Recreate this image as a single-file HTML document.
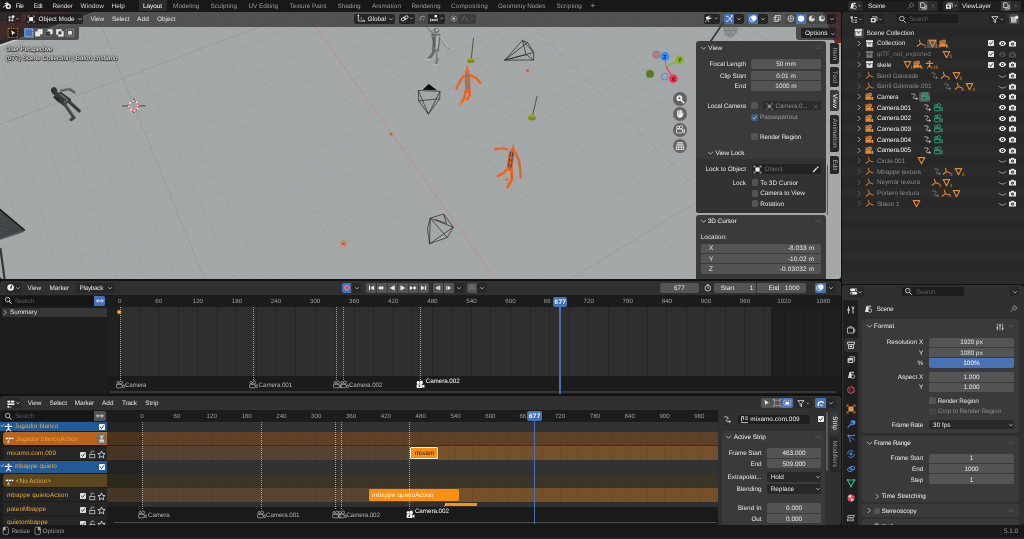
<!DOCTYPE html>
<html lang="en"><head><meta charset="utf-8"><title>Blender</title><style>
html,body{margin:0;padding:0;background:#121212;}
body{width:1024px;height:539px;position:relative;overflow:hidden;font-family:"Liberation Sans", sans-serif;}
div,span.t,svg{position:absolute;box-sizing:border-box;}
span.t{white-space:nowrap;text-rendering:geometricPrecision;}
body{transform:translateZ(0);will-change:transform;}
</style></head><body>
<div style="left:0px;top:0px;width:1024px;height:12px;background:#181818;"></div>
<div style="left:0;top:12px;width:841px;height:267px;border-radius:3px;overflow:hidden;background:#a4a8a8"><svg style="left:0;top:0" width="841" height="267" viewBox="0 12 841 267"><line x1="-52.2" y1="12" x2="0.2" y2="279" stroke="#8c9191" stroke-width="0.6" opacity="0.28"/><line x1="-31.0" y1="12" x2="29.4" y2="279" stroke="#8c9191" stroke-width="0.6" opacity="0.28"/><line x1="-9.9" y1="12" x2="58.6" y2="279" stroke="#8c9191" stroke-width="0.6" opacity="0.28"/><line x1="11.2" y1="12" x2="87.8" y2="279" stroke="#8c9191" stroke-width="0.6" opacity="0.28"/><line x1="32.4" y1="12" x2="117.0" y2="279" stroke="#8c9191" stroke-width="0.6" opacity="0.28"/><line x1="53.5" y1="12" x2="146.2" y2="279" stroke="#8c9191" stroke-width="0.6" opacity="0.28"/><line x1="74.7" y1="12" x2="175.3" y2="279" stroke="#8c9191" stroke-width="0.6" opacity="0.28"/><line x1="95.8" y1="12" x2="204.5" y2="279" stroke="#7c8282" stroke-width="0.7" opacity="0.42"/><line x1="117.0" y1="12" x2="233.7" y2="279" stroke="#8c9191" stroke-width="0.6" opacity="0.28"/><line x1="138.1" y1="12" x2="262.9" y2="279" stroke="#8c9191" stroke-width="0.6" opacity="0.28"/><line x1="159.2" y1="12" x2="292.1" y2="279" stroke="#8c9191" stroke-width="0.6" opacity="0.28"/><line x1="180.4" y1="12" x2="321.3" y2="279" stroke="#8c9191" stroke-width="0.6" opacity="0.28"/><line x1="201.5" y1="12" x2="350.4" y2="279" stroke="#8c9191" stroke-width="0.6" opacity="0.28"/><line x1="222.7" y1="12" x2="379.6" y2="279" stroke="#8c9191" stroke-width="0.6" opacity="0.28"/><line x1="243.8" y1="12" x2="408.8" y2="279" stroke="#8c9191" stroke-width="0.6" opacity="0.28"/><line x1="265.0" y1="12" x2="438.0" y2="279" stroke="#8c9191" stroke-width="0.6" opacity="0.28"/><line x1="286.1" y1="12" x2="467.2" y2="279" stroke="#8c9191" stroke-width="0.6" opacity="0.28"/><line x1="328.4" y1="12" x2="525.6" y2="279" stroke="#8c9191" stroke-width="0.6" opacity="0.28"/><line x1="349.5" y1="12" x2="554.7" y2="279" stroke="#8c9191" stroke-width="0.6" opacity="0.28"/><line x1="370.7" y1="12" x2="583.9" y2="279" stroke="#8c9191" stroke-width="0.6" opacity="0.28"/><line x1="391.8" y1="12" x2="613.1" y2="279" stroke="#8c9191" stroke-width="0.6" opacity="0.28"/><line x1="413.0" y1="12" x2="642.3" y2="279" stroke="#8c9191" stroke-width="0.6" opacity="0.28"/><line x1="434.1" y1="12" x2="671.5" y2="279" stroke="#8c9191" stroke-width="0.6" opacity="0.28"/><line x1="455.3" y1="12" x2="700.7" y2="279" stroke="#8c9191" stroke-width="0.6" opacity="0.28"/><line x1="476.4" y1="12" x2="729.9" y2="279" stroke="#8c9191" stroke-width="0.6" opacity="0.28"/><line x1="497.5" y1="12" x2="759.0" y2="279" stroke="#8c9191" stroke-width="0.6" opacity="0.28"/><line x1="518.7" y1="12" x2="788.2" y2="279" stroke="#7c8282" stroke-width="0.7" opacity="0.42"/><line x1="539.8" y1="12" x2="817.4" y2="279" stroke="#8c9191" stroke-width="0.6" opacity="0.28"/><line x1="561.0" y1="12" x2="846.6" y2="279" stroke="#8c9191" stroke-width="0.6" opacity="0.28"/><line x1="582.1" y1="12" x2="875.8" y2="279" stroke="#8c9191" stroke-width="0.6" opacity="0.28"/><line x1="603.3" y1="12" x2="905.0" y2="279" stroke="#8c9191" stroke-width="0.6" opacity="0.28"/><line x1="624.4" y1="12" x2="934.2" y2="279" stroke="#8c9191" stroke-width="0.6" opacity="0.28"/><line x1="645.5" y1="12" x2="963.3" y2="279" stroke="#8c9191" stroke-width="0.6" opacity="0.28"/><line x1="666.7" y1="12" x2="992.5" y2="279" stroke="#8c9191" stroke-width="0.6" opacity="0.28"/><line x1="687.8" y1="12" x2="1021.7" y2="279" stroke="#8c9191" stroke-width="0.6" opacity="0.28"/><line x1="709.0" y1="12" x2="1050.9" y2="279" stroke="#8c9191" stroke-width="0.6" opacity="0.28"/><line x1="730.1" y1="12" x2="1080.1" y2="279" stroke="#7c8282" stroke-width="0.7" opacity="0.42"/><line x1="751.3" y1="12" x2="1109.3" y2="279" stroke="#8c9191" stroke-width="0.6" opacity="0.28"/><line x1="772.4" y1="12" x2="1138.5" y2="279" stroke="#8c9191" stroke-width="0.6" opacity="0.28"/><line x1="793.6" y1="12" x2="1167.6" y2="279" stroke="#8c9191" stroke-width="0.6" opacity="0.28"/><line x1="814.7" y1="12" x2="1196.8" y2="279" stroke="#8c9191" stroke-width="0.6" opacity="0.28"/><line x1="835.8" y1="12" x2="1226.0" y2="279" stroke="#8c9191" stroke-width="0.6" opacity="0.28"/><line x1="156.5" y1="12" x2="-605.5" y2="279" stroke="#8c9191" stroke-width="0.6" opacity="0.28"/><line x1="192.0" y1="12" x2="-556.5" y2="279" stroke="#8c9191" stroke-width="0.6" opacity="0.28"/><line x1="227.5" y1="12" x2="-507.5" y2="279" stroke="#8c9191" stroke-width="0.6" opacity="0.28"/><line x1="263.0" y1="12" x2="-458.5" y2="279" stroke="#8c9191" stroke-width="0.6" opacity="0.28"/><line x1="298.5" y1="12" x2="-409.5" y2="279" stroke="#7c8282" stroke-width="0.7" opacity="0.42"/><line x1="334.0" y1="12" x2="-360.5" y2="279" stroke="#8c9191" stroke-width="0.6" opacity="0.28"/><line x1="369.5" y1="12" x2="-311.5" y2="279" stroke="#8c9191" stroke-width="0.6" opacity="0.28"/><line x1="405.0" y1="12" x2="-262.5" y2="279" stroke="#8c9191" stroke-width="0.6" opacity="0.28"/><line x1="440.5" y1="12" x2="-213.5" y2="279" stroke="#8c9191" stroke-width="0.6" opacity="0.28"/><line x1="476.0" y1="12" x2="-164.5" y2="279" stroke="#8c9191" stroke-width="0.6" opacity="0.28"/><line x1="511.5" y1="12" x2="-115.5" y2="279" stroke="#8c9191" stroke-width="0.6" opacity="0.28"/><line x1="547.0" y1="12" x2="-66.5" y2="279" stroke="#8c9191" stroke-width="0.6" opacity="0.28"/><line x1="582.5" y1="12" x2="-17.5" y2="279" stroke="#8c9191" stroke-width="0.6" opacity="0.28"/><line x1="618.0" y1="12" x2="31.5" y2="279" stroke="#8c9191" stroke-width="0.6" opacity="0.28"/><line x1="689.0" y1="12" x2="129.5" y2="279" stroke="#8c9191" stroke-width="0.6" opacity="0.28"/><line x1="724.4" y1="12" x2="178.4" y2="279" stroke="#8c9191" stroke-width="0.6" opacity="0.28"/><line x1="759.9" y1="12" x2="227.4" y2="279" stroke="#8c9191" stroke-width="0.6" opacity="0.28"/><line x1="795.4" y1="12" x2="276.4" y2="279" stroke="#8c9191" stroke-width="0.6" opacity="0.28"/><line x1="830.9" y1="12" x2="325.4" y2="279" stroke="#8c9191" stroke-width="0.6" opacity="0.28"/><line x1="866.4" y1="12" x2="374.4" y2="279" stroke="#8c9191" stroke-width="0.6" opacity="0.28"/><line x1="901.9" y1="12" x2="423.4" y2="279" stroke="#8c9191" stroke-width="0.6" opacity="0.28"/><line x1="937.4" y1="12" x2="472.4" y2="279" stroke="#8c9191" stroke-width="0.6" opacity="0.28"/><line x1="972.9" y1="12" x2="521.4" y2="279" stroke="#8c9191" stroke-width="0.6" opacity="0.28"/><line x1="1008.4" y1="12" x2="570.4" y2="279" stroke="#7c8282" stroke-width="0.7" opacity="0.42"/><line x1="1043.9" y1="12" x2="619.4" y2="279" stroke="#8c9191" stroke-width="0.6" opacity="0.28"/><line x1="1079.4" y1="12" x2="668.4" y2="279" stroke="#8c9191" stroke-width="0.6" opacity="0.28"/><line x1="1114.9" y1="12" x2="717.4" y2="279" stroke="#8c9191" stroke-width="0.6" opacity="0.28"/><line x1="1150.4" y1="12" x2="766.4" y2="279" stroke="#8c9191" stroke-width="0.6" opacity="0.28"/><line x1="1185.9" y1="12" x2="815.4" y2="279" stroke="#8c9191" stroke-width="0.6" opacity="0.28"/><line x1="1221.4" y1="12" x2="864.4" y2="279" stroke="#8c9191" stroke-width="0.6" opacity="0.28"/><line x1="1256.9" y1="12" x2="913.4" y2="279" stroke="#8c9191" stroke-width="0.6" opacity="0.28"/><line x1="1292.4" y1="12" x2="962.4" y2="279" stroke="#8c9191" stroke-width="0.6" opacity="0.28"/><line x1="1327.9" y1="12" x2="1011.4" y2="279" stroke="#8c9191" stroke-width="0.6" opacity="0.28"/><line x1="1363.3" y1="12" x2="1060.3" y2="279" stroke="#7c8282" stroke-width="0.7" opacity="0.42"/><line x1="1398.8" y1="12" x2="1109.3" y2="279" stroke="#8c9191" stroke-width="0.6" opacity="0.28"/><line x1="1434.3" y1="12" x2="1158.3" y2="279" stroke="#8c9191" stroke-width="0.6" opacity="0.28"/><line x1="1469.8" y1="12" x2="1207.3" y2="279" stroke="#8c9191" stroke-width="0.6" opacity="0.28"/><line x1="1505.3" y1="12" x2="1256.3" y2="279" stroke="#8c9191" stroke-width="0.6" opacity="0.28"/><line x1="1540.8" y1="12" x2="1305.3" y2="279" stroke="#8c9191" stroke-width="0.6" opacity="0.28"/><line x1="1576.3" y1="12" x2="1354.3" y2="279" stroke="#8c9191" stroke-width="0.6" opacity="0.28"/><line x1="1611.8" y1="12" x2="1403.3" y2="279" stroke="#8c9191" stroke-width="0.6" opacity="0.28"/><line x1="1647.3" y1="12" x2="1452.3" y2="279" stroke="#8c9191" stroke-width="0.6" opacity="0.28"/><line x1="1682.8" y1="12" x2="1501.3" y2="279" stroke="#8c9191" stroke-width="0.6" opacity="0.28"/><line x1="1718.3" y1="12" x2="1550.3" y2="279" stroke="#7c8282" stroke-width="0.7" opacity="0.42"/><line x1="1753.8" y1="12" x2="1599.3" y2="279" stroke="#8c9191" stroke-width="0.6" opacity="0.28"/><line x1="1789.3" y1="12" x2="1648.3" y2="279" stroke="#8c9191" stroke-width="0.6" opacity="0.28"/><line x1="1824.8" y1="12" x2="1697.3" y2="279" stroke="#8c9191" stroke-width="0.6" opacity="0.28"/><line x1="1860.3" y1="12" x2="1746.3" y2="279" stroke="#8c9191" stroke-width="0.6" opacity="0.28"/><line x1="1895.8" y1="12" x2="1795.3" y2="279" stroke="#8c9191" stroke-width="0.6" opacity="0.28"/><line x1="1931.3" y1="12" x2="1844.3" y2="279" stroke="#8c9191" stroke-width="0.6" opacity="0.28"/><line x1="1966.8" y1="12" x2="1893.3" y2="279" stroke="#8c9191" stroke-width="0.6" opacity="0.28"/><line x1="2002.2" y1="12" x2="1942.2" y2="279" stroke="#8c9191" stroke-width="0.6" opacity="0.28"/><line x1="2037.7" y1="12" x2="1991.2" y2="279" stroke="#8c9191" stroke-width="0.6" opacity="0.28"/><line x1="2073.2" y1="12" x2="2040.2" y2="279" stroke="#7c8282" stroke-width="0.7" opacity="0.42"/><line x1="2108.7" y1="12" x2="2089.2" y2="279" stroke="#8c9191" stroke-width="0.6" opacity="0.28"/><line x1="2144.2" y1="12" x2="2138.2" y2="279" stroke="#8c9191" stroke-width="0.6" opacity="0.28"/><line x1="2179.7" y1="12" x2="2187.2" y2="279" stroke="#8c9191" stroke-width="0.6" opacity="0.28"/><line x1="2215.2" y1="12" x2="2236.2" y2="279" stroke="#8c9191" stroke-width="0.6" opacity="0.28"/><line x1="2250.7" y1="12" x2="2285.2" y2="279" stroke="#8c9191" stroke-width="0.6" opacity="0.28"/><line x1="2286.2" y1="12" x2="2334.2" y2="279" stroke="#8c9191" stroke-width="0.6" opacity="0.28"/><line x1="2321.7" y1="12" x2="2383.2" y2="279" stroke="#8c9191" stroke-width="0.6" opacity="0.28"/><line x1="2357.2" y1="12" x2="2432.2" y2="279" stroke="#8c9191" stroke-width="0.6" opacity="0.28"/><line x1="2392.7" y1="12" x2="2481.2" y2="279" stroke="#8c9191" stroke-width="0.6" opacity="0.28"/><line x1="2428.2" y1="12" x2="2530.2" y2="279" stroke="#7c8282" stroke-width="0.7" opacity="0.42"/><line x1="2463.7" y1="12" x2="2579.2" y2="279" stroke="#8c9191" stroke-width="0.6" opacity="0.28"/><line x1="304.8" y1="12" x2="495.6" y2="279" stroke="#c8807b" stroke-width="0.8" opacity="0.7"/><line x1="653.5" y1="12" x2="80.5" y2="279" stroke="#a6ac78" stroke-width="0.8" opacity="0.3"/><polygon points="0,12 98,12 0,46.5" fill="#c4c8c8"/><polygon points="0,12 94,12 0,44.5" fill="#2c2626"/><polygon points="0,12 70,12 0,38" fill="#701c1c"/><polygon points="0,12 30,12 0,24" fill="#2a1a1a"/><line x1="4" y1="12" x2="-8" y2="42.0" stroke="#1e1414" stroke-width="1.3" opacity="0.85"/><line x1="13" y1="12" x2="1" y2="38.6" stroke="#1e1414" stroke-width="1.3" opacity="0.85"/><line x1="22" y1="12" x2="10" y2="35.2" stroke="#1e1414" stroke-width="1.3" opacity="0.85"/><line x1="31" y1="12" x2="19" y2="31.8" stroke="#1e1414" stroke-width="1.3" opacity="0.85"/><line x1="40" y1="12" x2="28" y2="28.4" stroke="#1e1414" stroke-width="1.3" opacity="0.85"/><line x1="49" y1="12" x2="37" y2="25.0" stroke="#1e1414" stroke-width="1.3" opacity="0.85"/><line x1="58" y1="12" x2="46" y2="21.6" stroke="#1e1414" stroke-width="1.3" opacity="0.85"/><line x1="67" y1="12" x2="55" y2="18.2" stroke="#1e1414" stroke-width="1.3" opacity="0.85"/><line x1="76" y1="12" x2="64" y2="14.8" stroke="#1e1414" stroke-width="1.3" opacity="0.85"/><line x1="0" y1="18" x2="70" y2="12.0" stroke="#c03030" stroke-width="0.9" opacity="0.55"/><line x1="0" y1="23" x2="57" y2="12.5" stroke="#c03030" stroke-width="0.9" opacity="0.55"/><line x1="0" y1="28" x2="44" y2="13.0" stroke="#c03030" stroke-width="0.9" opacity="0.55"/><line x1="0" y1="33" x2="31" y2="13.5" stroke="#c03030" stroke-width="0.9" opacity="0.55"/><line x1="0" y1="38" x2="18" y2="14.0" stroke="#c03030" stroke-width="0.9" opacity="0.55"/><polygon points="0,209 24.5,230 23,232.5 0,240" fill="#464a4c"/><line x1="0" y1="213.0" x2="20.0" y2="229.5" stroke="#2e3234" stroke-width="0.6" opacity="0.8"/><line x1="0" y1="217.4" x2="18.8" y2="230.1" stroke="#2e3234" stroke-width="0.6" opacity="0.8"/><line x1="0" y1="221.8" x2="17.6" y2="230.7" stroke="#2e3234" stroke-width="0.6" opacity="0.8"/><line x1="0" y1="226.2" x2="16.4" y2="231.3" stroke="#2e3234" stroke-width="0.6" opacity="0.8"/><line x1="0" y1="230.6" x2="15.2" y2="231.9" stroke="#2e3234" stroke-width="0.6" opacity="0.8"/><line x1="0" y1="235.0" x2="14.0" y2="232.5" stroke="#2e3234" stroke-width="0.6" opacity="0.8"/><line x1="-1" y1="208.6" x2="24.4" y2="230" stroke="#161616" stroke-width="1.5" stroke-linecap="round"/><line x1="0" y1="239.6" x2="23.5" y2="232" stroke="#8c9090" stroke-width="0.6"/><line x1="0.3" y1="248" x2="4.6" y2="279" stroke="#353838" stroke-width="2.2"/><line x1="723.6" y1="22" x2="710.4" y2="41.8" stroke="#3c3f3f" stroke-width="1.9"/><polygon points="722.5,26.5 738.5,26.5 737.5,33 730.5,38.5 724.5,35" fill="#8f9393"/><path d="M724 27L730.5 38M728 27L733 36.5M733 27L736 33.5M723 31L737.8 30M724 34.5L735 35" stroke="#6c7070" stroke-width="0.5" fill="none"/><polygon points="823,12 841,12 841,43 835,43" fill="#6e2626"/><path d="M826 14L841 20M829 12L841 30M834 26L841 28M836 34L841 40M830 18L838 36" stroke="#b8a090" stroke-width="0.6" fill="none" opacity="0.7"/><g stroke-linecap="round" stroke-linejoin="round"><path d="M61 90.4 L69.4 88.9 L74.6 92.5" stroke="#5c5f5f" stroke-width="2.5" fill="none"/><path d="M62 89.6 L69.2 88.2" stroke="#8a8d8d" stroke-width="0.8" fill="none"/><path d="M54.8 94 L61.2 92.6 L71 99.8 L63.8 105.2 L57 100.6 Z" fill="#3a3c3c" stroke="#2c2e2e" stroke-width="1"/><path d="M60.5 94.5 L67.5 99.8 L64.5 102.5" stroke="#6a6d6d" stroke-width="1.6" fill="none"/><ellipse cx="54.2" cy="90.8" rx="3.1" ry="3.8" fill="#333535" transform="rotate(-20 54.2 90.8)"/><path d="M54.6 97.2 L58.4 99.8" stroke="#262828" stroke-width="2.4" fill="none"/><path d="M69.5 102 L79.2 110.8" stroke="#363838" stroke-width="3.3" fill="none"/><path d="M71 101.8 L79 108.8" stroke="#707373" stroke-width="0.8" fill="none"/><path d="M65.2 105 L74 117.6 L71 119.6" stroke="#444646" stroke-width="3.2" fill="none"/><path d="M66.6 105 L74.6 116.4" stroke="#7c7f7f" stroke-width="0.8" fill="none"/></g><g fill="none"><path d="M122 105.9H129.5M138 105.9H145.5M133.7 98.5V102.5M133.7 109.5V113" stroke="#2b2b2b" stroke-width="0.8"/><circle cx="133.7" cy="105.9" r="4.9" stroke="#f4f4f4" stroke-width="1.4"/><circle cx="133.7" cy="105.9" r="4.9" stroke="#e2383c" stroke-width="1.4" stroke-dasharray="1.9 1.95"/></g><g stroke-linecap="round" stroke-linejoin="round"><path d="M426.2 25.2 L430 30 L433.4 34.4" stroke="#808383" stroke-width="2" fill="none"/><path d="M426.6 25 L430.4 29.6" stroke="#c8caca" stroke-width="0.8" fill="none"/><path d="M432 34.6 L440 34.6 L439.4 42 L438.4 51 L432.6 51 L433 42 Z" fill="#747777" stroke="#4c4f4f" stroke-width="0.6"/><path d="M436.4 35.6 L439 35.8 L438.4 42 L437.6 49 L435.6 49 Z" fill="#b4b6b6" stroke="none"/><path d="M433.6 38 L434.4 47" stroke="#4a4d4d" stroke-width="1" fill="none"/><circle cx="436.3" cy="30.8" r="2.4" fill="#7a7d7d" stroke="#555858" stroke-width="0.5"/><circle cx="437" cy="30.2" r="1.1" fill="#c0c2c2"/><path d="M440 35.8 L443.8 43 L448.8 48.8" stroke="#8c8f8f" stroke-width="2" fill="none"/><path d="M440.8 36.4 L444.4 42.6 L448 47.2" stroke="#d8dada" stroke-width="0.8" fill="none"/><path d="M434 51 L431.6 55.5 L428.6 58.8" stroke="#686b6b" stroke-width="2.9" fill="none"/><path d="M437.2 51 L437.6 58 L436 64.6" stroke="#7c7f7f" stroke-width="2.9" fill="none"/><path d="M438.2 52 L438.4 57.6" stroke="#c4c6c6" stroke-width="0.9" fill="none"/><path d="M427.2 59.6 L430 59.2 M434.2 65 L437 64.7" stroke="#b8bbbb" stroke-width="1.6" fill="none"/></g><line x1="473.5" y1="38" x2="471.4" y2="58" stroke="#4a4d30" stroke-width="0.9"/><ellipse cx="470.8" cy="60.4" rx="3.9" ry="2.7" fill="#9aa52e"/><ellipse cx="470.8" cy="61.4" rx="3.5" ry="1.6" fill="#7c8a22"/><line x1="537.1" y1="96" x2="532.7" y2="115" stroke="#4a4d30" stroke-width="0.9"/><ellipse cx="532" cy="117.4" rx="4.1" ry="3" fill="#9aa52e"/><ellipse cx="532" cy="118.5" rx="3.7" ry="1.8" fill="#7c8a22"/><g stroke="#262626" stroke-width="0.7" fill="none" stroke-linejoin="round"><path d="M504.7 60.2 L522.4 40.4 L533.7 52.5 L533.7 60 Z"/><path d="M522.4 40.4 L527.5 42.5 L533.7 52.5 M504.7 60.2 L527.5 42.5 M504.7 60.2 L533.7 52.5 M504.7 60.2 L526 54.5 L533.7 60 M526 54.5 L522.4 40.4"/></g><circle cx="527.6" cy="70.4" r="1.5" fill="#d0622a"/><circle cx="391" cy="134" r="1.5" fill="#d0622a"/><circle cx="343.5" cy="243.7" r="1.4" fill="#b5532a"/><circle cx="343.5" cy="243.7" r="3" fill="none" stroke="#f0653a" stroke-width="0.8"/><g stroke-linecap="round" stroke-linejoin="round" fill="none"><path d="M467.3 66.2 L467.3 69.5" stroke="#f0641e" stroke-width="1.5"/><circle cx="467.3" cy="71.6" r="2.1" fill="#f0641e"/><circle cx="467.3" cy="71.8" r="1" fill="#9a8e88"/><path d="M467.3 75 L467.8 90" stroke="#f0641e" stroke-width="5.6"/><path d="M467.3 75.5 L467.8 89.5" stroke="#74777a" stroke-width="3.6"/><path d="M467.4 74.5 L467.8 90.5 M465.5 78.5 L469.6 78.2 M465.6 83 L469.8 82.8" stroke="#f0641e" stroke-width="1"/><path d="M464 75.6 L460.2 80.5 L456.4 88.4" stroke="#f0641e" stroke-width="2.4"/><path d="M471 75.4 L476.8 78.6 L480.2 83" stroke="#f0641e" stroke-width="2.4"/><path d="M463.4 77 L460.4 81" stroke="#9a8070" stroke-width="0.8"/><path d="M466 90 L464.6 97 L461.4 103.4" stroke="#f0641e" stroke-width="2.7"/><path d="M469.4 90 L469.8 95 L467 99.6" stroke="#f0641e" stroke-width="2.6"/><path d="M465.8 91.5 L464.8 96.5 M469.3 91 L469.5 94.6" stroke="#8a7a70" stroke-width="0.9"/><path d="M459.6 104 L462.4 103.4" stroke="#f47a3c" stroke-width="1.6"/></g><polygon points="422.6,89.8 428.9,84 437,90.2" fill="#0c0c0c"/><g stroke="#262626" stroke-width="0.7" fill="none" stroke-linejoin="round"><path d="M418.3 90.5 L440 91.4 L439.7 98.8 L418.7 100.8 Z"/><path d="M418.3 90.5 L428.4 114.2 L440 91.4 M418.7 100.8 L428.4 114.2 L439.7 98.8"/></g><g stroke-linecap="round" stroke-linejoin="round" fill="none"><circle cx="496" cy="149" r="1.8" fill="#f0641e"/><path d="M497 149 L502 148.4 L507 149.4" stroke="#f0641e" stroke-width="2.2"/><path d="M513.3 145.2 L513.1 148" stroke="#f0641e" stroke-width="1.5"/><circle cx="513" cy="150" r="2.2" fill="#f0641e"/><circle cx="513" cy="150.2" r="1" fill="#8a7e78"/><path d="M511.6 153 L509.6 168" stroke="#f0641e" stroke-width="6"/><path d="M511.6 153.5 L509.7 167.5" stroke="#4e5154" stroke-width="4"/><path d="M511.8 152.5 L509.6 168.5 M509.2 157.5 L513.4 158 M508.6 162.5 L512.6 163" stroke="#f0641e" stroke-width="1"/><path d="M515.6 152.6 L519.4 162 L520.9 177.6" stroke="#f0641e" stroke-width="2.5"/><path d="M517 156 L519.6 164 L520.6 172" stroke="#8a7468" stroke-width="0.8"/><path d="M508 168.4 L503.2 173.4 L498 176" stroke="#f0641e" stroke-width="2.6"/><path d="M511.6 169 L511.8 180 L507.6 187" stroke="#f0641e" stroke-width="2.8"/><path d="M511.6 170 L511.8 179" stroke="#8a7468" stroke-width="0.9"/><circle cx="506.7" cy="179.6" r="1.3" fill="#e8631f"/></g><g stroke="#262626" stroke-width="0.7" fill="none" stroke-linejoin="round"><path d="M430.2 218.2 L443.5 214 L453.3 227.2 L447.2 237.5 L429.5 243.8 Z"/><path d="M430.2 218.2 L447.2 237.5 M429.5 243.8 L453.3 227.2 M430.2 218.2 L453.3 227.2 M435.5 219.5 L446.5 223.5 L443.5 214 M427.5 229 L430.2 218.2 M427.5 229 L429.5 243.8"/></g></svg></div>
<div style="left:842px;top:12px;width:182px;height:272px;background:#282828;border-radius:3px;"></div>
<div style="left:0px;top:281px;width:841px;height:112.6px;background:#1d1d1d;border-radius:3px;"></div>
<div style="left:0px;top:396px;width:841px;height:129px;background:#1d1d1d;border-radius:3px;"></div>
<div style="left:842px;top:285px;width:182px;height:240px;background:#303030;border-radius:3px;"></div>
<div style="left:0px;top:525px;width:1024px;height:12px;background:#181818;"></div>
<div style="left:0px;top:536.5px;width:1024px;height:3px;background:#1b2433;"></div>
<svg style="left:2px;top:1px;" width="10" height="9" viewBox="0 0 10 9"><path d="M1.2 6.2 L5.6 2.6 L3.2 2.6 M4.6 1.3 L8.2 4.2" stroke="#e6e6e6" stroke-width="1" fill="none" stroke-linecap="round"/><circle cx="6.3" cy="5.4" r="2.6" fill="#e6e6e6"/><circle cx="6.5" cy="5.4" r="1.1" fill="#181818"/></svg>
<span class="t" style="top:1.60px;line-height:10px;font-size:6.4px;color:#dcdcdc;letter-spacing:-0.6px;left:15.5px;">File</span>
<span class="t" style="top:1.60px;line-height:10px;font-size:6.4px;color:#dcdcdc;letter-spacing:-0.6px;left:33.5px;">Edit</span>
<span class="t" style="top:1.60px;line-height:10px;font-size:6.4px;color:#dcdcdc;letter-spacing:-0.161px;left:52.5px;">Render</span>
<span class="t" style="top:1.60px;line-height:10px;font-size:6.4px;color:#dcdcdc;letter-spacing:0.128px;left:80.5px;">Window</span>
<span class="t" style="top:1.60px;line-height:10px;font-size:6.4px;color:#dcdcdc;letter-spacing:0.086px;left:111.5px;">Help</span>
<div style="left:138.5px;top:0px;width:28.8px;height:10.6px;background:#2d2d2d;border-radius:0 0 2.5px 2.5px;"></div>
<span class="t" style="top:1.60px;line-height:10px;font-size:6.4px;color:#ffffff;letter-spacing:-0.034px;left:143px;">Layout</span>
<span class="t" style="top:1.60px;line-height:10px;font-size:6.4px;color:#9a9a9a;letter-spacing:0.07px;left:173px;">Modeling</span>
<span class="t" style="top:1.60px;line-height:10px;font-size:6.4px;color:#9a9a9a;letter-spacing:0.023px;left:210.5px;">Sculpting</span>
<span class="t" style="top:1.60px;line-height:10px;font-size:6.4px;color:#9a9a9a;letter-spacing:-0.07px;left:248.5px;">UV Editing</span>
<span class="t" style="top:1.60px;line-height:10px;font-size:6.4px;color:#9a9a9a;letter-spacing:-0.024px;left:289.5px;">Texture Paint</span>
<span class="t" style="top:1.60px;line-height:10px;font-size:6.4px;color:#9a9a9a;letter-spacing:-0.067px;left:337.5px;">Shading</span>
<span class="t" style="top:1.60px;line-height:10px;font-size:6.4px;color:#9a9a9a;letter-spacing:0.064px;left:372px;">Animation</span>
<span class="t" style="top:1.60px;line-height:10px;font-size:6.4px;color:#9a9a9a;letter-spacing:-0.056px;left:411.5px;">Rendering</span>
<span class="t" style="top:1.60px;line-height:10px;font-size:6.4px;color:#9a9a9a;letter-spacing:0.134px;left:451px;">Compositing</span>
<span class="t" style="top:1.60px;line-height:10px;font-size:6.4px;color:#9a9a9a;letter-spacing:-0.058px;left:498px;">Geometry Nodes</span>
<span class="t" style="top:1.60px;line-height:10px;font-size:6.4px;color:#9a9a9a;letter-spacing:0.069px;left:556.5px;">Scripting</span>
<span class="t" style="top:1.30px;line-height:10px;font-size:8px;color:#9a9a9a;left:590.5px;">+</span>
<div style="left:0px;top:12px;width:841px;height:15px;background:rgba(48,48,48,0.72);border-radius:3px 3px 0 0;"></div>
<div style="left:0px;top:27px;width:79px;height:12.6px;background:rgba(48,48,48,0.74);border-radius:0 0 3px 0;"></div>
<div style="left:5.9px;top:14px;width:15.6px;height:9.4px;background:rgba(30,30,30,0.55);border-radius:2px;"></div>
<div style="left:7.5px;top:27.6px;width:11.8px;height:11px;background:rgba(24,12,12,0.6);border-radius:1.5px;"></div>
<svg style="left:6px;top:14px;" width="14" height="10" viewBox="0 0 14 10"><path d="M2.2 3.2H7.8M2.2 6.2H7.8M3.6 1.8V7.6M6.4 1.8V7.6" stroke="#d8d8d8" stroke-width="0.8" fill="none"/><circle cx="7.2" cy="2.6" r="1.3" fill="#f0f0f0"/><path d="M10.3 4.2L11.5 5.4L12.7 4.2" stroke="#d0d0d0" stroke-width="0.7" fill="none"/></svg>
<div style="left:25.8px;top:14px;width:57px;height:9.6px;background:rgba(30,30,30,0.85);border-radius:2px;"></div>
<svg style="left:27.2px;top:14.7px;" width="8.2" height="8.2" viewBox="0 0 9 9"><rect x="2.3" y="2.3" width="4.4" height="4.4" fill="#f0f0f0"/><path d="M1 2.6V1H2.6M6.4 1H8V2.6M8 6.4V8H6.4M2.6 8H1V6.4" stroke="#e0e0e0" stroke-width="0.7" fill="none"/></svg>
<span class="t" style="top:14.70px;line-height:10px;font-size:6.4px;color:#eeeeee;letter-spacing:-0.021px;left:38.5px;">Object Mode</span>
<svg style="left:76.5px;top:16px;" width="6" height="6" viewBox="0 0 6 6"><path d="M1.3 2.2L3 3.9L4.7 2.2" stroke="#d8d8d8" stroke-width="0.7" fill="none"/></svg>
<span class="t" style="top:14.70px;line-height:10px;font-size:6.4px;color:#e4e4e4;letter-spacing:-0.062px;left:90.5px;">View</span>
<span class="t" style="top:14.70px;line-height:10px;font-size:6.4px;color:#e4e4e4;letter-spacing:-0.044px;left:112px;">Select</span>
<span class="t" style="top:14.70px;line-height:10px;font-size:6.4px;color:#e4e4e4;letter-spacing:0.208px;left:137px;">Add</span>
<span class="t" style="top:14.70px;line-height:10px;font-size:6.4px;color:#e4e4e4;left:157px;">Object</span>
<div style="left:354px;top:14px;width:40.7px;height:9.6px;background:rgba(30,30,30,0.85);border-radius:2px;"></div>
<svg style="left:355.5px;top:14.3px;" width="10" height="9" viewBox="0 0 10 9"><path d="M2.3 1.2V7H8.4" stroke="#e8e8e8" stroke-width="0.8" fill="none"/><path d="M4.3 4.9L6 3.3M6.6 5.6L7.6 4.8" stroke="#e8e8e8" stroke-width="0.7"/><circle cx="2.3" cy="1.4" r="0.8" fill="#e8e8e8"/><circle cx="8.4" cy="7" r="0.8" fill="#e8e8e8"/></svg>
<span class="t" style="top:14.70px;line-height:10px;font-size:6.4px;color:#eeeeee;left:367.5px;">Global</span>
<svg style="left:387.5px;top:16px;" width="6" height="6" viewBox="0 0 6 6"><path d="M1.3 2.2L3 3.9L4.7 2.2" stroke="#d8d8d8" stroke-width="0.7" fill="none"/></svg>
<div style="left:398.5px;top:14px;width:16.3px;height:9.6px;background:rgba(30,30,30,0.85);border-radius:2px;"></div>
<svg style="left:399.5px;top:14.3px;" width="15" height="9" viewBox="0 0 15 9"><ellipse cx="3.4" cy="5" rx="2.3" ry="1.5" transform="rotate(-35 3.4 5)" stroke="#e8e8e8" stroke-width="0.8" fill="none"/><ellipse cx="6" cy="3.6" rx="2.3" ry="1.5" transform="rotate(-35 6 3.6)" stroke="#e8e8e8" stroke-width="0.8" fill="none"/><path d="M10.3 3.7L11.5 4.9L12.7 3.7" stroke="#d8d8d8" stroke-width="0.7" fill="none"/></svg>
<div style="left:418px;top:14px;width:9.6px;height:9.6px;background:rgba(70,70,70,0.85);border-radius:2px 0 0 2px;"></div>
<svg style="left:418px;top:14.3px;" width="10" height="9" viewBox="0 0 10 9"><path d="M2.5 6.5A2.6 2.6 0 1 1 7 3.5" stroke="#8c8c8c" stroke-width="1.3" fill="none"/><path d="M5 4.6A0.9 0.9 0 1 0 6.3 5.7" stroke="#8c8c8c" stroke-width="0.9" fill="none"/></svg>
<div style="left:428px;top:14px;width:17px;height:9.6px;background:rgba(30,30,30,0.85);border-radius:0 2px 2px 0;"></div>
<svg style="left:428.5px;top:14.3px;" width="17" height="9" viewBox="0 0 17 9"><path d="M1.4 6H8.2M1.4 4.6V7.4M3.7 4.9V7.1M5.9 4.9V7.1M8.2 4.6V7.4" stroke="#ececec" stroke-width="0.8" fill="none"/><rect x="5.6" y="1" width="2.4" height="2.4" fill="#ffffff"/><path d="M11.5 3.7L12.7 4.9L13.9 3.7" stroke="#d8d8d8" stroke-width="0.7" fill="none"/></svg>
<div style="left:449px;top:14px;width:9.6px;height:9.6px;background:rgba(70,70,70,0.85);border-radius:2px 0 0 2px;"></div>
<svg style="left:449px;top:14.3px;" width="10" height="9" viewBox="0 0 10 9"><circle cx="4.8" cy="4.6" r="2.7" stroke="#9a9a9a" stroke-width="0.7" fill="none"/><circle cx="4.8" cy="4.6" r="1.2" fill="#d8d8d8"/></svg>
<div style="left:459px;top:14px;width:16.5px;height:9.6px;background:rgba(58,58,58,0.85);border-radius:0 2px 2px 0;"></div>
<svg style="left:459.5px;top:14.3px;" width="16" height="9" viewBox="0 0 16 9"><path d="M1 7C3 7 3.3 2 4.6 2C5.9 2 6.2 7 8.2 7" stroke="#7a7a7a" stroke-width="0.7" fill="none"/><path d="M11 3.7L12.2 4.9L13.4 3.7" stroke="#6e6e6e" stroke-width="0.7" fill="none"/></svg>
<div style="left:703.5px;top:14px;width:16.5px;height:9.6px;background:rgba(30,30,30,0.85);border-radius:2px;"></div>
<svg style="left:704px;top:14.3px;" width="16" height="9" viewBox="0 0 16 9"><path d="M1.6 3.2L6.4 1.6L7.6 4.4L2.8 6Z" fill="#ececec"/><circle cx="6.1" cy="3.1" r="1" fill="#2a2a2a"/><path d="M2 6.4L1.6 8M4 6L4.5 8" stroke="#ececec" stroke-width="0.7"/><path d="M11 3.7L12.2 4.9L13.4 3.7" stroke="#d8d8d8" stroke-width="0.7" fill="none"/></svg>
<div style="left:723.5px;top:14px;width:10px;height:9.6px;background:#4772b3;border-radius:2px 0 0 2px;"></div>
<svg style="left:723.5px;top:14.3px;" width="10" height="9" viewBox="0 0 10 9"><path d="M2 7.5C4 7 6.5 5 8 1.6M2 2C4 2.4 6.5 4.4 8 7.6" stroke="#f2f2f2" stroke-width="0.9" fill="none"/><path d="M6.4 1.2L8.4 1.2L8.4 3.2Z" fill="#f2f2f2"/></svg>
<div style="left:734px;top:14px;width:9.5px;height:9.6px;background:rgba(30,30,30,0.85);border-radius:0 2px 2px 0;"></div>
<svg style="left:735.5px;top:16px;" width="6" height="6" viewBox="0 0 6 6"><path d="M1.3 2.2L3 3.9L4.7 2.2" stroke="#d8d8d8" stroke-width="0.7" fill="none"/></svg>
<div style="left:747.5px;top:14px;width:10px;height:9.6px;background:#4772b3;border-radius:2px 0 0 2px;"></div>
<svg style="left:747.5px;top:14.3px;" width="10" height="9" viewBox="0 0 10 9"><circle cx="4.2" cy="5" r="2.7" fill="none" stroke="#f2f2f2" stroke-width="0.8"/><circle cx="5.9" cy="3.9" r="2.7" fill="#f2f2f2"/></svg>
<div style="left:758px;top:14px;width:10px;height:9.6px;background:rgba(30,30,30,0.85);border-radius:0 2px 2px 0;"></div>
<svg style="left:760px;top:16px;" width="6" height="6" viewBox="0 0 6 6"><path d="M1.3 2.2L3 3.9L4.7 2.2" stroke="#d8d8d8" stroke-width="0.7" fill="none"/></svg>
<div style="left:771.5px;top:14px;width:9.7px;height:9.6px;background:rgba(70,70,70,0.85);border-radius:2px;"></div>
<svg style="left:771.5px;top:14.3px;" width="10" height="9" viewBox="0 0 10 9"><rect x="2" y="3" width="4.6" height="4.6" stroke="#e4e4e4" stroke-width="0.7" fill="none"/><rect x="3.6" y="1.4" width="4.6" height="4.6" stroke="#e4e4e4" stroke-width="0.7" fill="none"/></svg>
<div style="left:785px;top:14px;width:10.5px;height:9.6px;background:rgba(70,70,70,0.85);border-radius:2px 0 0 2px;"></div>
<svg style="left:785.5px;top:14.3px;" width="10" height="9" viewBox="0 0 10 9"><circle cx="4.8" cy="4.6" r="3" stroke="#e4e4e4" stroke-width="0.7" fill="none"/><path d="M1.8 4.6H7.8M4.8 1.6V7.6" stroke="#e4e4e4" stroke-width="0.6"/></svg>
<div style="left:796px;top:14px;width:10px;height:9.6px;background:#4772b3;"></div>
<svg style="left:796px;top:14.3px;" width="10" height="9" viewBox="0 0 10 9"><circle cx="5" cy="4.6" r="3.2" fill="#f4f4f4"/></svg>
<div style="left:806.5px;top:14px;width:9.6px;height:9.6px;background:rgba(70,70,70,0.85);"></div>
<svg style="left:806.5px;top:14.3px;" width="10" height="9" viewBox="0 0 10 9"><circle cx="4.8" cy="4.6" r="3" fill="#d8d8d8"/><path d="M4.8 4.6V1.6A3 3 0 0 1 7.8 4.6Z" fill="#555"/></svg>
<div style="left:816.6px;top:14px;width:9.6px;height:9.6px;background:rgba(70,70,70,0.85);"></div>
<svg style="left:816.6px;top:14.3px;" width="10" height="9" viewBox="0 0 10 9"><circle cx="4.8" cy="4.6" r="3" fill="#d8d8d8"/><circle cx="5.8" cy="3.7" r="1.7" fill="#6a6a6a"/></svg>
<div style="left:826.7px;top:14px;width:9.6px;height:9.6px;background:rgba(30,30,30,0.85);border-radius:0 2px 2px 0;"></div>
<svg style="left:828.5px;top:16px;" width="6" height="6" viewBox="0 0 6 6"><path d="M1.3 2.2L3 3.9L4.7 2.2" stroke="#d8d8d8" stroke-width="0.7" fill="none"/></svg>
<div style="left:796px;top:27px;width:45px;height:13.3px;background:rgba(48,48,48,0.78);border-radius:0 0 0 3px;"></div>
<div style="left:801px;top:28px;width:35.3px;height:10.4px;background:rgba(30,30,30,0.9);border-radius:2px;"></div>
<span class="t" style="top:29.20px;line-height:10px;font-size:6.4px;color:#eeeeee;letter-spacing:0.067px;left:805px;">Options</span>
<svg style="left:829.5px;top:30.5px;" width="6" height="6" viewBox="0 0 6 6"><path d="M1.3 2.2L3 3.9L4.7 2.2" stroke="#d8d8d8" stroke-width="0.7" fill="none"/></svg>
<svg style="left:7px;top:27px;" width="13" height="12" viewBox="0 0 13 12"><rect x="1.2" y="1.4" width="9.6" height="9.2" fill="none" stroke="#e8a02a" stroke-width="0.8" stroke-dasharray="1.4 1"/><path d="M4.2 3.2L8.6 6.2L6.4 6.6L5.3 8.6Z" fill="#f4f4f4"/></svg>
<div style="left:24px;top:28.3px;width:9.6px;height:9.4px;background:#4772b3;border-radius:1px;"></div>
<svg style="left:24px;top:28.3px;" width="10" height="10" viewBox="0 0 10 10"><rect x="1" y="1" width="7.6" height="7.4" fill="none" stroke="#e8eefc" stroke-width="0.7" stroke-dasharray="1.2 0.9"/></svg>
<svg style="left:34.3px;top:28.3px;" width="10" height="10" viewBox="0 0 10 10"><rect x="0" y="0" width="10" height="9.4" fill="#545454"/><rect x="1.2" y="3.4" width="5" height="5" fill="#e8e8e8"/><rect x="3.6" y="1.2" width="5" height="5" fill="#e8e8e8"/></svg>
<svg style="left:44.4px;top:28.3px;" width="10" height="10" viewBox="0 0 10 10"><rect x="0" y="0" width="10" height="9.4" fill="#545454"/><rect x="3.6" y="1.2" width="5" height="5" fill="#e8e8e8"/><rect x="1.2" y="3.4" width="5" height="5" fill="#3a3a3a" stroke="#d0d0d0" stroke-width="0.5" stroke-dasharray="1 0.8"/></svg>
<svg style="left:54.5px;top:28.3px;" width="10" height="10" viewBox="0 0 10 10"><rect x="0" y="0" width="10" height="9.4" fill="#545454"/><rect x="1.2" y="1.2" width="5.4" height="5.4" fill="#e8e8e8"/><rect x="3.2" y="3.2" width="5.4" height="5.4" fill="#e8e8e8"/><rect x="3.4" y="3.4" width="3" height="3" fill="#3a3a3a"/></svg>
<svg style="left:64.6px;top:28.3px;" width="10" height="10" viewBox="0 0 10 10"><rect x="0" y="0" width="10" height="9.4" rx="1" fill="#545454"/><rect x="1.2" y="1.2" width="7.4" height="7" fill="none" stroke="#d0d0d0" stroke-width="0.6" stroke-dasharray="1 0.8"/><rect x="3.2" y="3" width="3.6" height="3.6" fill="#e8e8e8"/></svg>
<span class="t" style="top:44.50px;line-height:10px;font-size:6.4px;color:#ffffff;letter-spacing:-0.136px;left:6px;text-shadow:0 0 1.5px #000,0 0 1.5px #000,0.4px 0.6px 1px #000;">User Perspective</span>
<span class="t" style="top:54.00px;line-height:10px;font-size:6.4px;color:#ffffff;letter-spacing:-0.007px;left:6px;text-shadow:0 0 1.5px #000,0 0 1.5px #000,0.4px 0.6px 1px #000;">(677) Scene Collection | Balon cristiano</span>
<svg style="left:640px;top:44px;" width="50" height="46" viewBox="0 0 50 46"><g transform="translate(-640,-44)"><line x1="666" y1="66.6" x2="664.8" y2="57" stroke="#3a8ff0" stroke-width="1.1"/><line x1="666" y1="66.6" x2="679.8" y2="60" stroke="#7fb526" stroke-width="1.1"/><line x1="666" y1="66.6" x2="673.3" y2="78.6" stroke="#f03a52" stroke-width="1.1"/><circle cx="656.4" cy="54.6" r="3.6" fill="#a08486" stroke="#e0425a" stroke-width="0.7"/><circle cx="650" cy="73.9" r="3.9" fill="#5d7328" stroke="#6f9428" stroke-width="0.6"/><circle cx="664.8" cy="76.6" r="3.5" fill="#9aa6b8" fill-opacity="0.6" stroke="#3c78d8" stroke-width="0.7"/><circle cx="664.8" cy="56.5" r="4.4" fill="#2e8cf4"/><circle cx="679.8" cy="59.9" r="4.2" fill="#80b422"/><circle cx="673.3" cy="78.7" r="4.3" fill="#f2334f"/><text x="664.8" y="58.6" font-size="5.6" font-weight="700" text-anchor="middle" fill="#10233c" font-family="Liberation Sans, sans-serif">Z</text><text x="679.8" y="62" font-size="5.6" font-weight="700" text-anchor="middle" fill="#263a08" font-family="Liberation Sans, sans-serif">Y</text><text x="673.3" y="80.8" font-size="5.6" font-weight="700" text-anchor="middle" fill="#3f0a12" font-family="Liberation Sans, sans-serif">X</text></g></svg>
<div style="left:673px;top:91.7px;width:14px;height:14px;background:rgba(78,78,78,0.76);border-radius:7px;"></div>
<div style="left:673px;top:107.4px;width:14px;height:14px;background:rgba(78,78,78,0.76);border-radius:7px;"></div>
<div style="left:673px;top:123.4px;width:14px;height:14px;background:rgba(78,78,78,0.76);border-radius:7px;"></div>
<div style="left:673px;top:139.2px;width:14px;height:14px;background:rgba(78,78,78,0.76);border-radius:7px;"></div>
<svg style="left:673px;top:91.7px;" width="14" height="14" viewBox="0 0 14 14"><circle cx="6.4" cy="6.2" r="2.9" fill="#f0f0f0"/><path d="M8.4 8.4L10.8 10.8" stroke="#f0f0f0" stroke-width="1.5" stroke-linecap="round"/><path d="M5 6.2H7.8M6.4 4.8V7.6" stroke="#555" stroke-width="0.7"/></svg>
<svg style="left:673px;top:107.4px;" width="14" height="14" viewBox="0 0 14 14"><path d="M4.6 7.6V4.4M6 7V3.4M7.4 7V3.2M8.8 7.2V3.8" stroke="#f0f0f0" stroke-width="1.1" stroke-linecap="round"/><path d="M4.2 7.4C4.2 9.4 5.4 10.8 7 10.8C8.6 10.8 9.6 9.8 10.2 7.4L10.6 6C10 5.6 9.5 6 9.2 7L4.2 7.4Z" fill="#f0f0f0"/></svg>
<svg style="left:673px;top:123.4px;" width="14" height="14" viewBox="0 0 14 14"><rect x="3.4" y="6" width="6" height="4" rx="0.8" fill="none" stroke="#f0f0f0" stroke-width="0.8"/><circle cx="5" cy="4.4" r="1.4" fill="none" stroke="#f0f0f0" stroke-width="0.8"/><circle cx="8" cy="4.2" r="1.7" fill="none" stroke="#f0f0f0" stroke-width="0.8"/><path d="M9.4 7.6L11.4 6.4V9.8L9.4 8.6" fill="none" stroke="#f0f0f0" stroke-width="0.8"/></svg>
<svg style="left:673px;top:139.2px;" width="14" height="14" viewBox="0 0 14 14"><path d="M4.6 3.6H9.4L11 10.4H3Z" fill="none" stroke="#f0f0f0" stroke-width="0.8"/><path d="M4.1 5.8H9.9M3.5 8H10.5M6.2 3.6L5.6 10.4M7.8 3.6L8.4 10.4" stroke="#f0f0f0" stroke-width="0.7"/></svg>
<div style="left:696.3px;top:41.3px;width:129.5px;height:171.5px;background:#3a3a3a;border-radius:3px;"></div>
<svg style="left:699.5px;top:45.2px;" width="7" height="6" viewBox="0 0 7 6"><path d="M1 1.8L3.5 4.3L6 1.8" stroke="#d0d0d0" stroke-width="0.8" fill="none"/></svg>
<span class="t" style="top:44.00px;line-height:10px;font-size:6.4px;color:#f0f0f0;letter-spacing:0.062px;left:708.2px;">View</span>
<svg style="left:815px;top:46.2px;" width="7" height="4" viewBox="0 0 7 4"><rect x="0.4" y="0.6" width="0.9" height="0.9" fill="#5a5a5a"/><rect x="0.4" y="2.1" width="0.9" height="0.9" fill="#5a5a5a"/><rect x="2.0" y="0.6" width="0.9" height="0.9" fill="#5a5a5a"/><rect x="2.0" y="2.1" width="0.9" height="0.9" fill="#5a5a5a"/><rect x="3.6" y="0.6" width="0.9" height="0.9" fill="#5a5a5a"/><rect x="3.6" y="2.1" width="0.9" height="0.9" fill="#5a5a5a"/><rect x="5.200000000000001" y="0.6" width="0.9" height="0.9" fill="#5a5a5a"/><rect x="5.200000000000001" y="2.1" width="0.9" height="0.9" fill="#5a5a5a"/></svg>
<span class="t" style="top:60.00px;line-height:10px;font-size:6.4px;color:#e6e6e6;letter-spacing:-0.038px;right:278.04px;">Focal Length</span>
<div style="left:751.3px;top:59.4px;width:69.4px;height:9.3px;background:#545454;border-radius:2px;"></div>
<span class="t" style="top:60.15px;line-height:10px;font-size:6.4px;color:#e6e6e6;left:686.00px;width:200px;text-align:center;">50 mm</span>
<span class="t" style="top:71.80px;line-height:10px;font-size:6.4px;color:#e6e6e6;letter-spacing:-0.028px;right:278.03px;">Clip Start</span>
<div style="left:751.3px;top:71.4px;width:69.4px;height:8.9px;background:#545454;border-radius:2px 2px 0 0;"></div>
<span class="t" style="top:71.95px;line-height:10px;font-size:6.4px;color:#e6e6e6;left:686.00px;width:200px;text-align:center;">0.01 m</span>
<span class="t" style="top:82.10px;line-height:10px;font-size:6.4px;color:#e6e6e6;letter-spacing:0.042px;right:277.96px;">End</span>
<div style="left:751.3px;top:81.3px;width:69.4px;height:9.4px;background:#545454;border-radius:0 0 2px 2px;"></div>
<span class="t" style="top:82.10px;line-height:10px;font-size:6.4px;color:#e6e6e6;left:686.00px;width:200px;text-align:center;">1000 m</span>
<span class="t" style="top:101.70px;line-height:10px;font-size:6.4px;color:#e6e6e6;letter-spacing:-0.108px;right:278.11px;">Local Camera</span>
<div style="left:751.4px;top:102px;width:7px;height:7px;background:#545454;border-radius:1.5px;"></div>
<div style="left:762.9px;top:101px;width:57.8px;height:9.4px;background:#2c2c2c;border-radius:2px;"></div>
<svg style="left:764.5px;top:101.5px;" width="9" height="9" viewBox="0 0 9 9"><rect x="2.6" y="2.6" width="3.6" height="3.6" fill="#8a8a8a"/><path d="M1.2 2.8V1.2H2.8M6 1.2H7.6V2.8M7.6 6V7.6H6M2.8 7.6H1.2V6" stroke="#8a8a8a" stroke-width="0.6" fill="none"/></svg>
<span class="t" style="top:101.70px;line-height:10px;font-size:6.4px;color:#8c8c8c;letter-spacing:-0.126px;left:775.4px;">Camera.0...</span>
<svg style="left:812px;top:102.5px;" width="7" height="7" viewBox="0 0 7 7"><path d="M1.6 1.6L5.4 5.4M5.4 1.6L1.6 5.4" stroke="#707070" stroke-width="0.7"/></svg>
<div style="left:751.4px;top:113.9px;width:7px;height:7px;background:#41597e;border-radius:1.5px;"></div>
<svg style="left:751.4px;top:113.9px;" width="7" height="7" viewBox="0 0 7 7"><path d="M1.5 3.5L3.0 5.2L5.7 1.6" stroke="#b8c0cc" stroke-width="0.9" fill="none"/></svg>
<span class="t" style="top:113.30px;line-height:10px;font-size:6.4px;color:#9a9a9a;letter-spacing:-0.014px;left:760px;">Passepartout</span>
<div style="left:751.4px;top:133.1px;width:7px;height:7px;background:#545454;border-radius:1.5px;"></div>
<span class="t" style="top:132.60px;line-height:10px;font-size:6.4px;color:#e6e6e6;letter-spacing:-0.154px;left:760px;">Render Region</span>
<svg style="left:706.9px;top:150.3px;" width="7" height="6" viewBox="0 0 7 6"><path d="M1 1.8L3.5 4.3L6 1.8" stroke="#d0d0d0" stroke-width="0.8" fill="none"/></svg>
<span class="t" style="top:149.10px;line-height:10px;font-size:6.4px;color:#f0f0f0;left:715.4px;">View Lock</span>
<div style="left:696.3px;top:159.4px;width:129.5px;height:53.4px;background:#323232;border-radius:0 0 3px 3px;"></div>
<span class="t" style="top:165.00px;line-height:10px;font-size:6.4px;color:#e6e6e6;letter-spacing:-0.026px;right:278.03px;">Lock to Object</span>
<div style="left:751.5px;top:164.2px;width:69.2px;height:9.7px;background:#222222;border-radius:2px;"></div>
<svg style="left:752.5px;top:164.6px;" width="9" height="9" viewBox="0 0 9 9"><rect x="2.4" y="2.4" width="4.2" height="4.2" fill="#f0f0f0"/><path d="M1 2.6V1H2.6M6.4 1H8V2.6M8 6.4V8H6.4M2.6 8H1V6.4" stroke="#e0e0e0" stroke-width="0.7" fill="none"/></svg>
<span class="t" style="top:165.00px;line-height:10px;font-size:6.4px;color:#6c6c6c;letter-spacing:-0.081px;left:764.6px;">Object</span>
<svg style="left:810.5px;top:164.6px;" width="9" height="9" viewBox="0 0 9 9"><path d="M1.6 7.4L2 6L5.2 2.8L6.2 3.8L3 7Z" fill="#e0e0e0"/><path d="M5.6 2.4L6.8 1.2L7.8 2.2L6.6 3.4Z" fill="#e0e0e0"/></svg>
<span class="t" style="top:178.50px;line-height:10px;font-size:6.4px;color:#e6e6e6;right:278.00px;">Lock</span>
<div style="left:751.5px;top:179.2px;width:6.8px;height:6.8px;background:#545454;border-radius:1.5px;"></div>
<span class="t" style="top:178.50px;line-height:10px;font-size:6.4px;color:#e6e6e6;letter-spacing:0.029px;left:760.2px;">To 3D Cursor</span>
<div style="left:751.5px;top:189.8px;width:6.8px;height:6.8px;background:#545454;border-radius:1.5px;"></div>
<span class="t" style="top:189.00px;line-height:10px;font-size:6.4px;color:#e6e6e6;letter-spacing:-0.061px;left:760.2px;">Camera to View</span>
<div style="left:751.5px;top:200.4px;width:6.8px;height:6.8px;background:#545454;border-radius:1.5px;"></div>
<span class="t" style="top:199.70px;line-height:10px;font-size:6.4px;color:#e6e6e6;letter-spacing:0.023px;left:760.2px;">Rotation</span>
<div style="left:826.6px;top:165px;width:1.2px;height:50px;background:#5a5a5a;border-radius:1px;"></div>
<div style="left:696.3px;top:214.8px;width:129.5px;height:64.2px;background:#3a3a3a;border-radius:3px 3px 0 0;"></div>
<svg style="left:699.5px;top:218.4px;" width="7" height="6" viewBox="0 0 7 6"><path d="M1 1.8L3.5 4.3L6 1.8" stroke="#d0d0d0" stroke-width="0.8" fill="none"/></svg>
<span class="t" style="top:217.20px;line-height:10px;font-size:6.4px;color:#f0f0f0;letter-spacing:-0.014px;left:707.7px;">3D Cursor</span>
<svg style="left:815px;top:219.4px;" width="7" height="4" viewBox="0 0 7 4"><rect x="0.4" y="0.6" width="0.9" height="0.9" fill="#5a5a5a"/><rect x="0.4" y="2.1" width="0.9" height="0.9" fill="#5a5a5a"/><rect x="2.0" y="0.6" width="0.9" height="0.9" fill="#5a5a5a"/><rect x="2.0" y="2.1" width="0.9" height="0.9" fill="#5a5a5a"/><rect x="3.6" y="0.6" width="0.9" height="0.9" fill="#5a5a5a"/><rect x="3.6" y="2.1" width="0.9" height="0.9" fill="#5a5a5a"/><rect x="5.200000000000001" y="0.6" width="0.9" height="0.9" fill="#5a5a5a"/><rect x="5.200000000000001" y="2.1" width="0.9" height="0.9" fill="#5a5a5a"/></svg>
<span class="t" style="top:233.30px;line-height:10px;font-size:6.4px;color:#e6e6e6;letter-spacing:0.007px;left:700.8px;">Location:</span>
<div style="left:700.8px;top:243.5px;width:119.8px;height:9.5px;background:#545454;border-radius:2px 2px 0 0;"></div>
<span class="t" style="top:244.30px;line-height:10px;font-size:6.4px;color:#e6e6e6;left:709px;">X</span>
<span class="t" style="top:244.30px;line-height:10px;font-size:6.4px;color:#e6e6e6;letter-spacing:0.158px;right:209.84px;">-8.033 m</span>
<div style="left:700.8px;top:253.8px;width:119.8px;height:9.5px;background:#545454;border-radius:0;"></div>
<span class="t" style="top:254.60px;line-height:10px;font-size:6.4px;color:#e6e6e6;left:709px;">Y</span>
<span class="t" style="top:254.60px;line-height:10px;font-size:6.4px;color:#e6e6e6;letter-spacing:0.158px;right:209.84px;">-10.02 m</span>
<div style="left:700.8px;top:264.2px;width:119.8px;height:9.5px;background:#545454;border-radius:0 0 2px 2px;"></div>
<span class="t" style="top:265.00px;line-height:10px;font-size:6.4px;color:#e6e6e6;left:709px;">Z</span>
<span class="t" style="top:265.00px;line-height:10px;font-size:6.4px;color:#e6e6e6;letter-spacing:0.217px;right:209.78px;">-0.03032 m</span>
<div style="left:829.5px;top:43.3px;width:9.6px;height:20.400000000000006px;background:rgba(28,28,28,0.92);border-radius:1px 2.5px 2.5px 1px;"></div>
<div style="left:834.3px;top:53.5px;width:0;height:0;transform:rotate(90deg)"><span class="t" style="top:-5.00px;line-height:10px;font-size:6.4px;color:#a8a8a8;letter-spacing:0.016px;left:-99.99px;width:200px;text-align:center;">Item</span></div>
<div style="left:829.5px;top:67.3px;width:9.6px;height:20.0px;background:rgba(28,28,28,0.92);border-radius:1px 2.5px 2.5px 1px;"></div>
<div style="left:834.3px;top:77.3px;width:0;height:0;transform:rotate(90deg)"><span class="t" style="top:-5.00px;line-height:10px;font-size:6.4px;color:#a8a8a8;letter-spacing:0.191px;left:-99.90px;width:200px;text-align:center;">Tool</span></div>
<div style="left:829.5px;top:90.2px;width:9.6px;height:21.200000000000003px;background:#3a3a3a;border-radius:1px 2.5px 2.5px 1px;"></div>
<div style="left:834.3px;top:100.80000000000001px;width:0;height:0;transform:rotate(90deg)"><span class="t" style="top:-5.00px;line-height:10px;font-size:6.4px;color:#ffffff;letter-spacing:0.062px;left:-99.97px;width:200px;text-align:center;">View</span></div>
<div style="left:829.5px;top:114.8px;width:9.6px;height:36.89999999999999px;background:rgba(28,28,28,0.92);border-radius:1px 2.5px 2.5px 1px;"></div>
<div style="left:834.3px;top:133.25px;width:0;height:0;transform:rotate(90deg)"><span class="t" style="top:-5.00px;line-height:10px;font-size:6.4px;color:#a8a8a8;letter-spacing:0.064px;left:-99.97px;width:200px;text-align:center;">Animation</span></div>
<div style="left:829.5px;top:155.6px;width:9.6px;height:18.0px;background:rgba(28,28,28,0.92);border-radius:1px 2.5px 2.5px 1px;"></div>
<div style="left:834.3px;top:164.6px;width:0;height:0;transform:rotate(90deg)"><span class="t" style="top:-5.00px;line-height:10px;font-size:6.4px;color:#a8a8a8;letter-spacing:-0.129px;left:-100.06px;width:200px;text-align:center;">Edit</span></div>
<div style="left:847.8px;top:1px;width:15.5px;height:9.6px;background:#2a2a2a;border-radius:2px 0 0 2px;"></div>
<svg style="left:848px;top:1px;" width="16" height="10" viewBox="0 0 16 10"><path d="M2.2 7.6L3.6 2.2L5.4 1.6L6 7.6Z" fill="#e8e8e8"/><circle cx="6.6" cy="6.4" r="1.7" fill="#2a2a2a" stroke="#e8e8e8" stroke-width="0.7"/><circle cx="6.8" cy="2.4" r="0.9" fill="#e8e8e8"/><path d="M10.4 4L11.6 5.2L12.8 4" stroke="#d8d8d8" stroke-width="0.7" fill="none"/></svg>
<div style="left:863.7px;top:1px;width:53.8px;height:9.6px;background:#1f1f1f;"></div>
<span class="t" style="top:1.60px;line-height:10px;font-size:6.4px;color:#e4e4e4;letter-spacing:-0.125px;left:868px;">Scene</span>
<svg style="left:906px;top:1px;" width="10" height="10" viewBox="0 0 10 10"><path d="M5.4 1.6L8 4.2L6.6 4.6L5.6 6.4L3.2 4L5 3Z M3.8 5.6L1.8 7.8" stroke="#8a8a8a" stroke-width="0.7" fill="none"/></svg>
<div style="left:918px;top:1px;width:9.6px;height:9.6px;background:#3f3f3f;"></div>
<svg style="left:918px;top:1px;" width="10" height="10" viewBox="0 0 10 10"><path d="M2.6 1.8H5.6L7 3.2V6.6H2.6Z" fill="none" stroke="#e8e8e8" stroke-width="0.8"/><path d="M4 8H8.2V4" fill="none" stroke="#e8e8e8" stroke-width="0.8"/></svg>
<div style="left:928px;top:1px;width:9.6px;height:9.6px;background:#2c2c2c;border-radius:0 2px 2px 0;"></div>
<svg style="left:928px;top:1px;" width="10" height="10" viewBox="0 0 10 10"><path d="M3.2 3.2L6.6 6.6M6.6 3.2L3.2 6.6" stroke="#5a5a5a" stroke-width="0.8"/></svg>
<div style="left:943.4px;top:1px;width:15.2px;height:9.6px;background:#2a2a2a;border-radius:2px 0 0 2px;"></div>
<svg style="left:943.6px;top:1px;" width="16" height="10" viewBox="0 0 16 10"><rect x="2" y="3.4" width="5" height="4.4" fill="#e8e8e8"/><path d="M3.2 2.2H8.2V6.6" stroke="#e8e8e8" stroke-width="0.8" fill="none"/><circle cx="4.4" cy="5.6" r="1.1" fill="#2a2a2a"/><path d="M10.4 4L11.6 5.2L12.8 4" stroke="#d8d8d8" stroke-width="0.7" fill="none"/></svg>
<div style="left:959px;top:1px;width:41.7px;height:9.6px;background:#1f1f1f;"></div>
<span class="t" style="top:1.60px;line-height:10px;font-size:6.4px;color:#e4e4e4;letter-spacing:-0.104px;left:962.1px;">ViewLayer</span>
<div style="left:1001.2px;top:1px;width:9.6px;height:9.6px;background:#3f3f3f;"></div>
<svg style="left:1001.2px;top:1px;" width="10" height="10" viewBox="0 0 10 10"><path d="M2.6 1.8H5.6L7 3.2V6.6H2.6Z" fill="none" stroke="#e8e8e8" stroke-width="0.8"/><path d="M4 8H8.2V4" fill="none" stroke="#e8e8e8" stroke-width="0.8"/></svg>
<div style="left:1011.2px;top:1px;width:9.4px;height:9.6px;background:#2c2c2c;border-radius:0 2px 2px 0;"></div>
<svg style="left:1011px;top:1px;" width="10" height="10" viewBox="0 0 10 10"><path d="M3.2 3.2L6.6 6.6M6.6 3.2L3.2 6.6" stroke="#5a5a5a" stroke-width="0.8"/></svg>
<div style="left:842px;top:12px;width:182px;height:14.3px;background:#2b2b2b;border-radius:3px 3px 0 0;"></div>
<div style="left:848.6px;top:14.2px;width:15px;height:9.6px;background:#242424;border-radius:2px;"></div>
<svg style="left:848.8px;top:14.5px;" width="15" height="9" viewBox="0 0 15 9"><rect x="1.6" y="1.4" width="2.2" height="2.2" fill="#e8e8e8"/><path d="M2.7 3.6V7.2H5M2.7 5H5" stroke="#e8e8e8" stroke-width="0.6" fill="none"/><path d="M5.4 2.5H8.2M5.6 5H8.2M5.6 7.2H8.2" stroke="#e8e8e8" stroke-width="0.9"/><path d="M10.2 3.7L11.4 4.9L12.6 3.7" stroke="#d8d8d8" stroke-width="0.7" fill="none"/></svg>
<div style="left:869px;top:14.2px;width:15px;height:9.6px;background:#242424;border-radius:2px;"></div>
<svg style="left:869.2px;top:14.5px;" width="15" height="9" viewBox="0 0 15 9"><rect x="1.8" y="3" width="5" height="4.4" fill="#d8d8d8"/><path d="M3 1.8H8V6" stroke="#d8d8d8" stroke-width="0.8" fill="none"/><circle cx="4.2" cy="5.2" r="1.1" fill="#1f1f1f"/><path d="M10.2 3.7L11.4 4.9L12.6 3.7" stroke="#d8d8d8" stroke-width="0.7" fill="none"/></svg>
<div style="left:895.9px;top:14.3px;width:62.3px;height:9.2px;background:#1d1d1d;border-radius:2px;"></div>
<svg style="left:897.5px;top:14.6px;" width="9" height="9" viewBox="0 0 9 9"><circle cx="3.8" cy="3.6" r="2.3" stroke="#e0e0e0" stroke-width="0.8" fill="none"/><path d="M5.4 5.4L7.8 7.8" stroke="#e0e0e0" stroke-width="0.9"/></svg>
<span class="t" style="top:14.90px;line-height:10px;font-size:6.4px;color:#5e5e5e;letter-spacing:-0.125px;left:908.9px;">Search</span>
<div style="left:989.4px;top:14.2px;width:15.6px;height:9.6px;background:#242424;border-radius:2px;"></div>
<svg style="left:989.6px;top:14.5px;" width="16" height="9" viewBox="0 0 16 9"><path d="M1.8 1.6H8L5.6 4.6V7.6L4.2 6.8V4.6Z" stroke="#e8e8e8" stroke-width="0.8" fill="none"/><path d="M10.6 3.7L11.8 4.9L13 3.7" stroke="#d8d8d8" stroke-width="0.7" fill="none"/></svg>
<div style="left:1008.9px;top:14.2px;width:10.4px;height:9.6px;background:#4a4a4a;border-radius:2px;"></div>
<svg style="left:1009px;top:14.5px;" width="10" height="9" viewBox="0 0 10 9"><rect x="2" y="3" width="5.4" height="4.6" fill="#bdbdbd"/><rect x="1.6" y="1.8" width="6.2" height="1.4" fill="#bdbdbd"/><circle cx="7.6" cy="2.4" r="1.7" fill="#e8e8e8"/></svg>
<div style="left:842px;top:38.14px;width:182px;height:10.68px;background:#2b2b2b;"></div>
<div style="left:842px;top:59.5px;width:182px;height:10.68px;background:#2b2b2b;"></div>
<div style="left:842px;top:80.85999999999999px;width:182px;height:10.68px;background:#2b2b2b;"></div>
<div style="left:842px;top:102.21999999999998px;width:182px;height:10.68px;background:#2b2b2b;"></div>
<div style="left:842px;top:123.58000000000001px;width:182px;height:10.68px;background:#2b2b2b;"></div>
<div style="left:842px;top:144.93999999999997px;width:182px;height:10.68px;background:#2b2b2b;"></div>
<div style="left:842px;top:166.29999999999998px;width:182px;height:10.68px;background:#2b2b2b;"></div>
<div style="left:842px;top:187.66px;width:182px;height:10.68px;background:#2b2b2b;"></div>
<div style="left:842px;top:209.02px;width:182px;height:10.68px;background:#2b2b2b;"></div>
<div style="left:842px;top:230.37999999999997px;width:182px;height:10.68px;background:#2b2b2b;"></div>
<div style="left:842px;top:251.73999999999998px;width:182px;height:10.68px;background:#2b2b2b;"></div>
<div style="left:842px;top:273.1px;width:182px;height:10.68px;background:#2b2b2b;"></div>
<div style="left:853.6px;top:27.999999999999996px;width:10px;height:9.6px;background:#4a4a4a;border-radius:2px;"></div>
<svg style="left:854.1px;top:28.299999999999997px;" width="9" height="9" viewBox="0 0 9 9"><rect x="1" y="1.2" width="7" height="2" fill="#e6e6e6"/><path d="M1.5 3.6H7.5V7.8H1.5Z" fill="#e6e6e6"/><rect x="3.3" y="4.4" width="2.4" height="0.9" fill="#282828"/></svg>
<span class="t" style="top:28.80px;line-height:10px;font-size:6.4px;color:#e6e6e6;letter-spacing:-0.029px;left:866.5px;">Scene Collection</span>
<svg style="left:855.7px;top:39.98px;" width="6" height="7" viewBox="0 0 6 7"><path d="M1.8 1L4.3 3.5L1.8 6" stroke="#c0c0c0" stroke-width="0.8" fill="none"/></svg>
<svg style="left:864.5px;top:38.98px;" width="9" height="9" viewBox="0 0 9 9"><rect x="1" y="1.2" width="7" height="2" fill="#e6e6e6"/><path d="M1.5 3.6H7.5V7.8H1.5Z" fill="#e6e6e6"/><rect x="3.3" y="4.4" width="2.4" height="0.9" fill="#282828"/></svg>
<span class="t" style="top:39.48px;line-height:10px;font-size:6.4px;color:#e6e6e6;letter-spacing:0.044px;left:876.9px;">Collection</span>
<svg style="left:916.1px;top:38.98px;" width="9" height="9" viewBox="0 0 9 9"><path d="M3.4 1.2L4.4 4.6L1.2 7.2M4.4 4.6L8 6" stroke="#e08a3c" stroke-width="1.1" fill="none" stroke-linecap="round" stroke-linejoin="round"/></svg>
<span class="t" style="top:41.78px;line-height:10px;font-size:4.6px;color:#e08a3c;left:923.8000000000001px;">13</span>
<div style="left:927.0999999999999px;top:38.68px;width:10.4px;height:9.6px;background:#545454;border-radius:2px;"></div>
<svg style="left:927.8px;top:38.98px;" width="9" height="9" viewBox="0 0 9 9"><path d="M1.2 1.6H7.8L4.5 7.8Z" stroke="#e08a3c" stroke-width="1.1" fill="none" stroke-linejoin="round"/></svg>
<span class="t" style="top:41.78px;line-height:10px;font-size:4.6px;color:#e08a3c;left:935.5px;">11</span>
<svg style="left:937.8px;top:38.98px;" width="10" height="9" viewBox="0 0 10 9"><circle cx="2.8" cy="2.7" r="1.5" fill="#e08a3c"/><circle cx="6" cy="2.4" r="1.9" fill="#e08a3c"/><circle cx="2.8" cy="2.7" r="0.55" fill="#282828"/><circle cx="6" cy="2.4" r="0.7" fill="#282828"/><rect x="1.4" y="4.2" width="5.8" height="3.6" rx="0.6" fill="#e08a3c"/><path d="M7.2 5.4L9.2 4.4V7.8L7.2 6.8Z" fill="#e08a3c"/><rect x="7.6" y="7" width="1.6" height="1" fill="#e08a3c"/></svg>
<span class="t" style="top:41.78px;line-height:10px;font-size:4.6px;color:#e08a3c;left:946.0px;">6</span>
<svg style="left:987.2px;top:39.48px;" width="8" height="8" viewBox="0 0 8 8"><rect x="1" y="1" width="6" height="6" rx="0.8" fill="#e6e6e6"/><path d="M2.2 4L3.6 5.4L6 2.4" stroke="#282828" stroke-width="0.9" fill="none"/></svg>
<svg style="left:997.9px;top:38.98px;" width="9" height="9" viewBox="0 0 9 9"><path d="M0.8 4.5C2 2.6 3.3 2 4.5 2C5.7 2 7 2.6 8.2 4.5C7 6.4 5.7 7 4.5 7C3.3 7 2 6.4 0.8 4.5Z" fill="#e6e6e6"/><circle cx="4.5" cy="4.5" r="1.5" fill="#282828"/><circle cx="4.5" cy="4.5" r="0.7" fill="#e6e6e6"/></svg>
<svg style="left:1008.3px;top:38.98px;" width="9" height="9" viewBox="0 0 9 9"><path d="M1 2.8H2.8L3.4 1.8H5.6L6.2 2.8H8V7.4H1Z" fill="#e6e6e6"/><circle cx="4.5" cy="5" r="1.5" fill="#282828"/><circle cx="4.5" cy="5" r="0.6" fill="#e6e6e6"/></svg>
<svg style="left:855.7px;top:50.66px;" width="6" height="7" viewBox="0 0 6 7"><path d="M1.8 1L4.3 3.5L1.8 6" stroke="#6e6e6e" stroke-width="0.8" fill="none"/></svg>
<svg style="left:864.5px;top:49.66px;" width="9" height="9" viewBox="0 0 9 9"><rect x="1" y="1.2" width="7" height="2" fill="#7a7a7a"/><path d="M1.5 3.6H7.5V7.8H1.5Z" fill="#7a7a7a"/><rect x="3.3" y="4.4" width="2.4" height="0.9" fill="#282828"/></svg>
<span class="t" style="top:50.16px;line-height:10px;font-size:6.4px;color:#7a7a7a;letter-spacing:0.02px;left:876.9px;">glTF_not_exported</span>
<svg style="left:941.5px;top:49.66px;" width="9" height="9" viewBox="0 0 9 9"><path d="M1.2 1.6H7.8L4.5 7.8Z" stroke="#e08a3c" stroke-width="1.1" fill="none" stroke-linejoin="round"/></svg>
<span class="t" style="top:52.46px;line-height:10px;font-size:4.6px;color:#e08a3c;left:949.2px;">3</span>
<svg style="left:987.2px;top:50.16px;" width="8" height="8" viewBox="0 0 8 8"><rect x="1" y="1" width="6" height="6" rx="0.8" fill="#e6e6e6"/><path d="M2.2 4L3.6 5.4L6 2.4" stroke="#282828" stroke-width="0.9" fill="none"/></svg>
<svg style="left:997.9px;top:49.66px;" width="9" height="9" viewBox="0 0 9 9"><path d="M0.8 4.5C2 2.6 3.3 2 4.5 2C5.7 2 7 2.6 8.2 4.5C7 6.4 5.7 7 4.5 7C3.3 7 2 6.4 0.8 4.5Z" fill="#4e4e4e"/><circle cx="4.5" cy="4.5" r="1.5" fill="#282828"/><circle cx="4.5" cy="4.5" r="0.7" fill="#4e4e4e"/></svg>
<svg style="left:1008.3px;top:49.66px;" width="9" height="9" viewBox="0 0 9 9"><path d="M1 2.8H2.8L3.4 1.8H5.6L6.2 2.8H8V7.4H1Z" fill="#4e4e4e"/><circle cx="4.5" cy="5" r="1.5" fill="#282828"/><circle cx="4.5" cy="5" r="0.6" fill="#4e4e4e"/></svg>
<svg style="left:855.7px;top:61.34px;" width="6" height="7" viewBox="0 0 6 7"><path d="M1.8 1L4.3 3.5L1.8 6" stroke="#c0c0c0" stroke-width="0.8" fill="none"/></svg>
<svg style="left:864.5px;top:60.34px;" width="9" height="9" viewBox="0 0 9 9"><rect x="1" y="1.2" width="7" height="2" fill="#e6e6e6"/><path d="M1.5 3.6H7.5V7.8H1.5Z" fill="#e6e6e6"/><rect x="3.3" y="4.4" width="2.4" height="0.9" fill="#282828"/></svg>
<span class="t" style="top:60.84px;line-height:10px;font-size:6.4px;color:#e6e6e6;letter-spacing:-0.084px;left:876.9px;">skele</span>
<svg style="left:902.5px;top:60.34px;" width="9" height="9" viewBox="0 0 9 9"><path d="M1.2 1.6H7.8L4.5 7.8Z" stroke="#e08a3c" stroke-width="1.1" fill="none" stroke-linejoin="round"/></svg>
<span class="t" style="top:63.14px;line-height:10px;font-size:4.6px;color:#e08a3c;left:910.2px;">19</span>
<svg style="left:912.2px;top:60.34px;" width="10" height="9" viewBox="0 0 10 9"><circle cx="2.8" cy="2.7" r="1.5" fill="#e08a3c"/><circle cx="6" cy="2.4" r="1.9" fill="#e08a3c"/><circle cx="2.8" cy="2.7" r="0.55" fill="#282828"/><circle cx="6" cy="2.4" r="0.7" fill="#282828"/><rect x="1.4" y="4.2" width="5.8" height="3.6" rx="0.6" fill="#e08a3c"/><path d="M7.2 5.4L9.2 4.4V7.8L7.2 6.8Z" fill="#e08a3c"/><rect x="7.6" y="7" width="1.6" height="1" fill="#e08a3c"/></svg>
<span class="t" style="top:63.14px;line-height:10px;font-size:4.6px;color:#e08a3c;left:920.4000000000001px;">6</span>
<svg style="left:925.2px;top:60.34px;" width="9" height="9" viewBox="0 0 9 9"><circle cx="4.5" cy="1.6" r="1.1" fill="#e08a3c"/><path d="M1.2 3.4H7.8M4.5 3.2V5.4L2.4 8M4.5 5.4L6.6 8" stroke="#e08a3c" stroke-width="1.1" fill="none" stroke-linecap="round"/></svg>
<span class="t" style="top:63.14px;line-height:10px;font-size:4.6px;color:#e08a3c;left:932.9000000000001px;">15</span>
<svg style="left:987.2px;top:60.84px;" width="8" height="8" viewBox="0 0 8 8"><rect x="1" y="1" width="6" height="6" rx="0.8" fill="#e6e6e6"/><path d="M2.2 4L3.6 5.4L6 2.4" stroke="#282828" stroke-width="0.9" fill="none"/></svg>
<svg style="left:997.9px;top:60.34px;" width="9" height="9" viewBox="0 0 9 9"><path d="M0.8 4.5C2 2.6 3.3 2 4.5 2C5.7 2 7 2.6 8.2 4.5C7 6.4 5.7 7 4.5 7C3.3 7 2 6.4 0.8 4.5Z" fill="#e6e6e6"/><circle cx="4.5" cy="4.5" r="1.5" fill="#282828"/><circle cx="4.5" cy="4.5" r="0.7" fill="#e6e6e6"/></svg>
<svg style="left:1008.3px;top:60.34px;" width="9" height="9" viewBox="0 0 9 9"><path d="M1 2.8H2.8L3.4 1.8H5.6L6.2 2.8H8V7.4H1Z" fill="#e6e6e6"/><circle cx="4.5" cy="5" r="1.5" fill="#282828"/><circle cx="4.5" cy="5" r="0.6" fill="#e6e6e6"/></svg>
<svg style="left:855.7px;top:72.02px;" width="6" height="7" viewBox="0 0 6 7"><path d="M1.8 1L4.3 3.5L1.8 6" stroke="#6e6e6e" stroke-width="0.8" fill="none"/></svg>
<svg style="left:864.5px;top:71.02px;" width="9" height="9" viewBox="0 0 9 9"><path d="M3.4 1.2L4.4 4.6L1.2 7.2M4.4 4.6L8 6" stroke="#b9773a" stroke-width="1.1" fill="none" stroke-linecap="round" stroke-linejoin="round"/></svg>
<span class="t" style="top:71.52px;line-height:10px;font-size:6.4px;color:#8a8a8a;letter-spacing:-0.123px;left:876.9px;">Barril Gatorade</span>
<svg style="left:929.5px;top:71.02px;" width="9" height="9" viewBox="0 0 9 9"><path d="M1.2 2H4.2C5.6 2 5.6 4 4.2 4.4C3 4.8 3 6.6 4.4 6.6H7.4M6 5.2L7.6 6.6L6 8" stroke="#7e7e7e" stroke-width="0.8" fill="none"/></svg>
<svg style="left:940.0px;top:71.02px;" width="9" height="9" viewBox="0 0 9 9"><path d="M3.4 1.2L4.4 4.6L1.2 7.2M4.4 4.6L8 6" stroke="#e08a3c" stroke-width="1.1" fill="none" stroke-linecap="round" stroke-linejoin="round"/></svg>
<span class="t" style="top:73.82px;line-height:10px;font-size:4.6px;color:#e08a3c;left:947.7px;">6</span>
<svg style="left:951.9px;top:71.02px;" width="9" height="9" viewBox="0 0 9 9"><path d="M1.2 1.6H7.8L4.5 7.8Z" stroke="#e08a3c" stroke-width="1.1" fill="none" stroke-linejoin="round"/></svg>
<span class="t" style="top:73.82px;line-height:10px;font-size:4.6px;color:#e08a3c;left:959.6px;">5</span>
<svg style="left:997.9px;top:71.02px;" width="9" height="9" viewBox="0 0 9 9"><path d="M1 4.2C2.6 6.6 6.4 6.6 8 4.2" stroke="#bdbdbd" stroke-width="0.8" fill="none"/></svg>
<svg style="left:1008.3px;top:71.02px;" width="9" height="9" viewBox="0 0 9 9"><path d="M1 2.8H2.8L3.4 1.8H5.6L6.2 2.8H8V7.4H1Z" fill="#e6e6e6"/><circle cx="4.5" cy="5" r="1.5" fill="#282828"/><circle cx="4.5" cy="5" r="0.6" fill="#e6e6e6"/></svg>
<svg style="left:855.7px;top:82.69999999999999px;" width="6" height="7" viewBox="0 0 6 7"><path d="M1.8 1L4.3 3.5L1.8 6" stroke="#6e6e6e" stroke-width="0.8" fill="none"/></svg>
<svg style="left:864.5px;top:81.69999999999999px;" width="9" height="9" viewBox="0 0 9 9"><path d="M3.4 1.2L4.4 4.6L1.2 7.2M4.4 4.6L8 6" stroke="#b9773a" stroke-width="1.1" fill="none" stroke-linecap="round" stroke-linejoin="round"/></svg>
<span class="t" style="top:82.20px;line-height:10px;font-size:6.4px;color:#8a8a8a;letter-spacing:-0.067px;left:876.9px;">Barril Gatorade.001</span>
<svg style="left:942.5px;top:81.69999999999999px;" width="9" height="9" viewBox="0 0 9 9"><path d="M1.2 2H4.2C5.6 2 5.6 4 4.2 4.4C3 4.8 3 6.6 4.4 6.6H7.4M6 5.2L7.6 6.6L6 8" stroke="#7e7e7e" stroke-width="0.8" fill="none"/></svg>
<svg style="left:953.7px;top:81.69999999999999px;" width="9" height="9" viewBox="0 0 9 9"><path d="M3.4 1.2L4.4 4.6L1.2 7.2M4.4 4.6L8 6" stroke="#e08a3c" stroke-width="1.1" fill="none" stroke-linecap="round" stroke-linejoin="round"/></svg>
<span class="t" style="top:84.50px;line-height:10px;font-size:4.6px;color:#e08a3c;left:961.4000000000001px;">6</span>
<svg style="left:964.7px;top:81.69999999999999px;" width="9" height="9" viewBox="0 0 9 9"><path d="M1.2 1.6H7.8L4.5 7.8Z" stroke="#e08a3c" stroke-width="1.1" fill="none" stroke-linejoin="round"/></svg>
<span class="t" style="top:84.50px;line-height:10px;font-size:4.6px;color:#e08a3c;left:972.4000000000001px;">4</span>
<svg style="left:997.9px;top:81.69999999999999px;" width="9" height="9" viewBox="0 0 9 9"><path d="M1 4.2C2.6 6.6 6.4 6.6 8 4.2" stroke="#bdbdbd" stroke-width="0.8" fill="none"/></svg>
<svg style="left:1008.3px;top:81.69999999999999px;" width="9" height="9" viewBox="0 0 9 9"><path d="M1 2.8H2.8L3.4 1.8H5.6L6.2 2.8H8V7.4H1Z" fill="#e6e6e6"/><circle cx="4.5" cy="5" r="1.5" fill="#282828"/><circle cx="4.5" cy="5" r="0.6" fill="#e6e6e6"/></svg>
<svg style="left:855.7px;top:93.38px;" width="6" height="7" viewBox="0 0 6 7"><path d="M1.8 1L4.3 3.5L1.8 6" stroke="#c0c0c0" stroke-width="0.8" fill="none"/></svg>
<svg style="left:864px;top:92.38px;" width="10" height="9" viewBox="0 0 10 9"><circle cx="2.8" cy="2.7" r="1.5" fill="#e08a3c"/><circle cx="6" cy="2.4" r="1.9" fill="#e08a3c"/><circle cx="2.8" cy="2.7" r="0.55" fill="#282828"/><circle cx="6" cy="2.4" r="0.7" fill="#282828"/><rect x="1.4" y="4.2" width="5.8" height="3.6" rx="0.6" fill="#e08a3c"/><path d="M7.2 5.4L9.2 4.4V7.8L7.2 6.8Z" fill="#e08a3c"/><rect x="7.6" y="7" width="1.6" height="1" fill="#e08a3c"/></svg>
<span class="t" style="top:92.88px;line-height:10px;font-size:6.4px;color:#e6e6e6;letter-spacing:-0.206px;left:876.9px;">Camera</span>
<svg style="left:910.1px;top:92.38px;" width="9" height="9" viewBox="0 0 9 9"><path d="M1.2 2H4.2C5.6 2 5.6 4 4.2 4.4C3 4.8 3 6.6 4.4 6.6H7.4M6 5.2L7.6 6.6L6 8" stroke="#c8c8c8" stroke-width="0.8" fill="none"/></svg>
<div style="left:919.4px;top:92.08px;width:10.4px;height:9.6px;background:#545454;border-radius:2px;"></div>
<svg style="left:919.6px;top:92.38px;" width="10" height="9" viewBox="0 0 10 9"><circle cx="2.9" cy="2.7" r="1.3" fill="none" stroke="#27b58c" stroke-width="0.8"/><circle cx="6" cy="2.4" r="1.7" fill="none" stroke="#27b58c" stroke-width="0.8"/><rect x="1.4" y="4.4" width="5.6" height="3.4" rx="0.7" fill="none" stroke="#27b58c" stroke-width="0.8"/><path d="M7.2 5.6L9.2 4.6V7.8L7.2 6.8" fill="none" stroke="#27b58c" stroke-width="0.8"/></svg>
<svg style="left:997.9px;top:92.38px;" width="9" height="9" viewBox="0 0 9 9"><path d="M0.8 4.5C2 2.6 3.3 2 4.5 2C5.7 2 7 2.6 8.2 4.5C7 6.4 5.7 7 4.5 7C3.3 7 2 6.4 0.8 4.5Z" fill="#e6e6e6"/><circle cx="4.5" cy="4.5" r="1.5" fill="#282828"/><circle cx="4.5" cy="4.5" r="0.7" fill="#e6e6e6"/></svg>
<svg style="left:1008.3px;top:92.38px;" width="9" height="9" viewBox="0 0 9 9"><path d="M1 2.8H2.8L3.4 1.8H5.6L6.2 2.8H8V7.4H1Z" fill="#e6e6e6"/><circle cx="4.5" cy="5" r="1.5" fill="#282828"/><circle cx="4.5" cy="5" r="0.6" fill="#e6e6e6"/></svg>
<svg style="left:855.7px;top:104.05999999999999px;" width="6" height="7" viewBox="0 0 6 7"><path d="M1.8 1L4.3 3.5L1.8 6" stroke="#c0c0c0" stroke-width="0.8" fill="none"/></svg>
<svg style="left:864px;top:103.05999999999999px;" width="10" height="9" viewBox="0 0 10 9"><circle cx="2.8" cy="2.7" r="1.5" fill="#e08a3c"/><circle cx="6" cy="2.4" r="1.9" fill="#e08a3c"/><circle cx="2.8" cy="2.7" r="0.55" fill="#282828"/><circle cx="6" cy="2.4" r="0.7" fill="#282828"/><rect x="1.4" y="4.2" width="5.8" height="3.6" rx="0.6" fill="#e08a3c"/><path d="M7.2 5.4L9.2 4.4V7.8L7.2 6.8Z" fill="#e08a3c"/><rect x="7.6" y="7" width="1.6" height="1" fill="#e08a3c"/></svg>
<span class="t" style="top:103.56px;line-height:10px;font-size:6.4px;color:#f4f4f4;letter-spacing:-0.117px;left:876.9px;">Camera.001</span>
<svg style="left:922.5px;top:103.05999999999999px;" width="9" height="9" viewBox="0 0 9 9"><path d="M1.2 2H4.2C5.6 2 5.6 4 4.2 4.4C3 4.8 3 6.6 4.4 6.6H7.4M6 5.2L7.6 6.6L6 8" stroke="#c8c8c8" stroke-width="0.8" fill="none"/></svg>
<svg style="left:932.6px;top:103.05999999999999px;" width="10" height="9" viewBox="0 0 10 9"><circle cx="2.9" cy="2.7" r="1.3" fill="none" stroke="#27b58c" stroke-width="0.8"/><circle cx="6" cy="2.4" r="1.7" fill="none" stroke="#27b58c" stroke-width="0.8"/><rect x="1.4" y="4.4" width="5.6" height="3.4" rx="0.7" fill="none" stroke="#27b58c" stroke-width="0.8"/><path d="M7.2 5.6L9.2 4.6V7.8L7.2 6.8" fill="none" stroke="#27b58c" stroke-width="0.8"/></svg>
<svg style="left:997.9px;top:103.05999999999999px;" width="9" height="9" viewBox="0 0 9 9"><path d="M0.8 4.5C2 2.6 3.3 2 4.5 2C5.7 2 7 2.6 8.2 4.5C7 6.4 5.7 7 4.5 7C3.3 7 2 6.4 0.8 4.5Z" fill="#e6e6e6"/><circle cx="4.5" cy="4.5" r="1.5" fill="#282828"/><circle cx="4.5" cy="4.5" r="0.7" fill="#e6e6e6"/></svg>
<svg style="left:1008.3px;top:103.05999999999999px;" width="9" height="9" viewBox="0 0 9 9"><path d="M1 2.8H2.8L3.4 1.8H5.6L6.2 2.8H8V7.4H1Z" fill="#e6e6e6"/><circle cx="4.5" cy="5" r="1.5" fill="#282828"/><circle cx="4.5" cy="5" r="0.6" fill="#e6e6e6"/></svg>
<svg style="left:855.7px;top:114.74px;" width="6" height="7" viewBox="0 0 6 7"><path d="M1.8 1L4.3 3.5L1.8 6" stroke="#c0c0c0" stroke-width="0.8" fill="none"/></svg>
<svg style="left:864px;top:113.74px;" width="10" height="9" viewBox="0 0 10 9"><circle cx="2.8" cy="2.7" r="1.5" fill="#e08a3c"/><circle cx="6" cy="2.4" r="1.9" fill="#e08a3c"/><circle cx="2.8" cy="2.7" r="0.55" fill="#282828"/><circle cx="6" cy="2.4" r="0.7" fill="#282828"/><rect x="1.4" y="4.2" width="5.8" height="3.6" rx="0.6" fill="#e08a3c"/><path d="M7.2 5.4L9.2 4.4V7.8L7.2 6.8Z" fill="#e08a3c"/><rect x="7.6" y="7" width="1.6" height="1" fill="#e08a3c"/></svg>
<span class="t" style="top:114.24px;line-height:10px;font-size:6.4px;color:#f4f4f4;letter-spacing:-0.117px;left:876.9px;">Camera.002</span>
<svg style="left:922.5px;top:113.74px;" width="9" height="9" viewBox="0 0 9 9"><path d="M1.2 2H4.2C5.6 2 5.6 4 4.2 4.4C3 4.8 3 6.6 4.4 6.6H7.4M6 5.2L7.6 6.6L6 8" stroke="#c8c8c8" stroke-width="0.8" fill="none"/></svg>
<svg style="left:932.6px;top:113.74px;" width="10" height="9" viewBox="0 0 10 9"><circle cx="2.9" cy="2.7" r="1.3" fill="none" stroke="#27b58c" stroke-width="0.8"/><circle cx="6" cy="2.4" r="1.7" fill="none" stroke="#27b58c" stroke-width="0.8"/><rect x="1.4" y="4.4" width="5.6" height="3.4" rx="0.7" fill="none" stroke="#27b58c" stroke-width="0.8"/><path d="M7.2 5.6L9.2 4.6V7.8L7.2 6.8" fill="none" stroke="#27b58c" stroke-width="0.8"/></svg>
<svg style="left:997.9px;top:113.74px;" width="9" height="9" viewBox="0 0 9 9"><path d="M0.8 4.5C2 2.6 3.3 2 4.5 2C5.7 2 7 2.6 8.2 4.5C7 6.4 5.7 7 4.5 7C3.3 7 2 6.4 0.8 4.5Z" fill="#e6e6e6"/><circle cx="4.5" cy="4.5" r="1.5" fill="#282828"/><circle cx="4.5" cy="4.5" r="0.7" fill="#e6e6e6"/></svg>
<svg style="left:1008.3px;top:113.74px;" width="9" height="9" viewBox="0 0 9 9"><path d="M1 2.8H2.8L3.4 1.8H5.6L6.2 2.8H8V7.4H1Z" fill="#e6e6e6"/><circle cx="4.5" cy="5" r="1.5" fill="#282828"/><circle cx="4.5" cy="5" r="0.6" fill="#e6e6e6"/></svg>
<svg style="left:855.7px;top:125.42000000000002px;" width="6" height="7" viewBox="0 0 6 7"><path d="M1.8 1L4.3 3.5L1.8 6" stroke="#c0c0c0" stroke-width="0.8" fill="none"/></svg>
<svg style="left:864px;top:124.42000000000002px;" width="10" height="9" viewBox="0 0 10 9"><circle cx="2.8" cy="2.7" r="1.5" fill="#e08a3c"/><circle cx="6" cy="2.4" r="1.9" fill="#e08a3c"/><circle cx="2.8" cy="2.7" r="0.55" fill="#282828"/><circle cx="6" cy="2.4" r="0.7" fill="#282828"/><rect x="1.4" y="4.2" width="5.8" height="3.6" rx="0.6" fill="#e08a3c"/><path d="M7.2 5.4L9.2 4.4V7.8L7.2 6.8Z" fill="#e08a3c"/><rect x="7.6" y="7" width="1.6" height="1" fill="#e08a3c"/></svg>
<span class="t" style="top:124.92px;line-height:10px;font-size:6.4px;color:#f4f4f4;letter-spacing:-0.117px;left:876.9px;">Camera.003</span>
<svg style="left:922.5px;top:124.42000000000002px;" width="9" height="9" viewBox="0 0 9 9"><path d="M1.2 2H4.2C5.6 2 5.6 4 4.2 4.4C3 4.8 3 6.6 4.4 6.6H7.4M6 5.2L7.6 6.6L6 8" stroke="#c8c8c8" stroke-width="0.8" fill="none"/></svg>
<svg style="left:932.6px;top:124.42000000000002px;" width="10" height="9" viewBox="0 0 10 9"><circle cx="2.9" cy="2.7" r="1.3" fill="none" stroke="#27b58c" stroke-width="0.8"/><circle cx="6" cy="2.4" r="1.7" fill="none" stroke="#27b58c" stroke-width="0.8"/><rect x="1.4" y="4.4" width="5.6" height="3.4" rx="0.7" fill="none" stroke="#27b58c" stroke-width="0.8"/><path d="M7.2 5.6L9.2 4.6V7.8L7.2 6.8" fill="none" stroke="#27b58c" stroke-width="0.8"/></svg>
<svg style="left:997.9px;top:124.42000000000002px;" width="9" height="9" viewBox="0 0 9 9"><path d="M0.8 4.5C2 2.6 3.3 2 4.5 2C5.7 2 7 2.6 8.2 4.5C7 6.4 5.7 7 4.5 7C3.3 7 2 6.4 0.8 4.5Z" fill="#e6e6e6"/><circle cx="4.5" cy="4.5" r="1.5" fill="#282828"/><circle cx="4.5" cy="4.5" r="0.7" fill="#e6e6e6"/></svg>
<svg style="left:1008.3px;top:124.42000000000002px;" width="9" height="9" viewBox="0 0 9 9"><path d="M1 2.8H2.8L3.4 1.8H5.6L6.2 2.8H8V7.4H1Z" fill="#e6e6e6"/><circle cx="4.5" cy="5" r="1.5" fill="#282828"/><circle cx="4.5" cy="5" r="0.6" fill="#e6e6e6"/></svg>
<svg style="left:855.7px;top:136.1px;" width="6" height="7" viewBox="0 0 6 7"><path d="M1.8 1L4.3 3.5L1.8 6" stroke="#c0c0c0" stroke-width="0.8" fill="none"/></svg>
<svg style="left:864px;top:135.1px;" width="10" height="9" viewBox="0 0 10 9"><circle cx="2.8" cy="2.7" r="1.5" fill="#e08a3c"/><circle cx="6" cy="2.4" r="1.9" fill="#e08a3c"/><circle cx="2.8" cy="2.7" r="0.55" fill="#282828"/><circle cx="6" cy="2.4" r="0.7" fill="#282828"/><rect x="1.4" y="4.2" width="5.8" height="3.6" rx="0.6" fill="#e08a3c"/><path d="M7.2 5.4L9.2 4.4V7.8L7.2 6.8Z" fill="#e08a3c"/><rect x="7.6" y="7" width="1.6" height="1" fill="#e08a3c"/></svg>
<span class="t" style="top:135.60px;line-height:10px;font-size:6.4px;color:#f4f4f4;letter-spacing:-0.117px;left:876.9px;">Camera.004</span>
<svg style="left:922.5px;top:135.1px;" width="9" height="9" viewBox="0 0 9 9"><path d="M1.2 2H4.2C5.6 2 5.6 4 4.2 4.4C3 4.8 3 6.6 4.4 6.6H7.4M6 5.2L7.6 6.6L6 8" stroke="#c8c8c8" stroke-width="0.8" fill="none"/></svg>
<svg style="left:932.6px;top:135.1px;" width="10" height="9" viewBox="0 0 10 9"><circle cx="2.9" cy="2.7" r="1.3" fill="none" stroke="#27b58c" stroke-width="0.8"/><circle cx="6" cy="2.4" r="1.7" fill="none" stroke="#27b58c" stroke-width="0.8"/><rect x="1.4" y="4.4" width="5.6" height="3.4" rx="0.7" fill="none" stroke="#27b58c" stroke-width="0.8"/><path d="M7.2 5.6L9.2 4.6V7.8L7.2 6.8" fill="none" stroke="#27b58c" stroke-width="0.8"/></svg>
<svg style="left:997.9px;top:135.1px;" width="9" height="9" viewBox="0 0 9 9"><path d="M0.8 4.5C2 2.6 3.3 2 4.5 2C5.7 2 7 2.6 8.2 4.5C7 6.4 5.7 7 4.5 7C3.3 7 2 6.4 0.8 4.5Z" fill="#e6e6e6"/><circle cx="4.5" cy="4.5" r="1.5" fill="#282828"/><circle cx="4.5" cy="4.5" r="0.7" fill="#e6e6e6"/></svg>
<svg style="left:1008.3px;top:135.1px;" width="9" height="9" viewBox="0 0 9 9"><path d="M1 2.8H2.8L3.4 1.8H5.6L6.2 2.8H8V7.4H1Z" fill="#e6e6e6"/><circle cx="4.5" cy="5" r="1.5" fill="#282828"/><circle cx="4.5" cy="5" r="0.6" fill="#e6e6e6"/></svg>
<svg style="left:855.7px;top:146.77999999999997px;" width="6" height="7" viewBox="0 0 6 7"><path d="M1.8 1L4.3 3.5L1.8 6" stroke="#c0c0c0" stroke-width="0.8" fill="none"/></svg>
<svg style="left:864px;top:145.77999999999997px;" width="10" height="9" viewBox="0 0 10 9"><circle cx="2.8" cy="2.7" r="1.5" fill="#e08a3c"/><circle cx="6" cy="2.4" r="1.9" fill="#e08a3c"/><circle cx="2.8" cy="2.7" r="0.55" fill="#282828"/><circle cx="6" cy="2.4" r="0.7" fill="#282828"/><rect x="1.4" y="4.2" width="5.8" height="3.6" rx="0.6" fill="#e08a3c"/><path d="M7.2 5.4L9.2 4.4V7.8L7.2 6.8Z" fill="#e08a3c"/><rect x="7.6" y="7" width="1.6" height="1" fill="#e08a3c"/></svg>
<span class="t" style="top:146.28px;line-height:10px;font-size:6.4px;color:#f4f4f4;letter-spacing:-0.117px;left:876.9px;">Camera.005</span>
<svg style="left:922.5px;top:145.77999999999997px;" width="9" height="9" viewBox="0 0 9 9"><path d="M1.2 2H4.2C5.6 2 5.6 4 4.2 4.4C3 4.8 3 6.6 4.4 6.6H7.4M6 5.2L7.6 6.6L6 8" stroke="#c8c8c8" stroke-width="0.8" fill="none"/></svg>
<svg style="left:932.6px;top:145.77999999999997px;" width="10" height="9" viewBox="0 0 10 9"><circle cx="2.9" cy="2.7" r="1.3" fill="none" stroke="#27b58c" stroke-width="0.8"/><circle cx="6" cy="2.4" r="1.7" fill="none" stroke="#27b58c" stroke-width="0.8"/><rect x="1.4" y="4.4" width="5.6" height="3.4" rx="0.7" fill="none" stroke="#27b58c" stroke-width="0.8"/><path d="M7.2 5.6L9.2 4.6V7.8L7.2 6.8" fill="none" stroke="#27b58c" stroke-width="0.8"/></svg>
<svg style="left:997.9px;top:145.77999999999997px;" width="9" height="9" viewBox="0 0 9 9"><path d="M0.8 4.5C2 2.6 3.3 2 4.5 2C5.7 2 7 2.6 8.2 4.5C7 6.4 5.7 7 4.5 7C3.3 7 2 6.4 0.8 4.5Z" fill="#e6e6e6"/><circle cx="4.5" cy="4.5" r="1.5" fill="#282828"/><circle cx="4.5" cy="4.5" r="0.7" fill="#e6e6e6"/></svg>
<svg style="left:1008.3px;top:145.77999999999997px;" width="9" height="9" viewBox="0 0 9 9"><path d="M1 2.8H2.8L3.4 1.8H5.6L6.2 2.8H8V7.4H1Z" fill="#e6e6e6"/><circle cx="4.5" cy="5" r="1.5" fill="#282828"/><circle cx="4.5" cy="5" r="0.6" fill="#e6e6e6"/></svg>
<svg style="left:855.7px;top:157.45999999999998px;" width="6" height="7" viewBox="0 0 6 7"><path d="M1.8 1L4.3 3.5L1.8 6" stroke="#6e6e6e" stroke-width="0.8" fill="none"/></svg>
<svg style="left:864.5px;top:156.45999999999998px;" width="9" height="9" viewBox="0 0 9 9"><path d="M3.4 1.2L4.4 4.6L1.2 7.2M4.4 4.6L8 6" stroke="#b9773a" stroke-width="1.1" fill="none" stroke-linecap="round" stroke-linejoin="round"/></svg>
<span class="t" style="top:156.96px;line-height:10px;font-size:6.4px;color:#8a8a8a;letter-spacing:-0.078px;left:876.9px;">Circle.001</span>
<svg style="left:917.1px;top:156.45999999999998px;" width="9" height="9" viewBox="0 0 9 9"><path d="M1.2 1.6H7.8L4.5 7.8Z" stroke="#e08a3c" stroke-width="1.1" fill="none" stroke-linejoin="round"/></svg>
<svg style="left:997.9px;top:156.45999999999998px;" width="9" height="9" viewBox="0 0 9 9"><path d="M1 4.2C2.6 6.6 6.4 6.6 8 4.2" stroke="#bdbdbd" stroke-width="0.8" fill="none"/></svg>
<svg style="left:1008.3px;top:156.45999999999998px;" width="9" height="9" viewBox="0 0 9 9"><path d="M1 2.8H2.8L3.4 1.8H5.6L6.2 2.8H8V7.4H1Z" fill="#e6e6e6"/><circle cx="4.5" cy="5" r="1.5" fill="#282828"/><circle cx="4.5" cy="5" r="0.6" fill="#e6e6e6"/></svg>
<svg style="left:855.7px;top:168.14px;" width="6" height="7" viewBox="0 0 6 7"><path d="M1.8 1L4.3 3.5L1.8 6" stroke="#6e6e6e" stroke-width="0.8" fill="none"/></svg>
<svg style="left:864.5px;top:167.14px;" width="9" height="9" viewBox="0 0 9 9"><path d="M3.4 1.2L4.4 4.6L1.2 7.2M4.4 4.6L8 6" stroke="#b9773a" stroke-width="1.1" fill="none" stroke-linecap="round" stroke-linejoin="round"/></svg>
<span class="t" style="top:167.64px;line-height:10px;font-size:6.4px;color:#8a8a8a;letter-spacing:-0.03px;left:876.9px;">Mbappe textura</span>
<svg style="left:932.8px;top:167.14px;" width="9" height="9" viewBox="0 0 9 9"><path d="M1.2 2H4.2C5.6 2 5.6 4 4.2 4.4C3 4.8 3 6.6 4.4 6.6H7.4M6 5.2L7.6 6.6L6 8" stroke="#7e7e7e" stroke-width="0.8" fill="none"/></svg>
<svg style="left:942.3px;top:167.14px;" width="9" height="9" viewBox="0 0 9 9"><path d="M3.4 1.2L4.4 4.6L1.2 7.2M4.4 4.6L8 6" stroke="#e08a3c" stroke-width="1.1" fill="none" stroke-linecap="round" stroke-linejoin="round"/></svg>
<span class="t" style="top:169.94px;line-height:10px;font-size:4.6px;color:#e08a3c;left:950.0px;">3</span>
<svg style="left:954.2px;top:167.14px;" width="9" height="9" viewBox="0 0 9 9"><path d="M1.2 1.6H7.8L4.5 7.8Z" stroke="#e08a3c" stroke-width="1.1" fill="none" stroke-linejoin="round"/></svg>
<span class="t" style="top:169.94px;line-height:10px;font-size:4.6px;color:#e08a3c;left:961.9000000000001px;">5</span>
<svg style="left:997.9px;top:167.14px;" width="9" height="9" viewBox="0 0 9 9"><path d="M1 4.2C2.6 6.6 6.4 6.6 8 4.2" stroke="#bdbdbd" stroke-width="0.8" fill="none"/></svg>
<svg style="left:1008.3px;top:167.14px;" width="9" height="9" viewBox="0 0 9 9"><path d="M1 2.8H2.8L3.4 1.8H5.6L6.2 2.8H8V7.4H1Z" fill="#e6e6e6"/><circle cx="4.5" cy="5" r="1.5" fill="#282828"/><circle cx="4.5" cy="5" r="0.6" fill="#e6e6e6"/></svg>
<svg style="left:855.7px;top:178.82px;" width="6" height="7" viewBox="0 0 6 7"><path d="M1.8 1L4.3 3.5L1.8 6" stroke="#6e6e6e" stroke-width="0.8" fill="none"/></svg>
<svg style="left:864.5px;top:177.82px;" width="9" height="9" viewBox="0 0 9 9"><path d="M3.4 1.2L4.4 4.6L1.2 7.2M4.4 4.6L8 6" stroke="#b9773a" stroke-width="1.1" fill="none" stroke-linecap="round" stroke-linejoin="round"/></svg>
<span class="t" style="top:178.32px;line-height:10px;font-size:6.4px;color:#8a8a8a;letter-spacing:-0.049px;left:876.9px;">Neymar textura</span>
<svg style="left:931.0px;top:177.82px;" width="9" height="9" viewBox="0 0 9 9"><path d="M3.4 1.2L4.4 4.6L1.2 7.2M4.4 4.6L8 6" stroke="#e08a3c" stroke-width="1.1" fill="none" stroke-linecap="round" stroke-linejoin="round"/></svg>
<span class="t" style="top:180.62px;line-height:10px;font-size:4.6px;color:#e08a3c;left:938.7px;">3</span>
<svg style="left:942.3px;top:177.82px;" width="9" height="9" viewBox="0 0 9 9"><path d="M1.2 1.6H7.8L4.5 7.8Z" stroke="#e08a3c" stroke-width="1.1" fill="none" stroke-linejoin="round"/></svg>
<span class="t" style="top:180.62px;line-height:10px;font-size:4.6px;color:#e08a3c;left:950.0px;">4</span>
<svg style="left:997.9px;top:177.82px;" width="9" height="9" viewBox="0 0 9 9"><path d="M1 4.2C2.6 6.6 6.4 6.6 8 4.2" stroke="#bdbdbd" stroke-width="0.8" fill="none"/></svg>
<svg style="left:1008.3px;top:177.82px;" width="9" height="9" viewBox="0 0 9 9"><path d="M1 2.8H2.8L3.4 1.8H5.6L6.2 2.8H8V7.4H1Z" fill="#e6e6e6"/><circle cx="4.5" cy="5" r="1.5" fill="#282828"/><circle cx="4.5" cy="5" r="0.6" fill="#e6e6e6"/></svg>
<svg style="left:855.7px;top:189.5px;" width="6" height="7" viewBox="0 0 6 7"><path d="M1.8 1L4.3 3.5L1.8 6" stroke="#6e6e6e" stroke-width="0.8" fill="none"/></svg>
<svg style="left:864.5px;top:188.5px;" width="9" height="9" viewBox="0 0 9 9"><path d="M3.4 1.2L4.4 4.6L1.2 7.2M4.4 4.6L8 6" stroke="#b9773a" stroke-width="1.1" fill="none" stroke-linecap="round" stroke-linejoin="round"/></svg>
<span class="t" style="top:189.00px;line-height:10px;font-size:6.4px;color:#8a8a8a;letter-spacing:0.015px;left:876.9px;">Portero textura</span>
<svg style="left:930.5px;top:188.5px;" width="9" height="9" viewBox="0 0 9 9"><path d="M1.2 2H4.2C5.6 2 5.6 4 4.2 4.4C3 4.8 3 6.6 4.4 6.6H7.4M6 5.2L7.6 6.6L6 8" stroke="#7e7e7e" stroke-width="0.8" fill="none"/></svg>
<svg style="left:940.8px;top:188.5px;" width="9" height="9" viewBox="0 0 9 9"><path d="M3.4 1.2L4.4 4.6L1.2 7.2M4.4 4.6L8 6" stroke="#e08a3c" stroke-width="1.1" fill="none" stroke-linecap="round" stroke-linejoin="round"/></svg>
<span class="t" style="top:191.30px;line-height:10px;font-size:4.6px;color:#e08a3c;left:948.5px;">3</span>
<svg style="left:952.1px;top:188.5px;" width="9" height="9" viewBox="0 0 9 9"><path d="M1.2 1.6H7.8L4.5 7.8Z" stroke="#e08a3c" stroke-width="1.1" fill="none" stroke-linejoin="round"/></svg>
<svg style="left:997.9px;top:188.5px;" width="9" height="9" viewBox="0 0 9 9"><path d="M1 4.2C2.6 6.6 6.4 6.6 8 4.2" stroke="#bdbdbd" stroke-width="0.8" fill="none"/></svg>
<svg style="left:1008.3px;top:188.5px;" width="9" height="9" viewBox="0 0 9 9"><path d="M1 2.8H2.8L3.4 1.8H5.6L6.2 2.8H8V7.4H1Z" fill="#e6e6e6"/><circle cx="4.5" cy="5" r="1.5" fill="#282828"/><circle cx="4.5" cy="5" r="0.6" fill="#e6e6e6"/></svg>
<svg style="left:855.7px;top:200.18px;" width="6" height="7" viewBox="0 0 6 7"><path d="M1.8 1L4.3 3.5L1.8 6" stroke="#6e6e6e" stroke-width="0.8" fill="none"/></svg>
<svg style="left:864.5px;top:199.18px;" width="9" height="9" viewBox="0 0 9 9"><path d="M3.4 1.2L4.4 4.6L1.2 7.2M4.4 4.6L8 6" stroke="#b9773a" stroke-width="1.1" fill="none" stroke-linecap="round" stroke-linejoin="round"/></svg>
<span class="t" style="top:199.68px;line-height:10px;font-size:6.4px;color:#8a8a8a;letter-spacing:-0.076px;left:876.9px;">Slaion 1</span>
<svg style="left:911.8px;top:199.18px;" width="9" height="9" viewBox="0 0 9 9"><path d="M1.2 1.6H7.8L4.5 7.8Z" stroke="#e08a3c" stroke-width="1.1" fill="none" stroke-linejoin="round"/></svg>
<svg style="left:997.9px;top:199.18px;" width="9" height="9" viewBox="0 0 9 9"><path d="M1 4.2C2.6 6.6 6.4 6.6 8 4.2" stroke="#bdbdbd" stroke-width="0.8" fill="none"/></svg>
<svg style="left:1008.3px;top:199.18px;" width="9" height="9" viewBox="0 0 9 9"><path d="M1 2.8H2.8L3.4 1.8H5.6L6.2 2.8H8V7.4H1Z" fill="#e6e6e6"/><circle cx="4.5" cy="5" r="1.5" fill="#282828"/><circle cx="4.5" cy="5" r="0.6" fill="#e6e6e6"/></svg>
<div style="left:0px;top:281px;width:841px;height:14px;background:#303030;border-radius:3px 3px 0 0;"></div>
<div style="left:5.7px;top:283px;width:15px;height:9.6px;background:#282828;border-radius:2px;"></div>
<svg style="left:6px;top:283.3px;" width="10" height="9" viewBox="0 0 10 9"><circle cx="4.6" cy="4.5" r="3.3" fill="#efefef"/><path d="M4.6 4.7L5.8 2.4L4.9 5.6Z" stroke="#303030" stroke-width="0.9" fill="none"/></svg>
<svg style="left:14.5px;top:284.8px;" width="6" height="6" viewBox="0 0 6 6"><path d="M1.3 2.2L3 3.9L4.7 2.2" stroke="#d8d8d8" stroke-width="0.7" fill="none"/></svg>
<span class="t" style="top:283.80px;line-height:10px;font-size:6.4px;color:#e4e4e4;letter-spacing:-0.062px;left:27.5px;">View</span>
<span class="t" style="top:283.80px;line-height:10px;font-size:6.4px;color:#e4e4e4;letter-spacing:-0.065px;left:49.6px;">Marker</span>
<div style="left:76.3px;top:283px;width:38.5px;height:9.6px;background:#282828;border-radius:2px;"></div>
<span class="t" style="top:283.80px;line-height:10px;font-size:6.4px;color:#e4e4e4;letter-spacing:-0.305px;left:79.6px;">Playback</span>
<svg style="left:106.5px;top:284.8px;" width="6" height="6" viewBox="0 0 6 6"><path d="M1.3 2.2L3 3.9L4.7 2.2" stroke="#d8d8d8" stroke-width="0.7" fill="none"/></svg>
<div style="left:341.7px;top:283px;width:9.8px;height:9.6px;background:#4772b3;border-radius:2px 0 0 2px;"></div>
<svg style="left:341.7px;top:283px;" width="10" height="10" viewBox="0 0 10 10"><circle cx="4.9" cy="4.8" r="2.3" fill="#e0455a"/><circle cx="4.9" cy="4.8" r="2.3" fill="none" stroke="#f0d0d4" stroke-width="0.5"/></svg>
<div style="left:352px;top:283px;width:9.2px;height:9.6px;background:#282828;border-radius:0 2px 2px 0;"></div>
<svg style="left:353.6px;top:284.8px;" width="6" height="6" viewBox="0 0 6 6"><path d="M1.3 2.2L3 3.9L4.7 2.2" stroke="#d8d8d8" stroke-width="0.7" fill="none"/></svg>
<div style="left:366.2px;top:283px;width:63px;height:9.6px;background:#545454;border-radius:2px;"></div>
<div style="left:376.45px;top:283px;width:0.5px;height:9.6px;background:#3a3a3a;"></div>
<div style="left:386.95px;top:283px;width:0.5px;height:9.6px;background:#3a3a3a;"></div>
<div style="left:397.45px;top:283px;width:0.5px;height:9.6px;background:#3a3a3a;"></div>
<div style="left:407.95px;top:283px;width:0.5px;height:9.6px;background:#3a3a3a;"></div>
<div style="left:418.45px;top:283px;width:0.5px;height:9.6px;background:#3a3a3a;"></div>
<svg style="left:366.2px;top:283px;" width="63" height="10" viewBox="0 0 63 10"><g fill="#f0f0f0"><rect x="3" y="2.6" width="1" height="4.6"/><path d="M8 2.6V7.2L4.4 4.9Z"/><g transform="translate(10.5,0)"><path d="M4.4 2.8V7L1.4 4.9Z"/><path d="M5.3 3L7 4.9L5.3 6.8L3.6 4.9Z" transform="translate(0.4,0)"/><path d="M6.4 2.8V7L9.4 4.9Z" transform="translate(-0.2,0)" opacity="0"/></g><g transform="translate(21,0)"><path d="M7.6 2.2V7.6L2.8 4.9Z"/></g><g transform="translate(31.5,0)"><path d="M3 2.2V7.6L7.8 4.9Z"/></g><g transform="translate(42,0)"><path d="M1.8 2.8V7L4.8 4.9Z"/><path d="M6.6 3L8.3 4.9L6.6 6.8L4.9 4.9Z"/></g><g transform="translate(52.5,0)"><path d="M2.6 2.6V7.2L6.2 4.9Z"/><rect x="6.6" y="2.6" width="1" height="4.6"/></g></g></svg>
<div style="left:432.8px;top:283px;width:21px;height:9.6px;background:#545454;border-radius:2px 0 0 2px;"></div>
<div style="left:443.1px;top:283px;width:0.5px;height:9.6px;background:#3a3a3a;"></div>
<svg style="left:432.8px;top:283px;" width="21" height="10" viewBox="0 0 21 10"><g fill="#f0f0f0"><path d="M5.6 2.8V7L2.6 4.9Z"/><rect x="6.2" y="2.8" width="1" height="4.2"/><rect x="13.4" y="2.8" width="1" height="4.2"/><path d="M15 2.8V7L18 4.9Z"/></g></svg>
<div style="left:454.2px;top:283px;width:9.6px;height:9.6px;background:#282828;border-radius:0 2px 2px 0;"></div>
<svg style="left:456px;top:284.8px;" width="6" height="6" viewBox="0 0 6 6"><path d="M1.3 2.2L3 3.9L4.7 2.2" stroke="#d8d8d8" stroke-width="0.7" fill="none"/></svg>
<div style="left:467px;top:283px;width:10px;height:9.6px;background:#545454;border-radius:2px 0 0 2px;"></div>
<svg style="left:467px;top:283px;" width="10" height="10" viewBox="0 0 10 10"><path d="M2.6 7.4V4.6A2.4 2.4 0 0 1 7.4 4.6V7.4M2.6 6H4V4.6A1 1 0 0 1 6 4.6V6H7.4" stroke="#8a8a8a" stroke-width="0.7" fill="none"/></svg>
<div style="left:477.4px;top:283px;width:9.6px;height:9.6px;background:#282828;border-radius:0 2px 2px 0;"></div>
<svg style="left:479.2px;top:284.8px;" width="6" height="6" viewBox="0 0 6 6"><path d="M1.3 2.2L3 3.9L4.7 2.2" stroke="#d8d8d8" stroke-width="0.7" fill="none"/></svg>
<div style="left:660px;top:283px;width:39px;height:9.6px;background:#545454;border-radius:2px;"></div>
<span class="t" style="top:283.80px;line-height:10px;font-size:6.4px;color:#f0f0f0;letter-spacing:0.109px;left:579.45px;width:200px;text-align:center;">677</span>
<svg style="left:703px;top:283px;" width="10" height="10" viewBox="0 0 10 10"><circle cx="4.8" cy="5.2" r="2.8" stroke="#e0e0e0" stroke-width="0.8" fill="none"/><path d="M4.8 3.6V5.2H6M3.8 1.6H5.8" stroke="#e0e0e0" stroke-width="0.7" fill="none"/></svg>
<div style="left:713.7px;top:283px;width:42.6px;height:9.6px;background:#545454;border-radius:2px 0 0 2px;"></div>
<span class="t" style="top:283.80px;line-height:10px;font-size:6.4px;color:#e8e8e8;left:720.7px;">Start</span>
<span class="t" style="top:283.80px;line-height:10px;font-size:6.4px;color:#e8e8e8;right:270.60px;">1</span>
<div style="left:757px;top:283px;width:48.8px;height:9.6px;background:#545454;border-radius:0 2px 2px 0;"></div>
<span class="t" style="top:283.80px;line-height:10px;font-size:6.4px;color:#e8e8e8;letter-spacing:-0.292px;left:768.6px;">End</span>
<span class="t" style="top:283.80px;line-height:10px;font-size:6.4px;color:#e8e8e8;letter-spacing:0.195px;right:224.20px;">1000</span>
<div style="left:814.6px;top:283px;width:11.4px;height:9.6px;background:#4772b3;border-radius:2px 0 0 2px;"></div>
<svg style="left:815.2px;top:283.3px;" width="10" height="9" viewBox="0 0 10 9"><circle cx="4.2" cy="5" r="2.7" fill="none" stroke="#f2f2f2" stroke-width="0.8"/><circle cx="5.9" cy="3.9" r="2.7" fill="#f2f2f2"/></svg>
<div style="left:826.4px;top:283px;width:9.8px;height:9.6px;background:#282828;border-radius:0 2px 2px 0;"></div>
<svg style="left:828.2px;top:284.8px;" width="6" height="6" viewBox="0 0 6 6"><path d="M1.3 2.2L3 3.9L4.7 2.2" stroke="#d8d8d8" stroke-width="0.7" fill="none"/></svg>
<div style="left:0px;top:295px;width:107px;height:98.6px;background:#1d1d1d;border-radius:0 0 0 3px;"></div>
<div style="left:2.5px;top:295.8px;width:91px;height:9.8px;background:#161616;border-radius:2px 0 0 2px;"></div>
<svg style="left:3.5px;top:296.2px;" width="9" height="9" viewBox="0 0 9 9"><circle cx="3.6" cy="3.6" r="2.3" stroke="#e0e0e0" stroke-width="0.8" fill="none"/><path d="M5.2 5.4L7.6 7.8" stroke="#e0e0e0" stroke-width="0.9"/></svg>
<span class="t" style="top:296.80px;line-height:10px;font-size:6.4px;color:#5a5a5a;letter-spacing:-0.208px;left:15px;">Search</span>
<div style="left:93.7px;top:295.8px;width:11.8px;height:9.8px;background:#4772b3;border-radius:0 2px 2px 0;"></div>
<svg style="left:93.7px;top:295.8px;" width="12" height="10" viewBox="0 0 12 10"><path d="M2.6 4.9H9.2M4.2 3.3L2.6 4.9L4.2 6.5M7.6 3.3L9.2 4.9L7.6 6.5" stroke="#f2f2f2" stroke-width="0.9" fill="none"/></svg>
<div style="left:2px;top:308px;width:105px;height:9px;background:#363636;border-radius:2px 0 0 2px;"></div>
<svg style="left:1.5999999999999996px;top:308.9px;" width="6" height="7" viewBox="0 0 6 7"><path d="M1.8 1L4.3 3.5L1.8 6" stroke="#c8c8c8" stroke-width="0.8" fill="none"/></svg>
<span class="t" style="top:308.40px;line-height:10px;font-size:6.4px;color:#e4e4e4;letter-spacing:-0.049px;left:10.1px;">Summary</span>
<div style="left:107px;top:295px;width:734px;height:11.5px;background:#1c1c1c;"></div>
<div style="left:107px;top:306.5px;width:734px;height:69.7px;background:#1f1f1f;"></div>
<div style="left:120.0514px;top:306.5px;width:650.7485999999999px;height:69.7px;background:#2f2f2f;"></div>
<div style="left:119.10000000000001px;top:306.5px;width:0.7px;height:69.7px;background:#1a1a1a;"></div>
<div style="left:138.6px;top:306.5px;width:0.7px;height:69.7px;background:#262626;"></div>
<div style="left:158.2px;top:306.5px;width:0.7px;height:69.7px;background:#262626;"></div>
<div style="left:177.7px;top:306.5px;width:0.7px;height:69.7px;background:#262626;"></div>
<div style="left:197.29999999999998px;top:306.5px;width:0.7px;height:69.7px;background:#262626;"></div>
<div style="left:216.79999999999998px;top:306.5px;width:0.7px;height:69.7px;background:#262626;"></div>
<div style="left:236.39999999999998px;top:306.5px;width:0.7px;height:69.7px;background:#262626;"></div>
<div style="left:255.89999999999998px;top:306.5px;width:0.7px;height:69.7px;background:#262626;"></div>
<div style="left:275.4px;top:306.5px;width:0.7px;height:69.7px;background:#262626;"></div>
<div style="left:295.0px;top:306.5px;width:0.7px;height:69.7px;background:#262626;"></div>
<div style="left:314.5px;top:306.5px;width:0.7px;height:69.7px;background:#262626;"></div>
<div style="left:334.09999999999997px;top:306.5px;width:0.7px;height:69.7px;background:#262626;"></div>
<div style="left:353.59999999999997px;top:306.5px;width:0.7px;height:69.7px;background:#262626;"></div>
<div style="left:373.09999999999997px;top:306.5px;width:0.7px;height:69.7px;background:#262626;"></div>
<div style="left:392.7px;top:306.5px;width:0.7px;height:69.7px;background:#262626;"></div>
<div style="left:412.2px;top:306.5px;width:0.7px;height:69.7px;background:#262626;"></div>
<div style="left:431.8px;top:306.5px;width:0.7px;height:69.7px;background:#262626;"></div>
<div style="left:451.3px;top:306.5px;width:0.7px;height:69.7px;background:#262626;"></div>
<div style="left:470.9px;top:306.5px;width:0.7px;height:69.7px;background:#262626;"></div>
<div style="left:490.4px;top:306.5px;width:0.7px;height:69.7px;background:#262626;"></div>
<div style="left:509.9px;top:306.5px;width:0.7px;height:69.7px;background:#262626;"></div>
<div style="left:529.5px;top:306.5px;width:0.7px;height:69.7px;background:#262626;"></div>
<div style="left:549.0px;top:306.5px;width:0.7px;height:69.7px;background:#262626;"></div>
<div style="left:568.6px;top:306.5px;width:0.7px;height:69.7px;background:#262626;"></div>
<div style="left:588.1px;top:306.5px;width:0.7px;height:69.7px;background:#262626;"></div>
<div style="left:607.7px;top:306.5px;width:0.7px;height:69.7px;background:#262626;"></div>
<div style="left:627.2px;top:306.5px;width:0.7px;height:69.7px;background:#262626;"></div>
<div style="left:646.7px;top:306.5px;width:0.7px;height:69.7px;background:#262626;"></div>
<div style="left:666.3000000000001px;top:306.5px;width:0.7px;height:69.7px;background:#262626;"></div>
<div style="left:685.8000000000001px;top:306.5px;width:0.7px;height:69.7px;background:#262626;"></div>
<div style="left:705.4000000000001px;top:306.5px;width:0.7px;height:69.7px;background:#262626;"></div>
<div style="left:724.9000000000001px;top:306.5px;width:0.7px;height:69.7px;background:#262626;"></div>
<div style="left:744.4000000000001px;top:306.5px;width:0.7px;height:69.7px;background:#262626;"></div>
<div style="left:764.0px;top:306.5px;width:0.7px;height:69.7px;background:#262626;"></div>
<div style="left:783.5px;top:306.5px;width:0.7px;height:69.7px;background:#1a1a1a;"></div>
<div style="left:803.1px;top:306.5px;width:0.7px;height:69.7px;background:#1a1a1a;"></div>
<div style="left:822.6px;top:306.5px;width:0.7px;height:69.7px;background:#1a1a1a;"></div>
<span class="t" style="top:296.80px;line-height:10px;font-size:6.2px;color:#9c9c9c;left:19.70px;width:200px;text-align:center;">0</span>
<span class="t" style="top:296.80px;line-height:10px;font-size:6.2px;color:#9c9c9c;left:58.78px;width:200px;text-align:center;">60</span>
<span class="t" style="top:296.80px;line-height:10px;font-size:6.2px;color:#9c9c9c;left:97.87px;width:200px;text-align:center;">120</span>
<span class="t" style="top:296.80px;line-height:10px;font-size:6.2px;color:#9c9c9c;left:136.95px;width:200px;text-align:center;">180</span>
<span class="t" style="top:296.80px;line-height:10px;font-size:6.2px;color:#9c9c9c;left:176.04px;width:200px;text-align:center;">240</span>
<span class="t" style="top:296.80px;line-height:10px;font-size:6.2px;color:#9c9c9c;left:215.12px;width:200px;text-align:center;">300</span>
<span class="t" style="top:296.80px;line-height:10px;font-size:6.2px;color:#9c9c9c;left:254.20px;width:200px;text-align:center;">360</span>
<span class="t" style="top:296.80px;line-height:10px;font-size:6.2px;color:#9c9c9c;left:293.29px;width:200px;text-align:center;">420</span>
<span class="t" style="top:296.80px;line-height:10px;font-size:6.2px;color:#9c9c9c;left:332.37px;width:200px;text-align:center;">480</span>
<span class="t" style="top:296.80px;line-height:10px;font-size:6.2px;color:#9c9c9c;left:371.46px;width:200px;text-align:center;">540</span>
<span class="t" style="top:296.80px;line-height:10px;font-size:6.2px;color:#9c9c9c;left:410.54px;width:200px;text-align:center;">600</span>
<span class="t" style="top:296.80px;line-height:10px;font-size:6.2px;color:#9c9c9c;left:488.71px;width:200px;text-align:center;">720</span>
<span class="t" style="top:296.80px;line-height:10px;font-size:6.2px;color:#9c9c9c;left:527.79px;width:200px;text-align:center;">780</span>
<span class="t" style="top:296.80px;line-height:10px;font-size:6.2px;color:#9c9c9c;left:566.88px;width:200px;text-align:center;">840</span>
<span class="t" style="top:296.80px;line-height:10px;font-size:6.2px;color:#9c9c9c;left:605.96px;width:200px;text-align:center;">900</span>
<span class="t" style="top:296.80px;line-height:10px;font-size:6.2px;color:#9c9c9c;left:645.04px;width:200px;text-align:center;">960</span>
<span class="t" style="top:296.80px;line-height:10px;font-size:6.2px;color:#9c9c9c;left:684.13px;width:200px;text-align:center;">1020</span>
<span class="t" style="top:296.80px;line-height:10px;font-size:6.2px;color:#9c9c9c;left:723.21px;width:200px;text-align:center;">1080</span>
<span class="t" style="top:296.80px;line-height:10px;font-size:6.2px;color:#9c9c9c;left:543.824px;">66</span>
<div style="left:107px;top:376.2px;width:734px;height:17.4px;background:#1b1b1b;border-radius:0 0 3px 0;"></div>
<div style="left:110px;top:391.3px;width:726px;height:1.4px;background:#363636;border-radius:1px;"></div>
<svg style="left:116px;top:309.4px;" width="6" height="6" viewBox="0 0 6 6"><path d="M3 0.6L5.4 3L3 5.4L0.6 3Z" fill="#f2a32c"/></svg>
<div style="left:120px;top:306.5px;width:1px;height:73.0px;background:repeating-linear-gradient(to bottom,rgba(230,230,230,0.6) 0,rgba(230,230,230,0.6) 1px,transparent 1px,transparent 2px);"></div>
<div style="left:253px;top:306.5px;width:1px;height:73.0px;background:repeating-linear-gradient(to bottom,rgba(230,230,230,0.6) 0,rgba(230,230,230,0.6) 1px,transparent 1px,transparent 2px);"></div>
<div style="left:336px;top:306.5px;width:1px;height:73.0px;background:repeating-linear-gradient(to bottom,rgba(230,230,230,0.6) 0,rgba(230,230,230,0.6) 1px,transparent 1px,transparent 2px);"></div>
<div style="left:343px;top:306.5px;width:1px;height:73.0px;background:repeating-linear-gradient(to bottom,rgba(230,230,230,0.6) 0,rgba(230,230,230,0.6) 1px,transparent 1px,transparent 2px);"></div>
<div style="left:420px;top:306.5px;width:1px;height:73.0px;background:repeating-linear-gradient(to bottom,rgba(230,230,230,0.6) 0,rgba(230,230,230,0.6) 1px,transparent 1px,transparent 2px);"></div>
<svg style="left:115.0514px;top:380.1px;" width="10" height="9" viewBox="0 0 10 9"><circle cx="3.1" cy="2.7" r="1.2" fill="none" stroke="#b4b4b4" stroke-width="0.7"/><circle cx="6.1" cy="2.5" r="1.5" fill="none" stroke="#b4b4b4" stroke-width="0.7"/><rect x="1.6" y="4.4" width="5.6" height="3.4" rx="0.7" fill="none" stroke="#b4b4b4" stroke-width="0.7"/><path d="M7.3 5.6L9.2 4.7V7.7L7.3 6.8" fill="none" stroke="#b4b4b4" stroke-width="0.7"/></svg>
<span class="t" style="top:380.60px;line-height:10px;font-size:6.3px;color:#b4b4b4;letter-spacing:-0.151px;left:124.8px;">Camera</span>
<svg style="left:248.2627px;top:380.1px;" width="10" height="9" viewBox="0 0 10 9"><circle cx="3.1" cy="2.7" r="1.2" fill="none" stroke="#b4b4b4" stroke-width="0.7"/><circle cx="6.1" cy="2.5" r="1.5" fill="none" stroke="#b4b4b4" stroke-width="0.7"/><rect x="1.6" y="4.4" width="5.6" height="3.4" rx="0.7" fill="none" stroke="#b4b4b4" stroke-width="0.7"/><path d="M7.3 5.6L9.2 4.7V7.7L7.3 6.8" fill="none" stroke="#b4b4b4" stroke-width="0.7"/></svg>
<span class="t" style="top:380.60px;line-height:10px;font-size:6.3px;color:#b4b4b4;letter-spacing:-0.116px;left:258.6px;">Camera.001</span>
<svg style="left:331.83732px;top:380.1px;" width="10" height="9" viewBox="0 0 10 9"><circle cx="3.1" cy="2.7" r="1.2" fill="none" stroke="#b4b4b4" stroke-width="0.7"/><circle cx="6.1" cy="2.5" r="1.5" fill="none" stroke="#b4b4b4" stroke-width="0.7"/><rect x="1.6" y="4.4" width="5.6" height="3.4" rx="0.7" fill="none" stroke="#b4b4b4" stroke-width="0.7"/><path d="M7.3 5.6L9.2 4.7V7.7L7.3 6.8" fill="none" stroke="#b4b4b4" stroke-width="0.7"/></svg>
<svg style="left:338.67701999999997px;top:380.1px;" width="10" height="9" viewBox="0 0 10 9"><circle cx="3.1" cy="2.7" r="1.2" fill="none" stroke="#b4b4b4" stroke-width="0.7"/><circle cx="6.1" cy="2.5" r="1.5" fill="none" stroke="#b4b4b4" stroke-width="0.7"/><rect x="1.6" y="4.4" width="5.6" height="3.4" rx="0.7" fill="none" stroke="#b4b4b4" stroke-width="0.7"/><path d="M7.3 5.6L9.2 4.7V7.7L7.3 6.8" fill="none" stroke="#b4b4b4" stroke-width="0.7"/></svg>
<span class="t" style="top:380.60px;line-height:10px;font-size:6.3px;color:#b4b4b4;letter-spacing:-0.116px;left:348.8px;">Camera.002</span>
<svg style="left:415.34680000000003px;top:380.1px;" width="10" height="9" viewBox="0 0 10 9"><circle cx="3.1" cy="2.6" r="1.5" fill="#ffffff"/><circle cx="6.2" cy="2.4" r="1.8" fill="#ffffff"/><rect x="1.6" y="4.2" width="5.8" height="3.8" rx="0.7" fill="#ffffff"/><path d="M7.4 5.4L9.4 4.4V8L7.4 7Z" fill="#ffffff"/><circle cx="4.4" cy="6.1" r="0.9" fill="#1a1a1a"/></svg>
<span class="t" style="top:377.20px;line-height:10px;font-size:6.3px;color:#ffffff;letter-spacing:-0.066px;left:425.7px;">Camera.002</span>
<div style="left:559.4977999999999px;top:300px;width:1.4px;height:93.60000000000002px;background:#4772b3;"></div>
<div style="left:552.8978px;top:296.6px;width:14.6px;height:10.399999999999977px;background:#4772b3;border-radius:2px;"></div>
<span class="t" style="top:298.00px;line-height:10px;font-size:6.4px;color:#ffffff;font-weight:700;letter-spacing:0.276px;left:460.34px;width:200px;text-align:center;">677</span>
<div style="left:0px;top:396px;width:841px;height:14.4px;background:#303030;border-radius:3px 3px 0 0;"></div>
<div style="left:5.7px;top:398.3px;width:15px;height:9.6px;background:#282828;border-radius:2px;"></div>
<svg style="left:6px;top:398.6px;" width="10" height="9" viewBox="0 0 10 9"><rect x="1.4" y="1.6" width="3" height="2" fill="#efefef"/><rect x="5" y="1.6" width="3.4" height="2" fill="#efefef"/><rect x="1.4" y="4.4" width="7" height="1.6" fill="#efefef"/><path d="M2.2 6.4V8H5.4" stroke="#efefef" stroke-width="0.7" fill="none"/><circle cx="2.2" cy="7.8" r="0.9" fill="#efefef"/></svg>
<svg style="left:14.5px;top:400px;" width="6" height="6" viewBox="0 0 6 6"><path d="M1.3 2.2L3 3.9L4.7 2.2" stroke="#d8d8d8" stroke-width="0.7" fill="none"/></svg>
<span class="t" style="top:399.00px;line-height:10px;font-size:6.4px;color:#e4e4e4;letter-spacing:-0.062px;left:27.8px;">View</span>
<span class="t" style="top:399.00px;line-height:10px;font-size:6.4px;color:#e4e4e4;letter-spacing:-0.044px;left:49.5px;">Select</span>
<span class="t" style="top:399.00px;line-height:10px;font-size:6.4px;color:#e4e4e4;letter-spacing:-0.065px;left:74.7px;">Marker</span>
<span class="t" style="top:399.00px;line-height:10px;font-size:6.4px;color:#e4e4e4;letter-spacing:0.042px;left:102px;">Add</span>
<span class="t" style="top:399.00px;line-height:10px;font-size:6.4px;color:#e4e4e4;letter-spacing:-0.15px;left:121.9px;">Track</span>
<span class="t" style="top:399.00px;line-height:10px;font-size:6.4px;color:#e4e4e4;letter-spacing:0.012px;left:145.3px;">Strip</span>
<div style="left:761px;top:398.3px;width:10.5px;height:9.6px;background:#545454;border-radius:2px 0 0 2px;"></div>
<svg style="left:761px;top:398.3px;" width="10.5" height="10" viewBox="0 0 10.5 10"><path d="M3.4 1.8L8 5L5.6 5.4L4.6 7.6Z" fill="#f2f2f2"/></svg>
<div style="left:771.7px;top:398.3px;width:10.3px;height:9.6px;background:#545454;"></div>
<svg style="left:771.7px;top:398.3px;" width="10.5" height="10" viewBox="0 0 10.5 10"><rect x="2.4" y="2.2" width="5.6" height="5.2" fill="none" stroke="#e8e8e8" stroke-width="0.7" stroke-dasharray="1.2 0.8"/><path d="M1.4 2.2V1.2H2.4M8 1.2H9V2.2M9 7.4V8.4H8M2.4 8.4H1.4V7.4" stroke="#e8e8e8" stroke-width="0.6" fill="none"/></svg>
<div style="left:782.2px;top:398.3px;width:10.6px;height:9.6px;background:#4772b3;border-radius:0 2px 2px 0;"></div>
<svg style="left:782.2px;top:398.3px;" width="10.5" height="10" viewBox="0 0 10.5 10"><rect x="1.8" y="2.2" width="7" height="5" fill="none" stroke="#f2f2f2" stroke-width="0.7" stroke-dasharray="1.2 0.8"/><rect x="3.4" y="3.8" width="3.8" height="2.8" fill="#f2f2f2"/></svg>
<div style="left:796px;top:398.3px;width:15.6px;height:9.6px;background:#282828;border-radius:2px;"></div>
<svg style="left:796.2px;top:398.6px;" width="16" height="9" viewBox="0 0 16 9"><path d="M1.8 1.6H8L5.6 4.6V7.6L4.2 6.8V4.6Z" stroke="#e8e8e8" stroke-width="0.8" fill="none"/><path d="M10.6 3.7L11.8 4.9L13 3.7" stroke="#d8d8d8" stroke-width="0.7" fill="none"/></svg>
<div style="left:815px;top:398.3px;width:11.4px;height:9.6px;background:#4772b3;border-radius:2px 0 0 2px;"></div>
<svg style="left:815.6px;top:398.6px;" width="10" height="9" viewBox="0 0 10 9"><path d="M2.6 7A2.9 2.9 0 1 1 7.6 4" stroke="#f2f2f2" stroke-width="1.5" fill="none"/><path d="M5.2 5A1 1 0 1 0 6.6 6.2" stroke="#f2f2f2" stroke-width="1" fill="none"/></svg>
<div style="left:826.6px;top:398.3px;width:9.6px;height:9.6px;background:#282828;border-radius:0 2px 2px 0;"></div>
<svg style="left:828.4px;top:400px;" width="6" height="6" viewBox="0 0 6 6"><path d="M1.3 2.2L3 3.9L4.7 2.2" stroke="#d8d8d8" stroke-width="0.7" fill="none"/></svg>
<div style="left:0px;top:410.4px;width:107px;height:114.4px;background:#1d1d1d;border-radius:0 0 0 3px;"></div>
<div style="left:2.5px;top:411.3px;width:91px;height:9.6px;background:#161616;border-radius:2px 0 0 2px;"></div>
<svg style="left:3.5px;top:411.6px;" width="9" height="9" viewBox="0 0 9 9"><circle cx="3.6" cy="3.6" r="2.3" stroke="#e0e0e0" stroke-width="0.8" fill="none"/><path d="M5.2 5.4L7.6 7.8" stroke="#e0e0e0" stroke-width="0.9"/></svg>
<span class="t" style="top:412.20px;line-height:10px;font-size:6.4px;color:#5a5a5a;letter-spacing:-0.208px;left:15px;">Search</span>
<div style="left:93.7px;top:411.3px;width:12.3px;height:9.6px;background:#545454;border-radius:0 2px 2px 0;"></div>
<svg style="left:93.9px;top:411.2px;" width="12" height="10" viewBox="0 0 12 10"><path d="M2.6 4.9H9.2M4.2 3.3L2.6 4.9L4.2 6.5M7.6 3.3L9.2 4.9L7.6 6.5" stroke="#e8e8e8" stroke-width="0.9" fill="none"/></svg>
<div style="left:0px;top:421.7px;width:107px;height:9.600000000000023px;background:#215a96;"></div>
<svg style="left:0.3px;top:423.0px;" width="5" height="6" viewBox="0 0 5 6"><path d="M0.8 2.4L2 3.8L4 1.2" stroke="#cfe0f4" stroke-width="0.7" fill="none"/></svg>
<svg style="left:4.1px;top:422.6px;" width="9" height="9" viewBox="0 0 9 9"><circle cx="4.5" cy="1.6" r="1.1" fill="#f0f0f0"/><path d="M1.2 3.4H7.8M4.5 3.2V5.4L2.4 8M4.5 5.4L6.6 8" stroke="#f0f0f0" stroke-width="1.1" fill="none" stroke-linecap="round"/></svg>
<span class="t" style="top:421.90px;line-height:10px;font-size:6.4px;color:#e8a838;left:14.6px;">Jugador blanco</span>
<svg style="left:97.7px;top:422.8px;" width="8" height="8" viewBox="0 0 8 8"><rect x="1" y="1" width="6" height="6" rx="0.8" fill="#f4f4f4"/><path d="M2.2 4L3.6 5.4L6 2.4" stroke="#282828" stroke-width="0.9" fill="none"/></svg>
<div style="left:3px;top:432.4px;width:104px;height:12.800000000000011px;background:#b7651c;border-radius:3px 0 0 3px;"></div>
<svg style="left:4.6px;top:434.79999999999995px;" width="9" height="9" viewBox="0 0 9 9"><rect x="0.8" y="2.6" width="2.2" height="1.6" fill="#f0f0f0"/><rect x="3.6" y="2.6" width="2.4" height="1.6" fill="#f0f0f0"/><rect x="6.6" y="2.6" width="1.8" height="1.6" fill="#f0f0f0"/><path d="M3.4 4.6V6.6" stroke="#f0f0f0" stroke-width="0.6"/><circle cx="3.4" cy="7.2" r="0.9" fill="none" stroke="#f0f0f0" stroke-width="0.6"/></svg>
<span class="t" style="top:434.90px;line-height:10px;font-size:6.4px;color:#e8a838;letter-spacing:0.047px;left:15.8px;">Jugador blancoAction</span>
<div style="left:96.6px;top:434.2px;width:9.4px;height:9.6px;background:#6a6a6a;border-radius:2px;"></div>
<svg style="left:96.6px;top:434.2px;" width="9.4" height="9.6" viewBox="0 0 9.4 9.6"><path d="M2.4 2H7M4.7 2V4.6M3.2 3.4L4.7 4.8L6.2 3.4" stroke="#f2f2f2" stroke-width="0.8" fill="none"/><rect x="2.2" y="5.6" width="5" height="1.2" fill="#f2f2f2"/><rect x="2.2" y="7.4" width="5" height="1" fill="#f2f2f2"/></svg>
<div style="left:3px;top:446.5px;width:104px;height:13.100000000000023px;background:#262626;"></div>
<span class="t" style="top:448.75px;line-height:10px;font-size:6.4px;color:#e8a838;letter-spacing:0.023px;left:7px;">mixamo.com.009</span>
<svg style="left:79.3px;top:450.65000000000003px;" width="8" height="8" viewBox="0 0 8 8"><rect x="1" y="1" width="6" height="6" rx="0.8" fill="#e0e0e0"/><path d="M2.2 4L3.6 5.4L6 2.4" stroke="#282828" stroke-width="0.9" fill="none"/></svg>
<svg style="left:87.5px;top:450.15000000000003px;" width="9" height="9" viewBox="0 0 9 9"><rect x="1.8" y="4.4" width="5" height="3.4" fill="none" stroke="#d8d8d8" stroke-width="0.7"/><path d="M3 4.4V2.6A1.5 1.5 0 0 1 6 2.4" stroke="#d8d8d8" stroke-width="0.7" fill="none"/></svg>
<svg style="left:97px;top:450.15000000000003px;" width="9" height="9" viewBox="0 0 9 9"><path d="M4.5 1L5.5 3.4L8.1 3.6L6.1 5.3L6.7 7.9L4.5 6.5L2.3 7.9L2.9 5.3L0.9 3.6L3.5 3.4Z" fill="none" stroke="#e8e8e8" stroke-width="0.8" stroke-linejoin="round"/></svg>
<div style="left:0px;top:460.6px;width:107px;height:12.599999999999966px;background:#215a96;"></div>
<svg style="left:0.3px;top:463.4px;" width="5" height="6" viewBox="0 0 5 6"><path d="M0.8 2.4L2 3.8L4 1.2" stroke="#cfe0f4" stroke-width="0.7" fill="none"/></svg>
<svg style="left:4.1px;top:463.0px;" width="9" height="9" viewBox="0 0 9 9"><circle cx="4.5" cy="1.6" r="1.1" fill="#f0f0f0"/><path d="M1.2 3.4H7.8M4.5 3.2V5.4L2.4 8M4.5 5.4L6.6 8" stroke="#f0f0f0" stroke-width="1.1" fill="none" stroke-linecap="round"/></svg>
<span class="t" style="top:462.30px;line-height:10px;font-size:6.4px;color:#e8a838;letter-spacing:-0.007px;left:14.6px;">mbappe quieto</span>
<svg style="left:97.7px;top:463.2px;" width="8" height="8" viewBox="0 0 8 8"><rect x="1" y="1" width="6" height="6" rx="0.8" fill="#f4f4f4"/><path d="M2.2 4L3.6 5.4L6 2.4" stroke="#282828" stroke-width="0.9" fill="none"/></svg>
<div style="left:3px;top:474.4px;width:104px;height:12.800000000000011px;background:#5b4620;border-radius:3px 0 0 3px;"></div>
<svg style="left:4.6px;top:476.79999999999995px;" width="9" height="9" viewBox="0 0 9 9"><rect x="0.8" y="2.6" width="2.2" height="1.6" fill="#f0f0f0"/><rect x="3.6" y="2.6" width="2.4" height="1.6" fill="#f0f0f0"/><rect x="6.6" y="2.6" width="1.8" height="1.6" fill="#f0f0f0"/><path d="M3.4 4.6V6.6" stroke="#f0f0f0" stroke-width="0.6"/><circle cx="3.4" cy="7.2" r="0.9" fill="none" stroke="#f0f0f0" stroke-width="0.6"/></svg>
<span class="t" style="top:476.90px;line-height:10px;font-size:6.4px;color:#e8a838;letter-spacing:0.034px;left:15.8px;">&lt;No Action&gt;</span>
<div style="left:3px;top:488.3px;width:104px;height:13.099999999999966px;background:#262626;"></div>
<span class="t" style="top:490.55px;line-height:10px;font-size:6.4px;color:#e8a838;letter-spacing:0.05px;left:7px;">mbappe quietoAction</span>
<svg style="left:79.3px;top:492.45000000000005px;" width="8" height="8" viewBox="0 0 8 8"><rect x="1" y="1" width="6" height="6" rx="0.8" fill="#e0e0e0"/><path d="M2.2 4L3.6 5.4L6 2.4" stroke="#282828" stroke-width="0.9" fill="none"/></svg>
<svg style="left:87.5px;top:491.95000000000005px;" width="9" height="9" viewBox="0 0 9 9"><rect x="1.8" y="4.4" width="5" height="3.4" fill="none" stroke="#d8d8d8" stroke-width="0.7"/><path d="M3 4.4V2.6A1.5 1.5 0 0 1 6 2.4" stroke="#d8d8d8" stroke-width="0.7" fill="none"/></svg>
<svg style="left:97px;top:491.95000000000005px;" width="9" height="9" viewBox="0 0 9 9"><path d="M4.5 1L5.5 3.4L8.1 3.6L6.1 5.3L6.7 7.9L4.5 6.5L2.3 7.9L2.9 5.3L0.9 3.6L3.5 3.4Z" fill="none" stroke="#e8e8e8" stroke-width="0.8" stroke-linejoin="round"/></svg>
<div style="left:3px;top:502.3px;width:104px;height:13.099999999999966px;background:#262626;"></div>
<span class="t" style="top:504.55px;line-height:10px;font-size:6.4px;color:#e8a838;letter-spacing:-0.009px;left:7px;">pateoMbappe</span>
<svg style="left:79.3px;top:506.45000000000005px;" width="8" height="8" viewBox="0 0 8 8"><rect x="1" y="1" width="6" height="6" rx="0.8" fill="#e0e0e0"/><path d="M2.2 4L3.6 5.4L6 2.4" stroke="#282828" stroke-width="0.9" fill="none"/></svg>
<svg style="left:87.5px;top:505.95000000000005px;" width="9" height="9" viewBox="0 0 9 9"><rect x="1.8" y="4.4" width="5" height="3.4" fill="none" stroke="#d8d8d8" stroke-width="0.7"/><path d="M3 4.4V2.6A1.5 1.5 0 0 1 6 2.4" stroke="#d8d8d8" stroke-width="0.7" fill="none"/></svg>
<svg style="left:97px;top:505.95000000000005px;" width="9" height="9" viewBox="0 0 9 9"><path d="M4.5 1L5.5 3.4L8.1 3.6L6.1 5.3L6.7 7.9L4.5 6.5L2.3 7.9L2.9 5.3L0.9 3.6L3.5 3.4Z" fill="none" stroke="#e8e8e8" stroke-width="0.8" stroke-linejoin="round"/></svg>
<div style="left:0;top:516.3px;width:107px;height:8.5px;overflow:hidden;">
<div style="left:3px;top:0px;width:104px;height:13px;background:#262626;"></div>
<span class="t" style="top:2.10px;line-height:10px;font-size:6.4px;color:#e8a838;letter-spacing:0.024px;left:7px;">quietombappe</span>
<svg style="left:79.3px;top:4.199999999999999px;" width="8" height="8" viewBox="0 0 8 8"><rect x="1" y="1" width="6" height="6" rx="0.8" fill="#e0e0e0"/><path d="M2.2 4L3.6 5.4L6 2.4" stroke="#282828" stroke-width="0.9" fill="none"/></svg>
<svg style="left:87.5px;top:3.7px;" width="9" height="9" viewBox="0 0 9 9"><rect x="1.8" y="4.4" width="5" height="3.4" fill="none" stroke="#d8d8d8" stroke-width="0.7"/><path d="M3 4.4V2.6A1.5 1.5 0 0 1 6 2.4" stroke="#d8d8d8" stroke-width="0.7" fill="none"/></svg>
<svg style="left:97px;top:3.7px;" width="9" height="9" viewBox="0 0 9 9"><path d="M4.5 1L5.5 3.4L8.1 3.6L6.1 5.3L6.7 7.9L4.5 6.5L2.3 7.9L2.9 5.3L0.9 3.6L3.5 3.4Z" fill="none" stroke="#e8e8e8" stroke-width="0.8" stroke-linejoin="round"/></svg>
</div>
<div style="left:107px;top:410.4px;width:611px;height:11.3px;background:#1c1c1c;"></div>
<div style="left:107px;top:421.7px;width:611px;height:9.900000000000034px;background:#232323;"></div>
<div style="left:141.8px;top:421.7px;width:576.2px;height:9.900000000000034px;background:#323232;"></div>
<div style="left:107px;top:431.6px;width:611px;height:13.799999999999955px;background:#4c331e;"></div>
<div style="left:141.8px;top:431.6px;width:576.2px;height:13.799999999999955px;background:#5e4126;"></div>
<div style="left:107px;top:445.4px;width:611px;height:1.0px;background:#2a241c;"></div>
<div style="left:141.8px;top:445.4px;width:576.2px;height:1.0px;background:#3a3228;"></div>
<div style="left:107px;top:446.4px;width:611px;height:13.400000000000034px;background:#453525;"></div>
<div style="left:141.8px;top:446.4px;width:576.2px;height:13.400000000000034px;background:#554331;"></div>
<div style="left:107px;top:459.8px;width:611px;height:14.399999999999977px;background:#232323;"></div>
<div style="left:141.8px;top:459.8px;width:576.2px;height:14.399999999999977px;background:#323232;"></div>
<div style="left:107px;top:474.2px;width:611px;height:13.600000000000023px;background:#2d281d;"></div>
<div style="left:141.8px;top:474.2px;width:576.2px;height:13.600000000000023px;background:#3b3527;"></div>
<div style="left:107px;top:487.8px;width:611px;height:0.5999999999999659px;background:#2a241c;"></div>
<div style="left:141.8px;top:487.8px;width:576.2px;height:0.5999999999999659px;background:#3a3228;"></div>
<div style="left:107px;top:488.4px;width:611px;height:13.200000000000045px;background:#463626;"></div>
<div style="left:141.8px;top:488.4px;width:576.2px;height:13.200000000000045px;background:#584431;"></div>
<div style="left:107px;top:501.6px;width:611px;height:5.0px;background:#222222;"></div>
<div style="left:141.8px;top:501.6px;width:576.2px;height:5.0px;background:#303030;"></div>
<div style="left:437.27450000000005px;top:446.4px;width:280.72549999999995px;height:13.4px;background:#76502a;"></div>
<div style="left:459px;top:488.4px;width:259px;height:13.2px;background:#76502a;"></div>
<svg style="left:139.3px;top:436px;" width="5" height="5" viewBox="0 0 5 5"><path d="M2.5 0.8L4.2 2.5L2.5 4.2L0.8 2.5Z" fill="none" stroke="#1e1408" stroke-width="0.7"/></svg>
<div style="left:141.5px;top:421.7px;width:0.6px;height:84.9px;background:rgba(0,0,0,0.05);"></div>
<div style="left:158.89999999999998px;top:421.7px;width:0.6px;height:84.9px;background:rgba(0,0,0,0.05);"></div>
<div style="left:176.29999999999998px;top:421.7px;width:0.6px;height:84.9px;background:rgba(0,0,0,0.05);"></div>
<div style="left:193.7px;top:421.7px;width:0.6px;height:84.9px;background:rgba(0,0,0,0.05);"></div>
<div style="left:211.2px;top:421.7px;width:0.6px;height:84.9px;background:rgba(0,0,0,0.05);"></div>
<div style="left:228.6px;top:421.7px;width:0.6px;height:84.9px;background:rgba(0,0,0,0.05);"></div>
<div style="left:246.0px;top:421.7px;width:0.6px;height:84.9px;background:rgba(0,0,0,0.05);"></div>
<div style="left:263.4px;top:421.7px;width:0.6px;height:84.9px;background:rgba(0,0,0,0.05);"></div>
<div style="left:280.8px;top:421.7px;width:0.6px;height:84.9px;background:rgba(0,0,0,0.05);"></div>
<div style="left:298.2px;top:421.7px;width:0.6px;height:84.9px;background:rgba(0,0,0,0.05);"></div>
<div style="left:315.7px;top:421.7px;width:0.6px;height:84.9px;background:rgba(0,0,0,0.05);"></div>
<div style="left:333.09999999999997px;top:421.7px;width:0.6px;height:84.9px;background:rgba(0,0,0,0.05);"></div>
<div style="left:350.5px;top:421.7px;width:0.6px;height:84.9px;background:rgba(0,0,0,0.05);"></div>
<div style="left:367.9px;top:421.7px;width:0.6px;height:84.9px;background:rgba(0,0,0,0.05);"></div>
<div style="left:385.3px;top:421.7px;width:0.6px;height:84.9px;background:rgba(0,0,0,0.05);"></div>
<div style="left:402.7px;top:421.7px;width:0.6px;height:84.9px;background:rgba(0,0,0,0.05);"></div>
<div style="left:420.09999999999997px;top:421.7px;width:0.6px;height:84.9px;background:rgba(0,0,0,0.05);"></div>
<div style="left:437.59999999999997px;top:421.7px;width:0.6px;height:84.9px;background:rgba(0,0,0,0.05);"></div>
<div style="left:455.0px;top:421.7px;width:0.6px;height:84.9px;background:rgba(0,0,0,0.05);"></div>
<div style="left:472.4px;top:421.7px;width:0.6px;height:84.9px;background:rgba(0,0,0,0.05);"></div>
<div style="left:489.8px;top:421.7px;width:0.6px;height:84.9px;background:rgba(0,0,0,0.05);"></div>
<div style="left:507.2px;top:421.7px;width:0.6px;height:84.9px;background:rgba(0,0,0,0.05);"></div>
<div style="left:524.6px;top:421.7px;width:0.6px;height:84.9px;background:rgba(0,0,0,0.05);"></div>
<div style="left:542.0px;top:421.7px;width:0.6px;height:84.9px;background:rgba(0,0,0,0.05);"></div>
<div style="left:559.5px;top:421.7px;width:0.6px;height:84.9px;background:rgba(0,0,0,0.05);"></div>
<div style="left:576.9000000000001px;top:421.7px;width:0.6px;height:84.9px;background:rgba(0,0,0,0.05);"></div>
<div style="left:594.3000000000001px;top:421.7px;width:0.6px;height:84.9px;background:rgba(0,0,0,0.05);"></div>
<div style="left:611.7px;top:421.7px;width:0.6px;height:84.9px;background:rgba(0,0,0,0.05);"></div>
<div style="left:629.1px;top:421.7px;width:0.6px;height:84.9px;background:rgba(0,0,0,0.05);"></div>
<div style="left:646.5px;top:421.7px;width:0.6px;height:84.9px;background:rgba(0,0,0,0.05);"></div>
<div style="left:663.9000000000001px;top:421.7px;width:0.6px;height:84.9px;background:rgba(0,0,0,0.05);"></div>
<div style="left:681.4000000000001px;top:421.7px;width:0.6px;height:84.9px;background:rgba(0,0,0,0.05);"></div>
<div style="left:698.8000000000001px;top:421.7px;width:0.6px;height:84.9px;background:rgba(0,0,0,0.05);"></div>
<div style="left:716.2px;top:421.7px;width:0.6px;height:84.9px;background:rgba(0,0,0,0.05);"></div>
<span class="t" style="top:412.40px;line-height:10px;font-size:6.2px;color:#9c9c9c;left:42.10px;width:200px;text-align:center;">0</span>
<span class="t" style="top:412.40px;line-height:10px;font-size:6.2px;color:#9c9c9c;left:76.93px;width:200px;text-align:center;">60</span>
<span class="t" style="top:412.40px;line-height:10px;font-size:6.2px;color:#9c9c9c;left:111.76px;width:200px;text-align:center;">120</span>
<span class="t" style="top:412.40px;line-height:10px;font-size:6.2px;color:#9c9c9c;left:146.59px;width:200px;text-align:center;">180</span>
<span class="t" style="top:412.40px;line-height:10px;font-size:6.2px;color:#9c9c9c;left:181.42px;width:200px;text-align:center;">240</span>
<span class="t" style="top:412.40px;line-height:10px;font-size:6.2px;color:#9c9c9c;left:216.25px;width:200px;text-align:center;">300</span>
<span class="t" style="top:412.40px;line-height:10px;font-size:6.2px;color:#9c9c9c;left:251.08px;width:200px;text-align:center;">360</span>
<span class="t" style="top:412.40px;line-height:10px;font-size:6.2px;color:#9c9c9c;left:285.91px;width:200px;text-align:center;">420</span>
<span class="t" style="top:412.40px;line-height:10px;font-size:6.2px;color:#9c9c9c;left:320.74px;width:200px;text-align:center;">480</span>
<span class="t" style="top:412.40px;line-height:10px;font-size:6.2px;color:#9c9c9c;left:355.57px;width:200px;text-align:center;">540</span>
<span class="t" style="top:412.40px;line-height:10px;font-size:6.2px;color:#9c9c9c;left:390.40px;width:200px;text-align:center;">600</span>
<span class="t" style="top:412.40px;line-height:10px;font-size:6.2px;color:#9c9c9c;left:460.06px;width:200px;text-align:center;">720</span>
<span class="t" style="top:412.40px;line-height:10px;font-size:6.2px;color:#9c9c9c;left:494.89px;width:200px;text-align:center;">780</span>
<span class="t" style="top:412.40px;line-height:10px;font-size:6.2px;color:#9c9c9c;left:529.72px;width:200px;text-align:center;">840</span>
<span class="t" style="top:412.40px;line-height:10px;font-size:6.2px;color:#9c9c9c;left:564.55px;width:200px;text-align:center;">900</span>
<span class="t" style="top:412.40px;line-height:10px;font-size:6.2px;color:#9c9c9c;left:599.38px;width:200px;text-align:center;">960</span>
<span class="t" style="top:412.40px;line-height:10px;font-size:6.2px;color:#9c9c9c;left:519.4300000000001px;">66</span>
<div style="left:107px;top:506.6px;width:611px;height:18.2px;background:#1a1a1a;"></div>
<div style="left:113.5px;top:521.6px;width:602px;height:1.1px;background:#4e4e4e;border-radius:1px;"></div>
<div style="left:410.3715px;top:446.8px;width:27.303000000000033px;height:12.6px;background:#fa9010;border:0.8px solid #f4f0e6;border-radius:1px;"></div>
<span class="t" style="top:449.20px;line-height:10px;font-size:6.4px;color:#1a1205;letter-spacing:0.134px;left:414.9px;">mixam</span>
<div style="left:369px;top:489px;width:90.2px;height:11.8px;background:#fa9010;border-radius:1px;"></div>
<span class="t" style="top:490.90px;line-height:10px;font-size:6.4px;color:#fff4e4;letter-spacing:0.076px;left:372px;">mbappe quietoAction</span>
<div style="left:444.6px;top:502.6px;width:32px;height:3.8px;background:#fa9010;"></div>
<svg style="left:444.4px;top:502.6px;" width="4" height="4" viewBox="0 0 4 4"><path d="M0.4 3.6L2.2 0.8" stroke="#fff" stroke-width="0.5"/></svg>
<div style="left:142px;top:421.7px;width:1px;height:87.30000000000001px;background:repeating-linear-gradient(to bottom,rgba(230,230,230,0.6) 0,rgba(230,230,230,0.6) 1px,transparent 1px,transparent 2px);"></div>
<div style="left:261px;top:421.7px;width:1px;height:87.30000000000001px;background:repeating-linear-gradient(to bottom,rgba(230,230,230,0.6) 0,rgba(230,230,230,0.6) 1px,transparent 1px,transparent 2px);"></div>
<div style="left:335px;top:421.7px;width:1px;height:87.30000000000001px;background:repeating-linear-gradient(to bottom,rgba(230,230,230,0.6) 0,rgba(230,230,230,0.6) 1px,transparent 1px,transparent 2px);"></div>
<div style="left:341px;top:421.7px;width:1px;height:87.30000000000001px;background:repeating-linear-gradient(to bottom,rgba(230,230,230,0.6) 0,rgba(230,230,230,0.6) 1px,transparent 1px,transparent 2px);"></div>
<div style="left:409px;top:421.7px;width:1px;height:87.30000000000001px;background:repeating-linear-gradient(to bottom,rgba(230,230,230,0.6) 0,rgba(230,230,230,0.6) 1px,transparent 1px,transparent 2px);"></div>
<svg style="left:137.3805px;top:510.0px;" width="10" height="9" viewBox="0 0 10 9"><circle cx="3.1" cy="2.7" r="1.2" fill="none" stroke="#b4b4b4" stroke-width="0.7"/><circle cx="6.1" cy="2.5" r="1.5" fill="none" stroke="#b4b4b4" stroke-width="0.7"/><rect x="1.6" y="4.4" width="5.6" height="3.4" rx="0.7" fill="none" stroke="#b4b4b4" stroke-width="0.7"/><path d="M7.3 5.6L9.2 4.7V7.7L7.3 6.8" fill="none" stroke="#b4b4b4" stroke-width="0.7"/></svg>
<span class="t" style="top:510.50px;line-height:10px;font-size:6.3px;color:#b4b4b4;letter-spacing:-0.151px;left:148px;">Camera</span>
<svg style="left:256.09275px;top:510.0px;" width="10" height="9" viewBox="0 0 10 9"><circle cx="3.1" cy="2.7" r="1.2" fill="none" stroke="#b4b4b4" stroke-width="0.7"/><circle cx="6.1" cy="2.5" r="1.5" fill="none" stroke="#b4b4b4" stroke-width="0.7"/><rect x="1.6" y="4.4" width="5.6" height="3.4" rx="0.7" fill="none" stroke="#b4b4b4" stroke-width="0.7"/><path d="M7.3 5.6L9.2 4.7V7.7L7.3 6.8" fill="none" stroke="#b4b4b4" stroke-width="0.7"/></svg>
<span class="t" style="top:510.50px;line-height:10px;font-size:6.3px;color:#b4b4b4;letter-spacing:-0.116px;left:266px;">Camera.001</span>
<svg style="left:330.57090000000005px;top:510.0px;" width="10" height="9" viewBox="0 0 10 9"><circle cx="3.1" cy="2.7" r="1.2" fill="none" stroke="#b4b4b4" stroke-width="0.7"/><circle cx="6.1" cy="2.5" r="1.5" fill="none" stroke="#b4b4b4" stroke-width="0.7"/><rect x="1.6" y="4.4" width="5.6" height="3.4" rx="0.7" fill="none" stroke="#b4b4b4" stroke-width="0.7"/><path d="M7.3 5.6L9.2 4.7V7.7L7.3 6.8" fill="none" stroke="#b4b4b4" stroke-width="0.7"/></svg>
<svg style="left:336.66615px;top:510.0px;" width="10" height="9" viewBox="0 0 10 9"><circle cx="3.1" cy="2.7" r="1.2" fill="none" stroke="#b4b4b4" stroke-width="0.7"/><circle cx="6.1" cy="2.5" r="1.5" fill="none" stroke="#b4b4b4" stroke-width="0.7"/><rect x="1.6" y="4.4" width="5.6" height="3.4" rx="0.7" fill="none" stroke="#b4b4b4" stroke-width="0.7"/><path d="M7.3 5.6L9.2 4.7V7.7L7.3 6.8" fill="none" stroke="#b4b4b4" stroke-width="0.7"/></svg>
<span class="t" style="top:510.50px;line-height:10px;font-size:6.3px;color:#b4b4b4;letter-spacing:-0.116px;left:346.4px;">Camera.002</span>
<svg style="left:404.99100000000004px;top:510.0px;" width="10" height="9" viewBox="0 0 10 9"><circle cx="3.1" cy="2.6" r="1.5" fill="#ffffff"/><circle cx="6.2" cy="2.4" r="1.8" fill="#ffffff"/><rect x="1.6" y="4.2" width="5.8" height="3.8" rx="0.7" fill="#ffffff"/><path d="M7.4 5.4L9.4 4.4V8L7.4 7Z" fill="#ffffff"/><circle cx="4.4" cy="6.1" r="0.9" fill="#1a1a1a"/></svg>
<span class="t" style="top:507.00px;line-height:10px;font-size:6.3px;color:#ffffff;letter-spacing:-0.066px;left:414.9px;">Camera.002</span>
<div style="left:533.8985px;top:416px;width:1.4px;height:108px;background:#4772b3;"></div>
<div style="left:527.2985000000001px;top:411.2px;width:14.6px;height:9.400000000000034px;background:#4772b3;border-radius:2px;"></div>
<span class="t" style="top:412.10px;line-height:10px;font-size:6.4px;color:#ffffff;font-weight:700;letter-spacing:0.276px;left:434.74px;width:200px;text-align:center;">677</span>
<div style="left:718px;top:410.4px;width:123px;height:114.4px;background:#303030;border-radius:0 0 3px 0;"></div>
<svg style="left:722.5px;top:414.9px;" width="9" height="9" viewBox="0 0 9 9"><path d="M1.2 2H4.2C5.6 2 5.6 4 4.2 4.4C3 4.8 3 6.6 4.4 6.6H7.4M6 5.2L7.6 6.6L6 8" stroke="#d8d8d8" stroke-width="0.8" fill="none"/></svg>
<div style="left:737.5px;top:414.8px;width:72.5px;height:9.3px;background:#1f1f1f;border-radius:2px;"></div>
<svg style="left:739.5px;top:415px;" width="9" height="9" viewBox="0 0 9 9"><path d="M1.6 1.6V6.4M3.6 1.6V4.4M1.6 1.6H3.6M5 2H8M5 4.2H8M1 7.6H8" stroke="#f0f0f0" stroke-width="0.8" fill="none"/></svg>
<span class="t" style="top:415.40px;line-height:10px;font-size:6.4px;color:#f0f0f0;letter-spacing:0.052px;left:750.3px;">mixamo.com.009</span>
<svg style="left:816.5px;top:415.4px;" width="8" height="8" viewBox="0 0 8 8"><rect x="1" y="1" width="6" height="6" rx="0.8" fill="#f4f4f4"/><path d="M2.2 4L3.6 5.4L6 2.4" stroke="#282828" stroke-width="0.9" fill="none"/></svg>
<div style="left:722.3px;top:430.6px;width:103.2px;height:94.2px;background:#3a3a3a;border-radius:3px 3px 0 0;"></div>
<svg style="left:725.1px;top:434.2px;" width="7" height="6" viewBox="0 0 7 6"><path d="M1 1.8L3.5 4.3L6 1.8" stroke="#d0d0d0" stroke-width="0.8" fill="none"/></svg>
<span class="t" style="top:433.00px;line-height:10px;font-size:6.4px;color:#f0f0f0;letter-spacing:-0.027px;left:733.7px;">Active Strip</span>
<svg style="left:815px;top:435.2px;" width="7" height="4" viewBox="0 0 7 4"><rect x="0.4" y="0.6" width="0.9" height="0.9" fill="#5a5a5a"/><rect x="0.4" y="2.1" width="0.9" height="0.9" fill="#5a5a5a"/><rect x="2.0" y="0.6" width="0.9" height="0.9" fill="#5a5a5a"/><rect x="2.0" y="2.1" width="0.9" height="0.9" fill="#5a5a5a"/><rect x="3.6" y="0.6" width="0.9" height="0.9" fill="#5a5a5a"/><rect x="3.6" y="2.1" width="0.9" height="0.9" fill="#5a5a5a"/><rect x="5.200000000000001" y="0.6" width="0.9" height="0.9" fill="#5a5a5a"/><rect x="5.200000000000001" y="2.1" width="0.9" height="0.9" fill="#5a5a5a"/></svg>
<span class="t" style="top:449.00px;line-height:10px;font-size:6.4px;color:#e6e6e6;letter-spacing:-0.068px;right:262.47px;">Frame Start</span>
<div style="left:767.1px;top:448.3px;width:53.89999999999998px;height:9.399999999999977px;background:#545454;border-radius:2px 2px 0 0;"></div>
<span class="t" style="top:449.00px;line-height:10px;font-size:6.4px;color:#e8e8e8;left:694.05px;width:200px;text-align:center;">463.000</span>
<span class="t" style="top:459.50px;line-height:10px;font-size:6.4px;color:#e6e6e6;letter-spacing:-0.125px;right:262.52px;">End</span>
<div style="left:767.1px;top:458.6px;width:53.89999999999998px;height:9.599999999999966px;background:#545454;border-radius:0 0 2px 2px;"></div>
<span class="t" style="top:459.50px;line-height:10px;font-size:6.4px;color:#e8e8e8;left:694.05px;width:200px;text-align:center;">509.000</span>
<span class="t" style="top:473.30px;line-height:10px;font-size:6.4px;color:#e6e6e6;letter-spacing:-0.008px;right:262.41px;">Extrapolat...</span>
<div style="left:767.1px;top:472.4px;width:53.89999999999998px;height:9.400000000000034px;background:#282828;border-radius:2px;"></div>
<span class="t" style="top:473.30px;line-height:10px;font-size:6.4px;color:#e8e8e8;left:770.7px;">Hold</span>
<svg style="left:814.6px;top:474.3px;" width="6" height="6" viewBox="0 0 6 6"><path d="M1.3 2.2L3 3.9L4.7 2.2" stroke="#d8d8d8" stroke-width="0.7" fill="none"/></svg>
<span class="t" style="top:485.00px;line-height:10px;font-size:6.4px;color:#e6e6e6;letter-spacing:0.016px;right:262.38px;">Blending</span>
<div style="left:767.1px;top:484.3px;width:53.89999999999998px;height:9.300000000000011px;background:#282828;border-radius:2px;"></div>
<span class="t" style="top:485.00px;line-height:10px;font-size:6.4px;color:#e8e8e8;left:770.7px;">Replace</span>
<svg style="left:814.6px;top:486px;" width="6" height="6" viewBox="0 0 6 6"><path d="M1.3 2.2L3 3.9L4.7 2.2" stroke="#d8d8d8" stroke-width="0.7" fill="none"/></svg>
<span class="t" style="top:504.00px;line-height:10px;font-size:6.4px;color:#e6e6e6;letter-spacing:0.068px;right:262.33px;">Blend In</span>
<div style="left:767.1px;top:503.3px;width:53.89999999999998px;height:9.400000000000034px;background:#545454;border-radius:2px 2px 0 0;"></div>
<span class="t" style="top:504.00px;line-height:10px;font-size:6.4px;color:#e8e8e8;left:694.05px;width:200px;text-align:center;">0.000</span>
<span class="t" style="top:514.50px;line-height:10px;font-size:6.4px;color:#e6e6e6;letter-spacing:-0.104px;right:262.50px;">Out</span>
<div style="left:767.1px;top:513.6px;width:53.89999999999998px;height:9.600000000000023px;background:#545454;border-radius:0 0 2px 2px;"></div>
<span class="t" style="top:514.50px;line-height:10px;font-size:6.4px;color:#e8e8e8;left:694.05px;width:200px;text-align:center;">0.000</span>
<div style="left:826.4px;top:412px;width:1.2px;height:59px;background:#5a5a5a;border-radius:1px;"></div>
<div style="left:829.6px;top:412px;width:9.4px;height:21.69999999999999px;background:#3a3a3a;border-radius:1px 2.5px 2.5px 1px;"></div>
<div style="left:834px;top:422.85px;width:0;height:0;transform:rotate(90deg)"><span class="t" style="top:-5.00px;line-height:10px;font-size:6.4px;color:#ffffff;letter-spacing:0.072px;left:-99.96px;width:200px;text-align:center;">Strip</span></div>
<div style="left:829.6px;top:437px;width:9.4px;height:34.5px;background:#262626;border-radius:1px 2.5px 2.5px 1px;"></div>
<div style="left:834px;top:454.25px;width:0;height:0;transform:rotate(90deg)"><span class="t" style="top:-5.00px;line-height:10px;font-size:6.4px;color:#a0a0a0;letter-spacing:0.062px;left:-99.97px;width:200px;text-align:center;">Modifiers</span></div>
<svg style="left:2px;top:526px;" width="9" height="10" viewBox="0 0 9 10"><rect x="1" y="1" width="5.4" height="7.6" rx="1.6" fill="none" stroke="#a8a8a8" stroke-width="0.7"/><rect x="1" y="1" width="2.6" height="3.4" fill="#a8a8a8"/></svg>
<span class="t" style="top:527.30px;line-height:10px;font-size:6.4px;color:#9a9a9a;letter-spacing:-0.174px;left:11.4px;">Resize</span>
<svg style="left:34px;top:526px;" width="9" height="10" viewBox="0 0 9 10"><rect x="1" y="1" width="5.4" height="7.6" rx="1.6" fill="none" stroke="#a8a8a8" stroke-width="0.7"/><rect x="3.8" y="1" width="2.6" height="3.4" fill="#a8a8a8"/></svg>
<span class="t" style="top:527.30px;line-height:10px;font-size:6.4px;color:#9a9a9a;left:42.5px;">Options</span>
<span class="t" style="top:527.30px;line-height:10px;font-size:6.4px;color:#9a9a9a;letter-spacing:-0.044px;right:6.04px;">5.1.0</span>
<div style="left:848.6px;top:287px;width:15px;height:9.6px;background:#282828;border-radius:2px;"></div>
<svg style="left:848.8px;top:287.3px;" width="10" height="9" viewBox="0 0 10 9"><rect x="1.2" y="1.6" width="7" height="2.6" rx="1.3" fill="#efefef"/><rect x="1.2" y="5" width="7" height="2.6" rx="1.3" fill="#efefef"/><circle cx="6.8" cy="2.9" r="0.9" fill="#303030"/><circle cx="2.6" cy="6.3" r="0.9" fill="#303030"/></svg>
<svg style="left:857.4px;top:288.7px;" width="6" height="6" viewBox="0 0 6 6"><path d="M1.3 2.2L3 3.9L4.7 2.2" stroke="#d8d8d8" stroke-width="0.7" fill="none"/></svg>
<div style="left:902.4px;top:287px;width:61.8px;height:9.2px;background:#1d1d1d;border-radius:2px;"></div>
<svg style="left:903.8px;top:287.2px;" width="9" height="9" viewBox="0 0 9 9"><circle cx="3.8" cy="3.6" r="2.3" stroke="#e0e0e0" stroke-width="0.8" fill="none"/><path d="M5.4 5.4L7.8 7.8" stroke="#e0e0e0" stroke-width="0.9"/></svg>
<span class="t" style="top:287.70px;line-height:10px;font-size:6.4px;color:#5e5e5e;letter-spacing:-0.125px;left:915.9px;">Search</span>
<div style="left:1010.2px;top:287px;width:8.8px;height:9.4px;background:#282828;border-radius:2px;"></div>
<svg style="left:1011.6px;top:288.7px;" width="6" height="6" viewBox="0 0 6 6"><path d="M1.3 2.2L3 3.9L4.7 2.2" stroke="#d8d8d8" stroke-width="0.7" fill="none"/></svg>
<div style="left:843px;top:299.5px;width:15.3px;height:225.3px;background:#1f1f1f;border-radius:0 0 0 3px;"></div>
<div style="left:844px;top:338px;width:14.3px;height:14px;background:#303030;border-radius:2px 0 0 2px;"></div>
<svg style="left:845.6px;top:305.3px;" width="10" height="10" viewBox="0 0 10 10"><path d="M2.6 1.4V4.2M2.6 5.4V8.6M1.8 4.2H3.4V5.4H1.8Z" stroke="#e0e0e0" stroke-width="0.9" fill="none"/><path d="M6 1.6L7 4L8 1.6M7 4V8.6" stroke="#e0e0e0" stroke-width="0.9" fill="none"/></svg>
<svg style="left:845.6px;top:324.8px;" width="10" height="10" viewBox="0 0 10 10"><rect x="1.6" y="3" width="6" height="5" fill="none" stroke="#c8c8c8" stroke-width="0.8"/><path d="M3 3V1.8H6.2V3M7.6 4.4L8.8 4V7L7.6 6.6" stroke="#c8c8c8" stroke-width="0.8" fill="none"/></svg>
<svg style="left:845.6px;top:339.8px;" width="10" height="10" viewBox="0 0 10 10"><path d="M1.6 4.4V2.2H8.4V4.4" stroke="#e4e4e4" stroke-width="0.9" fill="none"/><rect x="2.6" y="4.4" width="4.8" height="4" fill="none" stroke="#e4e4e4" stroke-width="0.8"/><rect x="3.8" y="5.6" width="2.4" height="1.6" fill="#e4e4e4"/></svg>
<svg style="left:845.6px;top:354.7px;" width="10" height="10" viewBox="0 0 10 10"><rect x="1.6" y="3" width="5.6" height="5" fill="#c8c8c8"/><path d="M3 1.8H8.4V6.8" stroke="#c8c8c8" stroke-width="0.8" fill="none"/><path d="M2.6 7L4 5L5 6L6.2 4.6V7Z" fill="#1f1f1f"/></svg>
<svg style="left:845.6px;top:369.5px;" width="10" height="10" viewBox="0 0 10 10"><path d="M2 8L3.4 2.2L5.4 1.6L6 8Z" fill="#d8d8d8"/><circle cx="6.8" cy="6.6" r="1.8" fill="#1f1f1f" stroke="#d8d8d8" stroke-width="0.7"/><circle cx="7" cy="2.4" r="0.9" fill="#d8d8d8"/></svg>
<svg style="left:845.6px;top:384.5px;" width="10" height="10" viewBox="0 0 10 10"><circle cx="5" cy="5" r="3.4" fill="none" stroke="#e04a5a" stroke-width="0.9"/><path d="M3 3.4C4.4 4 4.6 5.2 3.8 6.6M5.6 2C6 3.4 7.2 4 8 4.2M5.6 8C5.8 7 6.6 6.4 7.8 6.6" stroke="#e04a5a" stroke-width="0.8" fill="none"/></svg>
<svg style="left:845.6px;top:403.5px;" width="10" height="10" viewBox="0 0 10 10"><rect x="2.4" y="2.4" width="5.2" height="5.2" fill="#e8923c"/><path d="M1 2.8V1H2.8M7.2 1H9V2.8M9 7.2V9H7.2M2.8 9H1V7.2" stroke="#e8923c" stroke-width="0.8" fill="none"/></svg>
<svg style="left:845.6px;top:418.7px;" width="10" height="10" viewBox="0 0 10 10"><path d="M2 8.2L5.4 4.8M5 3.4A2.2 2.2 0 0 1 8.2 2L6.8 3.4L7.4 4.2L8.8 3A2.2 2.2 0 0 1 5.8 5.2" stroke="#4c8be0" stroke-width="1.2" fill="none" stroke-linecap="round"/></svg>
<svg style="left:845.6px;top:433.3px;" width="10" height="10" viewBox="0 0 10 10"><circle cx="2.4" cy="2.6" r="1.1" fill="#4c8be0"/><path d="M2.4 2.6L8 2.4M2.4 2.6L4.4 8.2M2.4 2.6L8.4 7" stroke="#4c8be0" stroke-width="0.8"/><circle cx="8" cy="2.4" r="0.8" fill="#4c8be0"/><circle cx="4.4" cy="8.2" r="0.8" fill="#4c8be0"/></svg>
<svg style="left:845.6px;top:448.5px;" width="10" height="10" viewBox="0 0 10 10"><circle cx="5" cy="5" r="3.4" fill="none" stroke="#4c8be0" stroke-width="0.9" stroke-dasharray="8 2.5"/><circle cx="5" cy="5" r="1.4" fill="#4c8be0"/></svg>
<svg style="left:845.6px;top:463.5px;" width="10" height="10" viewBox="0 0 10 10"><ellipse cx="4" cy="5.6" rx="2.6" ry="1.9" fill="none" stroke="#4c8be0" stroke-width="1"/><ellipse cx="6.2" cy="4.2" rx="2.6" ry="1.9" fill="none" stroke="#4c8be0" stroke-width="1"/></svg>
<svg style="left:845.6px;top:478px;" width="10" height="10" viewBox="0 0 10 10"><path d="M1.4 2H8.6L5 8.6Z" fill="none" stroke="#27c08c" stroke-width="1.1" stroke-linejoin="round"/><circle cx="1.6" cy="2" r="0.9" fill="#27c08c"/><circle cx="8.4" cy="2" r="0.9" fill="#27c08c"/><circle cx="5" cy="8.4" r="0.9" fill="#27c08c"/></svg>
<svg style="left:845.6px;top:493.3px;" width="10" height="10" viewBox="0 0 10 10"><circle cx="5" cy="5" r="3.5" fill="#e0525e"/><path d="M5 5L2 3.4A3.5 3.5 0 0 1 5 1.5Z M5 5L8 6.6A3.5 3.5 0 0 1 5 8.5Z" fill="#f4c4c8"/></svg>
<svg style="left:845.6px;top:512.6px;" width="10" height="10" viewBox="0 0 10 10"><path d="M2.2 2.4H8.4L7.6 4.4H1.6Z" fill="none" stroke="#c8c8c8" stroke-width="0.8"/><rect x="1.6" y="6" width="6" height="1.8" fill="none" stroke="#c8c8c8" stroke-width="0.7"/></svg>
<svg style="left:862.5px;top:303.7px;" width="10" height="10" viewBox="0 0 10 10"><path d="M2 8L3.4 2.2L5.4 1.6L6 8Z" fill="#e4e4e4"/><circle cx="6.8" cy="6.6" r="1.8" fill="#303030" stroke="#e4e4e4" stroke-width="0.7"/><circle cx="7" cy="2.4" r="0.9" fill="#e4e4e4"/></svg>
<span class="t" style="top:304.60px;line-height:10px;font-size:6.4px;color:#e6e6e6;letter-spacing:-0.225px;left:876.4px;">Scene</span>
<svg style="left:1009px;top:304px;" width="10" height="10" viewBox="0 0 10 10"><path d="M5.4 1.6L8 4.2L6.6 4.6L5.6 6.4L3.2 4L5 3Z M3.8 5.6L1.8 7.8" stroke="#b8b8b8" stroke-width="0.7" fill="none"/></svg>
<div style="left:862.1px;top:319.4px;width:157.19999999999993px;height:113.4px;background:#3a3a3a;border-radius:3px;"></div>
<svg style="left:865.6px;top:323.3px;" width="7" height="6" viewBox="0 0 7 6"><path d="M1 1.8L3.5 4.3L6 1.8" stroke="#d0d0d0" stroke-width="0.8" fill="none"/></svg>
<span class="t" style="top:322.10px;line-height:10px;font-size:6.4px;color:#f0f0f0;letter-spacing:0.042px;left:873.8px;">Format</span>
<svg style="left:995px;top:321.6px;" width="10" height="10" viewBox="0 0 10 10"><path d="M2.4 1.6V8.4M5 1.6V8.4M7.6 1.6V8.4" stroke="#d0d0d0" stroke-width="0.7"/><rect x="1.6" y="5" width="1.6" height="1.6" fill="#d0d0d0"/><rect x="4.2" y="2.6" width="1.6" height="1.6" fill="#d0d0d0"/><rect x="6.8" y="5.8" width="1.6" height="1.6" fill="#d0d0d0"/></svg>
<svg style="left:1008px;top:324.3px;" width="7" height="4" viewBox="0 0 7 4"><rect x="0.4" y="0.6" width="0.9" height="0.9" fill="#5a5a5a"/><rect x="0.4" y="2.1" width="0.9" height="0.9" fill="#5a5a5a"/><rect x="2.0" y="0.6" width="0.9" height="0.9" fill="#5a5a5a"/><rect x="2.0" y="2.1" width="0.9" height="0.9" fill="#5a5a5a"/><rect x="3.6" y="0.6" width="0.9" height="0.9" fill="#5a5a5a"/><rect x="3.6" y="2.1" width="0.9" height="0.9" fill="#5a5a5a"/><rect x="5.200000000000001" y="0.6" width="0.9" height="0.9" fill="#5a5a5a"/><rect x="5.200000000000001" y="2.1" width="0.9" height="0.9" fill="#5a5a5a"/></svg>
<span class="t" style="top:338.20px;line-height:10px;font-size:6.4px;color:#e6e6e6;letter-spacing:0.021px;right:100.78px;">Resolution X</span>
<div style="left:928.9px;top:337.6px;width:85.20000000000005px;height:9.599999999999966px;background:#545454;border-radius:2px 2px 0 0;"></div>
<span class="t" style="top:338.20px;line-height:10px;font-size:6.4px;color:#e8e8e8;left:871.50px;width:200px;text-align:center;">1920 px</span>
<span class="t" style="top:348.60px;line-height:10px;font-size:6.4px;color:#e6e6e6;right:100.80px;">Y</span>
<div style="left:928.9px;top:348px;width:85.20000000000005px;height:9.399999999999977px;background:#545454;border-radius:0;"></div>
<span class="t" style="top:348.60px;line-height:10px;font-size:6.4px;color:#e8e8e8;left:871.50px;width:200px;text-align:center;">1080 px</span>
<span class="t" style="top:359.00px;line-height:10px;font-size:6.4px;color:#e6e6e6;right:100.80px;">%</span>
<div style="left:928.9px;top:358.3px;width:85.20000000000005px;height:9.699999999999989px;background:#4772b3;border-radius:0 0 2px 2px;"></div>
<span class="t" style="top:359.00px;line-height:10px;font-size:6.4px;color:#ffffff;left:871.50px;width:200px;text-align:center;">100%</span>
<span class="t" style="top:372.80px;line-height:10px;font-size:6.4px;color:#e6e6e6;letter-spacing:-0.01px;right:100.81px;">Aspect X</span>
<div style="left:928.9px;top:372.1px;width:85.20000000000005px;height:9.599999999999966px;background:#545454;border-radius:2px 2px 0 0;"></div>
<span class="t" style="top:372.80px;line-height:10px;font-size:6.4px;color:#e8e8e8;left:871.50px;width:200px;text-align:center;">1.000</span>
<span class="t" style="top:383.20px;line-height:10px;font-size:6.4px;color:#e6e6e6;right:100.80px;">Y</span>
<div style="left:928.9px;top:382.5px;width:85.20000000000005px;height:9.600000000000023px;background:#545454;border-radius:0 0 2px 2px;"></div>
<span class="t" style="top:383.20px;line-height:10px;font-size:6.4px;color:#e8e8e8;left:871.50px;width:200px;text-align:center;">1.000</span>
<div style="left:929px;top:397.4px;width:6.6px;height:6.6px;background:#545454;border-radius:1.5px;"></div>
<span class="t" style="top:396.80px;line-height:10px;font-size:6.4px;color:#e6e6e6;letter-spacing:-0.154px;left:937.7px;">Render Region</span>
<div style="left:929px;top:408px;width:6.6px;height:6.6px;background:#454545;border-radius:1.5px;"></div>
<span class="t" style="top:407.30px;line-height:10px;font-size:6.4px;color:#8a8a8a;letter-spacing:-0.106px;left:937.7px;">Crop to Render Region</span>
<span class="t" style="top:420.80px;line-height:10px;font-size:6.4px;color:#e6e6e6;letter-spacing:-0.225px;right:101.02px;">Frame Rate</span>
<div style="left:928.9px;top:420.3px;width:85.20000000000005px;height:9px;background:#282828;border-radius:2px;"></div>
<span class="t" style="top:420.80px;line-height:10px;font-size:6.4px;color:#e8e8e8;letter-spacing:0.013px;left:933.1px;">30 fps</span>
<svg style="left:1007.8px;top:421.8px;" width="6" height="6" viewBox="0 0 6 6"><path d="M1.3 2.2L3 3.9L4.7 2.2" stroke="#d8d8d8" stroke-width="0.7" fill="none"/></svg>
<div style="left:862.1px;top:435.6px;width:157.19999999999993px;height:66.3px;background:#3a3a3a;border-radius:3px;"></div>
<svg style="left:865.6px;top:439.7px;" width="7" height="6" viewBox="0 0 7 6"><path d="M1 1.8L3.5 4.3L6 1.8" stroke="#d0d0d0" stroke-width="0.8" fill="none"/></svg>
<span class="t" style="top:438.50px;line-height:10px;font-size:6.4px;color:#f0f0f0;letter-spacing:-0.216px;left:874px;">Frame Range</span>
<svg style="left:1008px;top:440.7px;" width="7" height="4" viewBox="0 0 7 4"><rect x="0.4" y="0.6" width="0.9" height="0.9" fill="#5a5a5a"/><rect x="0.4" y="2.1" width="0.9" height="0.9" fill="#5a5a5a"/><rect x="2.0" y="0.6" width="0.9" height="0.9" fill="#5a5a5a"/><rect x="2.0" y="2.1" width="0.9" height="0.9" fill="#5a5a5a"/><rect x="3.6" y="0.6" width="0.9" height="0.9" fill="#5a5a5a"/><rect x="3.6" y="2.1" width="0.9" height="0.9" fill="#5a5a5a"/><rect x="5.200000000000001" y="0.6" width="0.9" height="0.9" fill="#5a5a5a"/><rect x="5.200000000000001" y="2.1" width="0.9" height="0.9" fill="#5a5a5a"/></svg>
<span class="t" style="top:454.20px;line-height:10px;font-size:6.4px;color:#e6e6e6;letter-spacing:-0.114px;right:100.91px;">Frame Start</span>
<div style="left:928.9px;top:453.7px;width:85.20000000000005px;height:9.300000000000011px;background:#545454;border-radius:2px 2px 0 0;"></div>
<span class="t" style="top:454.20px;line-height:10px;font-size:6.4px;color:#e8e8e8;left:871.50px;width:200px;text-align:center;">1</span>
<span class="t" style="top:465.00px;line-height:10px;font-size:6.4px;color:#e6e6e6;letter-spacing:-0.125px;right:100.92px;">End</span>
<div style="left:928.9px;top:463.9px;width:85.20000000000005px;height:9.600000000000023px;background:#545454;border-radius:0;"></div>
<span class="t" style="top:465.00px;line-height:10px;font-size:6.4px;color:#e8e8e8;left:871.50px;width:200px;text-align:center;">1000</span>
<span class="t" style="top:475.50px;line-height:10px;font-size:6.4px;color:#e6e6e6;letter-spacing:-0.164px;right:100.96px;">Step</span>
<div style="left:928.9px;top:474.4px;width:85.20000000000005px;height:9.5px;background:#545454;border-radius:0 0 2px 2px;"></div>
<span class="t" style="top:475.50px;line-height:10px;font-size:6.4px;color:#e8e8e8;left:871.50px;width:200px;text-align:center;">1</span>
<svg style="left:873.6px;top:492.7px;" width="6" height="7" viewBox="0 0 6 7"><path d="M1.8 1L4.3 3.5L1.8 6" stroke="#d0d0d0" stroke-width="0.8" fill="none"/></svg>
<span class="t" style="top:492.10px;line-height:10px;font-size:6.4px;color:#f0f0f0;left:881.4px;">Time Stretching</span>
<div style="left:862.1px;top:503.8px;width:157.19999999999993px;height:13.3px;background:#3a3a3a;border-radius:3px;"></div>
<svg style="left:866.1px;top:507.3px;" width="6" height="7" viewBox="0 0 6 7"><path d="M1.8 1L4.3 3.5L1.8 6" stroke="#d0d0d0" stroke-width="0.8" fill="none"/></svg>
<div style="left:873.7px;top:507.5px;width:6.4px;height:6.4px;background:#545454;border-radius:1.5px;"></div>
<span class="t" style="top:506.70px;line-height:10px;font-size:6.4px;color:#f0f0f0;letter-spacing:-0.03px;left:881.4px;">Stereoscopy</span>
<svg style="left:1008px;top:508.8px;" width="7" height="4" viewBox="0 0 7 4"><rect x="0.4" y="0.6" width="0.9" height="0.9" fill="#5a5a5a"/><rect x="0.4" y="2.1" width="0.9" height="0.9" fill="#5a5a5a"/><rect x="2.0" y="0.6" width="0.9" height="0.9" fill="#5a5a5a"/><rect x="2.0" y="2.1" width="0.9" height="0.9" fill="#5a5a5a"/><rect x="3.6" y="0.6" width="0.9" height="0.9" fill="#5a5a5a"/><rect x="3.6" y="2.1" width="0.9" height="0.9" fill="#5a5a5a"/><rect x="5.200000000000001" y="0.6" width="0.9" height="0.9" fill="#5a5a5a"/><rect x="5.200000000000001" y="2.1" width="0.9" height="0.9" fill="#5a5a5a"/></svg>
<div style="left:862.1px;top:519px;width:157.19999999999993px;height:5.8px;background:#3a3a3a;border-radius:3px 3px 0 0;"></div>
<div style="left:862px;top:519px;width:157px;height:5.8px;overflow:hidden;">
<span class="t" style="top:2.90px;line-height:10px;font-size:6.4px;color:#f0f0f0;letter-spacing:-0.031px;left:11.7px;">Output</span>
<svg style="left:4px;top:4px;" width="6" height="6" viewBox="0 0 6 6"><path d="M1 2L3 4L5 2" stroke="#d0d0d0" stroke-width="0.7" fill="none"/></svg>
</div>
</body></html>
